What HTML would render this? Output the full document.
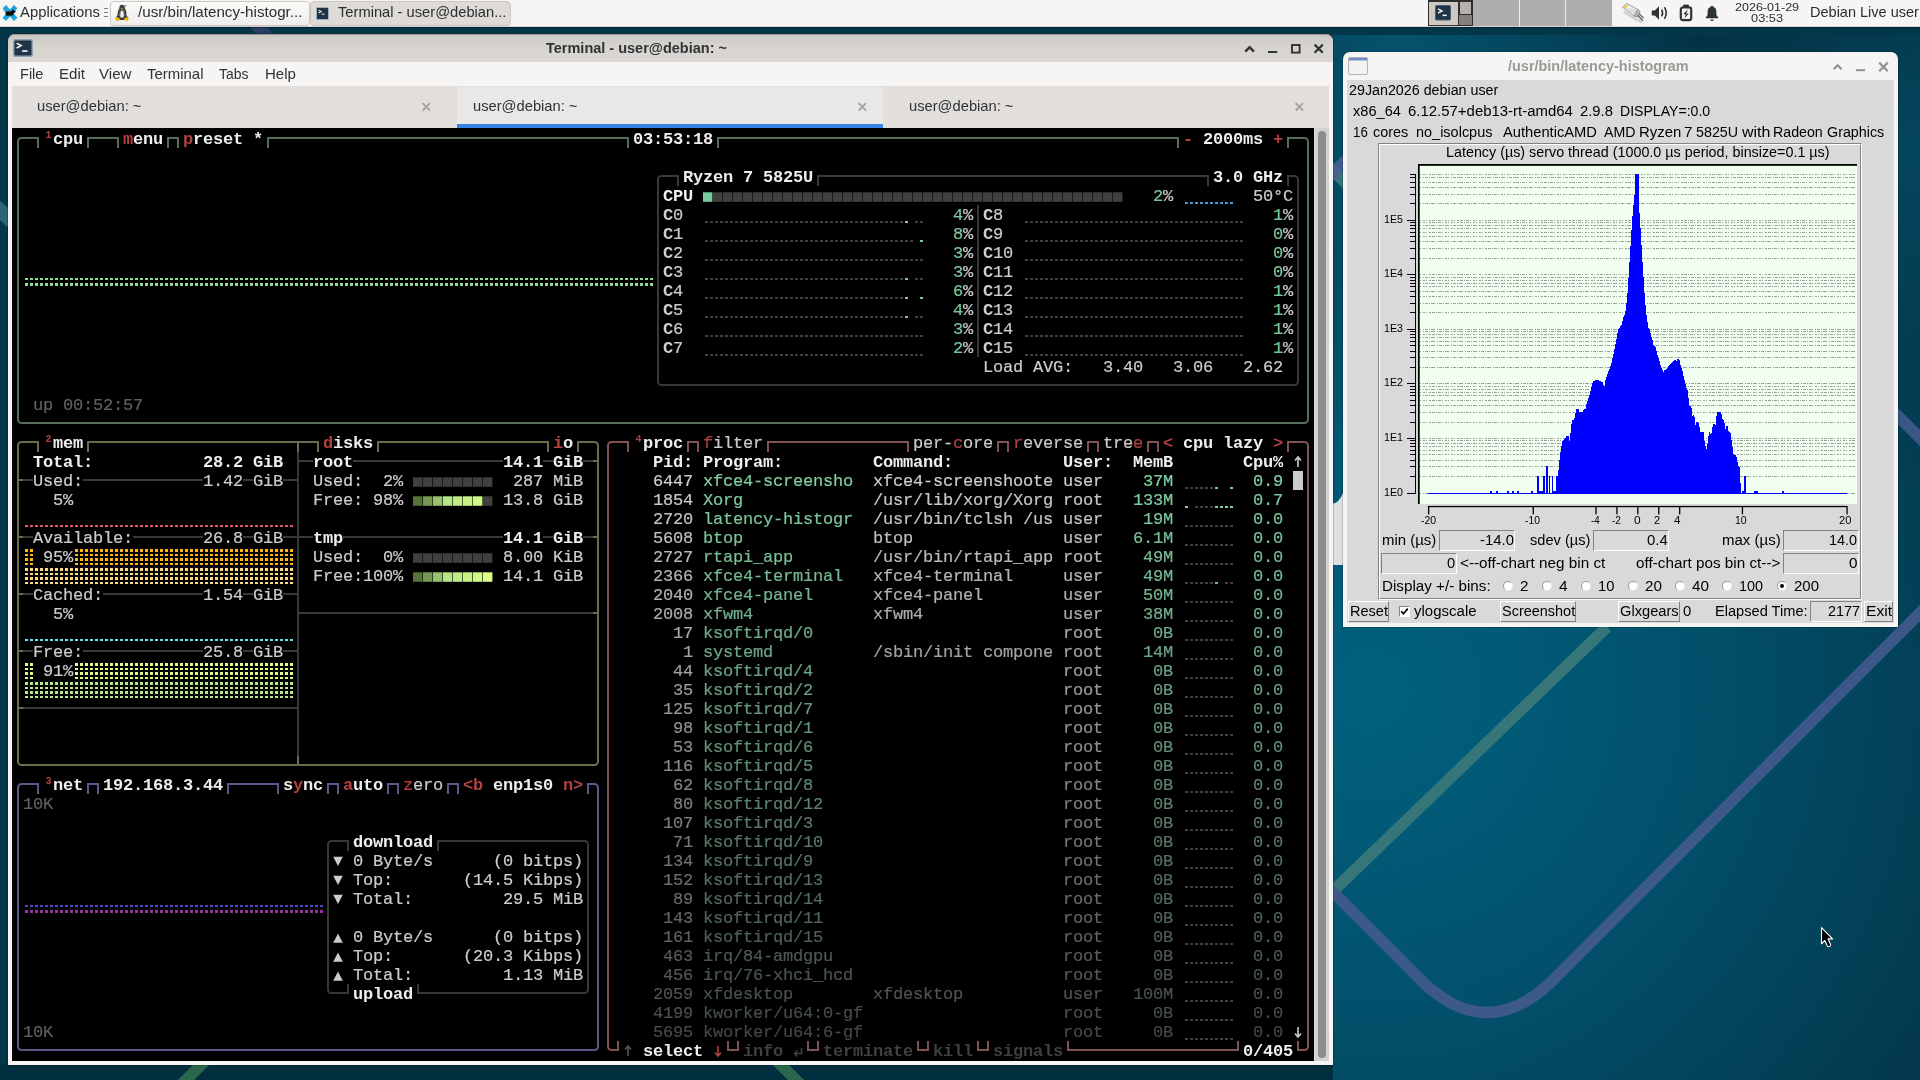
<!DOCTYPE html>
<html><head><meta charset="utf-8"><title>desktop</title>
<style>
html,body{margin:0;padding:0}
body{width:1920px;height:1080px;overflow:hidden;position:relative;background:#04384c;font-family:"Liberation Sans", sans-serif}
.abs{position:absolute}
.u{position:absolute;white-space:pre;font-family:"Liberation Sans", sans-serif;line-height:20px;transform-origin:0 50%}
#term{position:absolute;left:12px;top:128px;width:1302px;height:933px;background:#000;overflow:hidden}
#tin{position:absolute;left:1px;top:1px;width:1300px;height:931px;will-change:transform}
.tg{position:absolute;left:0;top:0}
.t,.s{position:absolute;white-space:pre;font-family:"Liberation Mono",monospace;font-size:17px;line-height:19px;letter-spacing:-0.2017px;height:19px;margin-top:0.6px}
.t{-webkit-text-stroke:0.2px}.b{font-weight:bold;-webkit-text-stroke:0}
.s{font-size:10px;line-height:10px;color:#b04040;font-weight:bold;letter-spacing:0;margin-top:1.7px;padding-left:2.4px}
</style></head>
<body>
<svg class="abs" style="left:0;top:0" width="1920" height="1080" viewBox="0 0 1920 1080">
<defs>
<radialGradient id="bgg" cx="1370" cy="690" r="760" gradientUnits="userSpaceOnUse">
<stop offset="0" stop-color="#00617f"/><stop offset="0.4" stop-color="#02526d"/><stop offset="0.75" stop-color="#033f55"/><stop offset="1" stop-color="#032f41"/>
</radialGradient>
<radialGradient id="bg2" cx="1400" cy="40" r="300" gradientUnits="userSpaceOnUse">
<stop offset="0" stop-color="#055470" stop-opacity="0.9"/><stop offset="1" stop-color="#055470" stop-opacity="0"/>
</radialGradient>
<radialGradient id="bg3" cx="1930" cy="150" r="260" gradientUnits="userSpaceOnUse">
<stop offset="0" stop-color="#05506a" stop-opacity="0.7"/><stop offset="1" stop-color="#05506a" stop-opacity="0"/>
</radialGradient>
</defs>
<rect width="1920" height="1080" fill="#04364a"/>
<rect x="1333" y="27" width="587" height="1053" fill="url(#bgg)"/>
<rect x="1333" y="27" width="587" height="400" fill="url(#bg2)"/>
<rect x="1333" y="27" width="587" height="500" fill="url(#bg3)"/>
<rect x="0" y="1065" width="1333" height="15" fill="#022f3f"/>
<rect x="0" y="27" width="1920" height="8" fill="#04364a"/>
<!-- diagonal wallpaper strokes -->
<g fill="none" stroke-width="11.5" stroke-linecap="butt">
<path d="M1330 894L1607 627" stroke="#3f7b7a" stroke-opacity="0.85"/>
<path d="M1326 885L1426 985Q1487 1040 1548 985L1930 603" stroke="#3f5a8c" stroke-opacity="0.95"/>
<path d="M1890 408L1930 448" stroke="#3f5a8c" stroke-opacity="0.9"/>
<path d="M176 1090L221 1045" stroke="#2f6e4e" stroke-opacity="0.9"/>
<path d="M761 1045L806 1090" stroke="#2f6e4e" stroke-opacity="0.9"/>
<path d="M-4 206L12 222" stroke="#3a7183" stroke-opacity="0.8" stroke-width="14"/>
<path d="M255 24L277 46" stroke="#2d3f66" stroke-opacity="0.9" stroke-width="12"/>
</g>
<!-- light wallpaper patch left of histogram window -->
<path d="M1333 503.5Q1339 503 1343 493V565H1333Z" fill="#dddfe2"/>
<path d="M1320 157.5L1360 197.5" stroke="#3f7b7a" stroke-opacity="0.9" stroke-width="11.5" fill="none"/>
<path d="M1320 186L1360 146" stroke="#4a5f96" stroke-opacity="0.85" stroke-width="11.5" fill="none"/>
</svg>

<div class="abs" style="left:0;top:0;width:1920px;height:26px;background:#f6f5f4;border-bottom:1px solid #d6d1cc;box-shadow:0 1px 0 rgba(0,10,20,0.4)"></div>
<!-- app menu icon -->
<svg class="abs" style="left:1px;top:4px" width="18" height="18" viewBox="0 0 18 18">
<path d="M3.3 2.7L14.7 15.3M14.7 2.7L3.3 15.3" stroke="#1ea5dc" stroke-width="4.8" fill="none"/>
<path d="M4.6 8.2Q5 7.2 6.4 7.4L10.2 7.2L11.4 5.8Q12.6 5.2 13.2 6.4L14.6 7.2Q15 8.2 13.8 8.6L12.6 9.4Q12.8 11 11.6 11.6L6 11.8Q4.2 11.4 4.6 8.2Z" fill="#0d0d0d"/>
<path d="M4.8 8L2.4 6.6" stroke="#555" stroke-width="0.6"/>
</svg>
<!-- handle -->
<div class="abs" style="left:104px;top:8px;width:4px;height:1px;background:#7c8082;box-shadow:0 4px 0 #7c8082,0 8px 0 #7c8082"></div>
<!-- task buttons -->
<div class="abs" style="left:110px;top:1px;width:198px;height:23px;border:1px solid #cdc7c2;border-radius:4px;background:linear-gradient(#fbfbfa,#eeedeb)"></div>
<div class="abs" style="left:310px;top:1px;width:199px;height:23px;border:1px solid #cdc7c2;border-radius:4px;background:#dedad6"></div>
<!-- wish icon -->
<svg class="abs" style="left:114px;top:4px" width="16" height="18" viewBox="0 0 16 18">
<path d="M7.8 0.8Q10.6 0.6 10.8 4Q13 7 12.6 11.5L14.5 14Q14 16.5 11 16H5Q1.5 16.8 1.6 14L3.4 11.5Q3.2 7 5.4 4Q5.2 1.2 7.8 0.8Z" fill="#3c3c3c"/>
<path d="M6.8 7Q8 6.2 9.2 7Q10.2 10 9.6 13.4H6.4Q5.8 10 6.8 7Z" fill="#ececec"/>
<path d="M5 5.5L6.5 7.5L5.2 12" stroke="#8a8a8a" stroke-width="0.8" fill="none"/>
<path d="M11 5.5L9.6 7.5L10.8 12" stroke="#8a8a8a" stroke-width="0.8" fill="none"/>
<path d="M1.8 13.4Q4.6 12.4 6.2 15.2Q4 17.6 1.6 16.4Z" fill="#f5b800"/><path d="M14.2 13.4Q11.4 12.4 9.8 15.2Q12 17.6 14.4 16.4Z" fill="#f5b800"/>
<path d="M6.6 4.4L9.4 4.4L8 6Z" fill="#f5b800"/>
<path d="M9.8 1.2L12.8 0.4L11.6 3.6Z" fill="#9a9a9a"/>
</svg>
<!-- terminal task icon -->
<svg class="abs" style="left:315.5px;top:6.5px" width="13" height="13" viewBox="0 0 13 13">
<rect x="0.5" y="0.5" width="12" height="12" rx="1" fill="#1e3346" stroke="#9fb0c0" stroke-width="1"/>
<path d="M2.6 3.2L5.2 4.6L2.6 6" fill="none" stroke="#e8e8e8" stroke-width="1.1"/><rect x="5.6" y="6.6" width="3" height="1.1" fill="#e8e8e8"/>
</svg>
<!-- workspace switcher -->
<div class="abs" style="left:1428px;top:0;width:184px;height:26px;background:#aeaeac"></div>
<div class="abs" style="left:1519px;top:0;width:1px;height:26px;background:#ecebea"></div>
<div class="abs" style="left:1565px;top:0;width:1px;height:26px;background:#ecebea"></div>
<div class="abs" style="left:1428px;top:0;width:45px;height:26px;background:#858079;box-sizing:border-box;border:1px solid #2e2e2e"></div>
<div class="abs" style="left:1428px;top:1px;width:31px;height:25px;background:#cdc8c2;box-sizing:border-box;border:1px solid #2e2e2e"></div>
<div class="abs" style="left:1459px;top:1px;width:13px;height:14px;background:#b7b1ab;box-sizing:border-box;border:1px solid #2e2e2e"></div>
<svg class="abs" style="left:1435px;top:5px" width="16" height="16" viewBox="0 0 16 16">
<rect x="0.5" y="0.5" width="15" height="14.5" rx="1" fill="#1e3346" stroke="#4a6076" stroke-width="1"/>
<path d="M3 3.8L7 6L3 8.2" fill="none" stroke="#f0f0f0" stroke-width="1.5"/><rect x="7.6" y="9.6" width="4.2" height="1.5" fill="#f0f0f0"/>
</svg>
<!-- tray: network -->
<svg class="abs" style="left:1621px;top:2px" width="24" height="22" viewBox="0 0 24 22">
<path d="M3 9.5L15 17.5L21 20" stroke="#bdbdbb" stroke-width="3" fill="none" stroke-opacity="0.6"/>
<path d="M1.6 5.2L5.8 1.6L16.6 7.4L13.4 14.2Z" fill="#ececea" stroke="#9c9c9a" stroke-width="1"/>
<path d="M1.6 5.2L13.4 14.2L16.6 7.4" fill="#d4d4d2" fill-opacity="0.6"/>
<path d="M2.4 5.2L5 3L6.8 4L4.4 6.6Z" fill="#f3c948"/>
<path d="M13.4 14.2L16.6 7.4L19.2 9.6L16.2 14.8Z" fill="#bcbcba" stroke="#858583" stroke-width="0.8"/>
<path d="M16.6 13.4L22 18.6M18 11.8L22.6 16" stroke="#6e6e6c" stroke-width="1.5" fill="none"/>
</svg>
<!-- volume -->
<svg class="abs" style="left:1651px;top:5px" width="18" height="16" viewBox="0 0 18 16">
<path d="M0.8 5.4H3.8L8 1.2V14.8L3.8 10.6H0.8Z" fill="#2e3436"/>
<path d="M10.6 4.6Q12.6 8 10.6 11.4" fill="none" stroke="#2e3436" stroke-width="1.6"/>
<path d="M13.4 2.2Q17 8 13.4 13.8" fill="none" stroke="#2e3436" stroke-width="1.6"/>
</svg>
<!-- battery -->
<svg class="abs" style="left:1679px;top:4px" width="14" height="18" viewBox="0 0 14 18">
<rect x="4.2" y="0.6" width="5.6" height="2.8" fill="#2e3436"/>
<rect x="1.8" y="3.4" width="10.4" height="12.8" rx="2.2" fill="none" stroke="#2e3436" stroke-width="2.2"/>
<path d="M8.8 5.4L4.2 10.2H6.8L5.2 14.4L9.8 9.4H7.2Z" fill="#2e3436"/>
</svg>
<!-- bell -->
<svg class="abs" style="left:1705px;top:5px" width="14" height="17" viewBox="0 0 14 17">
<path d="M7 0.8Q8 0.8 8.2 1.8Q11.4 2.8 11.4 7V10L13.2 12.4V13.2H0.8V12.4L2.6 10V7Q2.6 2.8 5.8 1.8Q6 0.8 7 0.8Z" fill="#2e3436"/>
<path d="M5.2 14.4H8.8Q8.4 16 7 16Q5.6 16 5.2 14.4Z" fill="#2e3436"/>
</svg>

<!-- terminal window frame -->
<div class="abs" style="left:8px;top:34px;width:1325px;height:1031px;background:#f6f5f4;border-radius:7px 7px 0 0;box-shadow:0 0 0 1px rgba(0,0,0,0.18)"></div>
<div class="abs" style="left:8px;top:34px;width:1325px;height:28px;border-radius:7px 7px 0 0;background:linear-gradient(#c6c2be,#cfcbc7 12%,#d6d2ce 40%,#dbd8d4);box-shadow:inset 0 1px 0 rgba(90,70,60,0.35)"></div>
<!-- window icon -->
<svg class="abs" style="left:13px;top:39px" width="20" height="18" viewBox="0 0 20 18">
<rect x="0.75" y="0.75" width="18.5" height="16.5" rx="1.5" fill="#1e3346" stroke="#93a1b0" stroke-width="1.5"/>
<path d="M3.6 4.2L8.2 6.6L3.6 9" fill="none" stroke="#f2f2f2" stroke-width="1.6"/><rect x="9.2" y="11.2" width="5.4" height="1.7" fill="#f2f2f2"/>
</svg>
<!-- window buttons -->
<svg class="abs" style="left:1240px;top:40px" width="90" height="18" viewBox="0 0 90 18" fill="none" stroke="#2e3436" stroke-width="2.1">
<path d="M5.3 11.6L9.6 7.2L13.9 11.6" stroke-width="2.5"/>
<path d="M28 12H37.2" stroke-width="2"/>
<rect x="52" y="5" width="7.6" height="7.6" stroke-width="1.9"/>
<path d="M74.6 4.6L82.8 12.8M82.8 4.6L74.6 12.8" stroke-width="2.2"/>
</svg>
<!-- tab bar -->
<div class="abs" style="left:12px;top:86px;width:1317px;height:42px;background:#e1dedb"></div>
<div class="abs" style="left:457px;top:87px;width:426px;height:41px;background:#e9e8e6"></div>
<div class="abs" style="left:457px;top:124px;width:426px;height:4px;background:#3584e4"></div>
<svg class="abs" style="left:421px;top:102px" width="890" height="10" viewBox="0 0 890 10" fill="none" stroke="#a5a3a0" stroke-width="1.9">
<path d="M1.6 1.2L9 8.6M9 1.2L1.6 8.6"/>
<path d="M437.6 1.2L445 8.6M445 1.2L437.6 8.6"/>
<path d="M874.6 1.2L882 8.6M882 1.2L874.6 8.6"/>
</svg>
<!-- scrollbar -->
<div class="abs" style="left:1314px;top:128px;width:15px;height:933px;background:#d2d2d2;box-sizing:border-box;border-left:1px solid #dedad7"></div>
<div class="abs" style="left:1318px;top:131px;width:8px;height:927px;background:#8b8d8e;border-radius:4px"></div>

<div id="term"><div id="tin">
<svg class="tg" width="1300" height="931" viewBox="0 0 1300 931" shape-rendering="crispEdges">
<path shape-rendering="geometricPrecision" d="M5 19L5 12.5A3.5 3.5 0 0 1 8.5 9L10 9" fill="none" stroke="#556d59" stroke-width="2"/><rect x="10" y="8" width="10" height="2" fill="#556d59"/><rect x="20" y="8" width="6" height="2" fill="#556d59"/><rect x="24" y="8" width="2" height="11" fill="#556d59"/><rect x="74" y="8" width="6" height="2" fill="#556d59"/><rect x="74" y="8" width="2" height="11" fill="#556d59"/><rect x="80" y="8" width="10" height="2" fill="#556d59"/><rect x="90" y="8" width="10" height="2" fill="#556d59"/><rect x="100" y="8" width="6" height="2" fill="#556d59"/><rect x="104" y="8" width="2" height="11" fill="#556d59"/><rect x="154" y="8" width="6" height="2" fill="#556d59"/><rect x="154" y="8" width="2" height="11" fill="#556d59"/><rect x="160" y="8" width="6" height="2" fill="#556d59"/><rect x="164" y="8" width="2" height="11" fill="#556d59"/><rect x="254" y="8" width="6" height="2" fill="#556d59"/><rect x="254" y="8" width="2" height="11" fill="#556d59"/><rect x="260" y="8" width="350" height="2" fill="#556d59"/><rect x="610" y="8" width="6" height="2" fill="#556d59"/><rect x="614" y="8" width="2" height="11" fill="#556d59"/><rect x="704" y="8" width="6" height="2" fill="#556d59"/><rect x="704" y="8" width="2" height="11" fill="#556d59"/><rect x="710" y="8" width="450" height="2" fill="#556d59"/><rect x="1160" y="8" width="6" height="2" fill="#556d59"/><rect x="1164" y="8" width="2" height="11" fill="#556d59"/><rect x="1274" y="8" width="6" height="2" fill="#556d59"/><rect x="1274" y="8" width="2" height="11" fill="#556d59"/><rect x="1280" y="8" width="10" height="2" fill="#556d59"/><path shape-rendering="geometricPrecision" d="M1295 19L1295 12.5A3.5 3.5 0 0 0 1291.5 9L1290 9" fill="none" stroke="#556d59" stroke-width="2"/><rect x="4" y="19" width="2" height="266" fill="#556d59"/><rect x="1294" y="19" width="2" height="266" fill="#556d59"/><path shape-rendering="geometricPrecision" d="M5 285L5 290.5A3.5 3.5 0 0 0 8.5 294L10 294" fill="none" stroke="#556d59" stroke-width="2"/><path shape-rendering="geometricPrecision" d="M1295 285L1295 290.5A3.5 3.5 0 0 1 1291.5 294L1290 294" fill="none" stroke="#556d59" stroke-width="2"/><rect x="10" y="293" width="1280" height="2" fill="#556d59"/><rect x="12" y="148.8" width="3" height="2.6" fill="#8fdc9a"/><rect x="17" y="148.8" width="3" height="2.6" fill="#8fdc9a"/><rect x="22" y="148.8" width="3" height="2.6" fill="#8fdc9a"/><rect x="27" y="148.8" width="3" height="2.6" fill="#8fdc9a"/><rect x="32" y="148.8" width="3" height="2.6" fill="#8fdc9a"/><rect x="37" y="148.8" width="3" height="2.6" fill="#8fdc9a"/><rect x="42" y="148.8" width="3" height="2.6" fill="#8fdc9a"/><rect x="47" y="148.8" width="3" height="2.6" fill="#8fdc9a"/><rect x="52" y="148.8" width="3" height="2.6" fill="#8fdc9a"/><rect x="57" y="148.8" width="3" height="2.6" fill="#8fdc9a"/><rect x="62" y="148.8" width="3" height="2.6" fill="#8fdc9a"/><rect x="67" y="148.8" width="3" height="2.6" fill="#8fdc9a"/><rect x="72" y="148.8" width="3" height="2.6" fill="#8fdc9a"/><rect x="77" y="148.8" width="3" height="2.6" fill="#8fdc9a"/><rect x="82" y="148.8" width="3" height="2.6" fill="#8fdc9a"/><rect x="87" y="148.8" width="3" height="2.6" fill="#8fdc9a"/><rect x="92" y="148.8" width="3" height="2.6" fill="#8fdc9a"/><rect x="97" y="148.8" width="3" height="2.6" fill="#8fdc9a"/><rect x="102" y="148.8" width="3" height="2.6" fill="#8fdc9a"/><rect x="107" y="148.8" width="3" height="2.6" fill="#8fdc9a"/><rect x="112" y="148.8" width="3" height="2.6" fill="#8fdc9a"/><rect x="117" y="148.8" width="3" height="2.6" fill="#8fdc9a"/><rect x="122" y="148.8" width="3" height="2.6" fill="#8fdc9a"/><rect x="127" y="148.8" width="3" height="2.6" fill="#8fdc9a"/><rect x="132" y="148.8" width="3" height="2.6" fill="#8fdc9a"/><rect x="137" y="148.8" width="3" height="2.6" fill="#8fdc9a"/><rect x="142" y="148.8" width="3" height="2.6" fill="#8fdc9a"/><rect x="147" y="148.8" width="3" height="2.6" fill="#8fdc9a"/><rect x="152" y="148.8" width="3" height="2.6" fill="#8fdc9a"/><rect x="157" y="148.8" width="3" height="2.6" fill="#8fdc9a"/><rect x="162" y="148.8" width="3" height="2.6" fill="#8fdc9a"/><rect x="167" y="148.8" width="3" height="2.6" fill="#8fdc9a"/><rect x="172" y="148.8" width="3" height="2.6" fill="#8fdc9a"/><rect x="177" y="148.8" width="3" height="2.6" fill="#8fdc9a"/><rect x="182" y="148.8" width="3" height="2.6" fill="#8fdc9a"/><rect x="187" y="148.8" width="3" height="2.6" fill="#8fdc9a"/><rect x="192" y="148.8" width="3" height="2.6" fill="#8fdc9a"/><rect x="197" y="148.8" width="3" height="2.6" fill="#8fdc9a"/><rect x="202" y="148.8" width="3" height="2.6" fill="#8fdc9a"/><rect x="207" y="148.8" width="3" height="2.6" fill="#8fdc9a"/><rect x="212" y="148.8" width="3" height="2.6" fill="#8fdc9a"/><rect x="217" y="148.8" width="3" height="2.6" fill="#8fdc9a"/><rect x="222" y="148.8" width="3" height="2.6" fill="#8fdc9a"/><rect x="227" y="148.8" width="3" height="2.6" fill="#8fdc9a"/><rect x="232" y="148.8" width="3" height="2.6" fill="#8fdc9a"/><rect x="237" y="148.8" width="3" height="2.6" fill="#8fdc9a"/><rect x="242" y="148.8" width="3" height="2.6" fill="#8fdc9a"/><rect x="247" y="148.8" width="3" height="2.6" fill="#8fdc9a"/><rect x="252" y="148.8" width="3" height="2.6" fill="#8fdc9a"/><rect x="257" y="148.8" width="3" height="2.6" fill="#8fdc9a"/><rect x="262" y="148.8" width="3" height="2.6" fill="#8fdc9a"/><rect x="267" y="148.8" width="3" height="2.6" fill="#8fdc9a"/><rect x="272" y="148.8" width="3" height="2.6" fill="#8fdc9a"/><rect x="277" y="148.8" width="3" height="2.6" fill="#8fdc9a"/><rect x="282" y="148.8" width="3" height="2.6" fill="#8fdc9a"/><rect x="287" y="148.8" width="3" height="2.6" fill="#8fdc9a"/><rect x="292" y="148.8" width="3" height="2.6" fill="#8fdc9a"/><rect x="297" y="148.8" width="3" height="2.6" fill="#8fdc9a"/><rect x="302" y="148.8" width="3" height="2.6" fill="#8fdc9a"/><rect x="307" y="148.8" width="3" height="2.6" fill="#8fdc9a"/><rect x="312" y="148.8" width="3" height="2.6" fill="#8fdc9a"/><rect x="317" y="148.8" width="3" height="2.6" fill="#8fdc9a"/><rect x="322" y="148.8" width="3" height="2.6" fill="#8fdc9a"/><rect x="327" y="148.8" width="3" height="2.6" fill="#8fdc9a"/><rect x="332" y="148.8" width="3" height="2.6" fill="#8fdc9a"/><rect x="337" y="148.8" width="3" height="2.6" fill="#8fdc9a"/><rect x="342" y="148.8" width="3" height="2.6" fill="#8fdc9a"/><rect x="347" y="148.8" width="3" height="2.6" fill="#8fdc9a"/><rect x="352" y="148.8" width="3" height="2.6" fill="#8fdc9a"/><rect x="357" y="148.8" width="3" height="2.6" fill="#8fdc9a"/><rect x="362" y="148.8" width="3" height="2.6" fill="#8fdc9a"/><rect x="367" y="148.8" width="3" height="2.6" fill="#8fdc9a"/><rect x="372" y="148.8" width="3" height="2.6" fill="#8fdc9a"/><rect x="377" y="148.8" width="3" height="2.6" fill="#8fdc9a"/><rect x="382" y="148.8" width="3" height="2.6" fill="#8fdc9a"/><rect x="387" y="148.8" width="3" height="2.6" fill="#8fdc9a"/><rect x="392" y="148.8" width="3" height="2.6" fill="#8fdc9a"/><rect x="397" y="148.8" width="3" height="2.6" fill="#8fdc9a"/><rect x="402" y="148.8" width="3" height="2.6" fill="#8fdc9a"/><rect x="407" y="148.8" width="3" height="2.6" fill="#8fdc9a"/><rect x="412" y="148.8" width="3" height="2.6" fill="#8fdc9a"/><rect x="417" y="148.8" width="3" height="2.6" fill="#8fdc9a"/><rect x="422" y="148.8" width="3" height="2.6" fill="#8fdc9a"/><rect x="427" y="148.8" width="3" height="2.6" fill="#8fdc9a"/><rect x="432" y="148.8" width="3" height="2.6" fill="#8fdc9a"/><rect x="437" y="148.8" width="3" height="2.6" fill="#8fdc9a"/><rect x="442" y="148.8" width="3" height="2.6" fill="#8fdc9a"/><rect x="447" y="148.8" width="3" height="2.6" fill="#8fdc9a"/><rect x="452" y="148.8" width="3" height="2.6" fill="#8fdc9a"/><rect x="457" y="148.8" width="3" height="2.6" fill="#8fdc9a"/><rect x="462" y="148.8" width="3" height="2.6" fill="#8fdc9a"/><rect x="467" y="148.8" width="3" height="2.6" fill="#8fdc9a"/><rect x="472" y="148.8" width="3" height="2.6" fill="#8fdc9a"/><rect x="477" y="148.8" width="3" height="2.6" fill="#8fdc9a"/><rect x="482" y="148.8" width="3" height="2.6" fill="#8fdc9a"/><rect x="487" y="148.8" width="3" height="2.6" fill="#8fdc9a"/><rect x="492" y="148.8" width="3" height="2.6" fill="#8fdc9a"/><rect x="497" y="148.8" width="3" height="2.6" fill="#8fdc9a"/><rect x="502" y="148.8" width="3" height="2.6" fill="#8fdc9a"/><rect x="507" y="148.8" width="3" height="2.6" fill="#8fdc9a"/><rect x="512" y="148.8" width="3" height="2.6" fill="#8fdc9a"/><rect x="517" y="148.8" width="3" height="2.6" fill="#8fdc9a"/><rect x="522" y="148.8" width="3" height="2.6" fill="#8fdc9a"/><rect x="527" y="148.8" width="3" height="2.6" fill="#8fdc9a"/><rect x="532" y="148.8" width="3" height="2.6" fill="#8fdc9a"/><rect x="537" y="148.8" width="3" height="2.6" fill="#8fdc9a"/><rect x="542" y="148.8" width="3" height="2.6" fill="#8fdc9a"/><rect x="547" y="148.8" width="3" height="2.6" fill="#8fdc9a"/><rect x="552" y="148.8" width="3" height="2.6" fill="#8fdc9a"/><rect x="557" y="148.8" width="3" height="2.6" fill="#8fdc9a"/><rect x="562" y="148.8" width="3" height="2.6" fill="#8fdc9a"/><rect x="567" y="148.8" width="3" height="2.6" fill="#8fdc9a"/><rect x="572" y="148.8" width="3" height="2.6" fill="#8fdc9a"/><rect x="577" y="148.8" width="3" height="2.6" fill="#8fdc9a"/><rect x="582" y="148.8" width="3" height="2.6" fill="#8fdc9a"/><rect x="587" y="148.8" width="3" height="2.6" fill="#8fdc9a"/><rect x="592" y="148.8" width="3" height="2.6" fill="#8fdc9a"/><rect x="597" y="148.8" width="3" height="2.6" fill="#8fdc9a"/><rect x="602" y="148.8" width="3" height="2.6" fill="#8fdc9a"/><rect x="607" y="148.8" width="3" height="2.6" fill="#8fdc9a"/><rect x="612" y="148.8" width="3" height="2.6" fill="#8fdc9a"/><rect x="617" y="148.8" width="3" height="2.6" fill="#8fdc9a"/><rect x="622" y="148.8" width="3" height="2.6" fill="#8fdc9a"/><rect x="627" y="148.8" width="3" height="2.6" fill="#8fdc9a"/><rect x="632" y="148.8" width="3" height="2.6" fill="#8fdc9a"/><rect x="637" y="148.8" width="3" height="2.6" fill="#8fdc9a"/><rect x="12" y="154.3" width="3" height="2.6" fill="#8fdc9a"/><rect x="17" y="154.3" width="3" height="2.6" fill="#8fdc9a"/><rect x="22" y="154.3" width="3" height="2.6" fill="#8fdc9a"/><rect x="27" y="154.3" width="3" height="2.6" fill="#8fdc9a"/><rect x="32" y="154.3" width="3" height="2.6" fill="#8fdc9a"/><rect x="37" y="154.3" width="3" height="2.6" fill="#8fdc9a"/><rect x="42" y="154.3" width="3" height="2.6" fill="#8fdc9a"/><rect x="47" y="154.3" width="3" height="2.6" fill="#8fdc9a"/><rect x="52" y="154.3" width="3" height="2.6" fill="#8fdc9a"/><rect x="57" y="154.3" width="3" height="2.6" fill="#8fdc9a"/><rect x="62" y="154.3" width="3" height="2.6" fill="#8fdc9a"/><rect x="67" y="154.3" width="3" height="2.6" fill="#8fdc9a"/><rect x="72" y="154.3" width="3" height="2.6" fill="#8fdc9a"/><rect x="77" y="154.3" width="3" height="2.6" fill="#8fdc9a"/><rect x="82" y="154.3" width="3" height="2.6" fill="#8fdc9a"/><rect x="87" y="154.3" width="3" height="2.6" fill="#8fdc9a"/><rect x="92" y="154.3" width="3" height="2.6" fill="#8fdc9a"/><rect x="97" y="154.3" width="3" height="2.6" fill="#8fdc9a"/><rect x="102" y="154.3" width="3" height="2.6" fill="#8fdc9a"/><rect x="107" y="154.3" width="3" height="2.6" fill="#8fdc9a"/><rect x="112" y="154.3" width="3" height="2.6" fill="#8fdc9a"/><rect x="117" y="154.3" width="3" height="2.6" fill="#8fdc9a"/><rect x="122" y="154.3" width="3" height="2.6" fill="#8fdc9a"/><rect x="127" y="154.3" width="3" height="2.6" fill="#8fdc9a"/><rect x="132" y="154.3" width="3" height="2.6" fill="#8fdc9a"/><rect x="137" y="154.3" width="3" height="2.6" fill="#8fdc9a"/><rect x="142" y="154.3" width="3" height="2.6" fill="#8fdc9a"/><rect x="147" y="154.3" width="3" height="2.6" fill="#8fdc9a"/><rect x="152" y="154.3" width="3" height="2.6" fill="#8fdc9a"/><rect x="157" y="154.3" width="3" height="2.6" fill="#8fdc9a"/><rect x="162" y="154.3" width="3" height="2.6" fill="#8fdc9a"/><rect x="167" y="154.3" width="3" height="2.6" fill="#8fdc9a"/><rect x="172" y="154.3" width="3" height="2.6" fill="#8fdc9a"/><rect x="177" y="154.3" width="3" height="2.6" fill="#8fdc9a"/><rect x="182" y="154.3" width="3" height="2.6" fill="#8fdc9a"/><rect x="187" y="154.3" width="3" height="2.6" fill="#8fdc9a"/><rect x="192" y="154.3" width="3" height="2.6" fill="#8fdc9a"/><rect x="197" y="154.3" width="3" height="2.6" fill="#8fdc9a"/><rect x="202" y="154.3" width="3" height="2.6" fill="#8fdc9a"/><rect x="207" y="154.3" width="3" height="2.6" fill="#8fdc9a"/><rect x="212" y="154.3" width="3" height="2.6" fill="#8fdc9a"/><rect x="217" y="154.3" width="3" height="2.6" fill="#8fdc9a"/><rect x="222" y="154.3" width="3" height="2.6" fill="#8fdc9a"/><rect x="227" y="154.3" width="3" height="2.6" fill="#8fdc9a"/><rect x="232" y="154.3" width="3" height="2.6" fill="#8fdc9a"/><rect x="237" y="154.3" width="3" height="2.6" fill="#8fdc9a"/><rect x="242" y="154.3" width="3" height="2.6" fill="#8fdc9a"/><rect x="247" y="154.3" width="3" height="2.6" fill="#8fdc9a"/><rect x="252" y="154.3" width="3" height="2.6" fill="#8fdc9a"/><rect x="257" y="154.3" width="3" height="2.6" fill="#8fdc9a"/><rect x="262" y="154.3" width="3" height="2.6" fill="#8fdc9a"/><rect x="267" y="154.3" width="3" height="2.6" fill="#8fdc9a"/><rect x="272" y="154.3" width="3" height="2.6" fill="#8fdc9a"/><rect x="277" y="154.3" width="3" height="2.6" fill="#8fdc9a"/><rect x="282" y="154.3" width="3" height="2.6" fill="#8fdc9a"/><rect x="287" y="154.3" width="3" height="2.6" fill="#8fdc9a"/><rect x="292" y="154.3" width="3" height="2.6" fill="#8fdc9a"/><rect x="297" y="154.3" width="3" height="2.6" fill="#8fdc9a"/><rect x="302" y="154.3" width="3" height="2.6" fill="#8fdc9a"/><rect x="307" y="154.3" width="3" height="2.6" fill="#8fdc9a"/><rect x="312" y="154.3" width="3" height="2.6" fill="#8fdc9a"/><rect x="317" y="154.3" width="3" height="2.6" fill="#8fdc9a"/><rect x="322" y="154.3" width="3" height="2.6" fill="#8fdc9a"/><rect x="327" y="154.3" width="3" height="2.6" fill="#8fdc9a"/><rect x="332" y="154.3" width="3" height="2.6" fill="#8fdc9a"/><rect x="337" y="154.3" width="3" height="2.6" fill="#8fdc9a"/><rect x="342" y="154.3" width="3" height="2.6" fill="#8fdc9a"/><rect x="347" y="154.3" width="3" height="2.6" fill="#8fdc9a"/><rect x="352" y="154.3" width="3" height="2.6" fill="#8fdc9a"/><rect x="357" y="154.3" width="3" height="2.6" fill="#8fdc9a"/><rect x="362" y="154.3" width="3" height="2.6" fill="#8fdc9a"/><rect x="367" y="154.3" width="3" height="2.6" fill="#8fdc9a"/><rect x="372" y="154.3" width="3" height="2.6" fill="#8fdc9a"/><rect x="377" y="154.3" width="3" height="2.6" fill="#8fdc9a"/><rect x="382" y="154.3" width="3" height="2.6" fill="#8fdc9a"/><rect x="387" y="154.3" width="3" height="2.6" fill="#8fdc9a"/><rect x="392" y="154.3" width="3" height="2.6" fill="#8fdc9a"/><rect x="397" y="154.3" width="3" height="2.6" fill="#8fdc9a"/><rect x="402" y="154.3" width="3" height="2.6" fill="#8fdc9a"/><rect x="407" y="154.3" width="3" height="2.6" fill="#8fdc9a"/><rect x="412" y="154.3" width="3" height="2.6" fill="#8fdc9a"/><rect x="417" y="154.3" width="3" height="2.6" fill="#8fdc9a"/><rect x="422" y="154.3" width="3" height="2.6" fill="#8fdc9a"/><rect x="427" y="154.3" width="3" height="2.6" fill="#8fdc9a"/><rect x="432" y="154.3" width="3" height="2.6" fill="#8fdc9a"/><rect x="437" y="154.3" width="3" height="2.6" fill="#8fdc9a"/><rect x="442" y="154.3" width="3" height="2.6" fill="#8fdc9a"/><rect x="447" y="154.3" width="3" height="2.6" fill="#8fdc9a"/><rect x="452" y="154.3" width="3" height="2.6" fill="#8fdc9a"/><rect x="457" y="154.3" width="3" height="2.6" fill="#8fdc9a"/><rect x="462" y="154.3" width="3" height="2.6" fill="#8fdc9a"/><rect x="467" y="154.3" width="3" height="2.6" fill="#8fdc9a"/><rect x="472" y="154.3" width="3" height="2.6" fill="#8fdc9a"/><rect x="477" y="154.3" width="3" height="2.6" fill="#8fdc9a"/><rect x="482" y="154.3" width="3" height="2.6" fill="#8fdc9a"/><rect x="487" y="154.3" width="3" height="2.6" fill="#8fdc9a"/><rect x="492" y="154.3" width="3" height="2.6" fill="#8fdc9a"/><rect x="497" y="154.3" width="3" height="2.6" fill="#8fdc9a"/><rect x="502" y="154.3" width="3" height="2.6" fill="#8fdc9a"/><rect x="507" y="154.3" width="3" height="2.6" fill="#8fdc9a"/><rect x="512" y="154.3" width="3" height="2.6" fill="#8fdc9a"/><rect x="517" y="154.3" width="3" height="2.6" fill="#8fdc9a"/><rect x="522" y="154.3" width="3" height="2.6" fill="#8fdc9a"/><rect x="527" y="154.3" width="3" height="2.6" fill="#8fdc9a"/><rect x="532" y="154.3" width="3" height="2.6" fill="#8fdc9a"/><rect x="537" y="154.3" width="3" height="2.6" fill="#8fdc9a"/><rect x="542" y="154.3" width="3" height="2.6" fill="#8fdc9a"/><rect x="547" y="154.3" width="3" height="2.6" fill="#8fdc9a"/><rect x="552" y="154.3" width="3" height="2.6" fill="#8fdc9a"/><rect x="557" y="154.3" width="3" height="2.6" fill="#8fdc9a"/><rect x="562" y="154.3" width="3" height="2.6" fill="#8fdc9a"/><rect x="567" y="154.3" width="3" height="2.6" fill="#8fdc9a"/><rect x="572" y="154.3" width="3" height="2.6" fill="#8fdc9a"/><rect x="577" y="154.3" width="3" height="2.6" fill="#8fdc9a"/><rect x="582" y="154.3" width="3" height="2.6" fill="#8fdc9a"/><rect x="587" y="154.3" width="3" height="2.6" fill="#8fdc9a"/><rect x="592" y="154.3" width="3" height="2.6" fill="#8fdc9a"/><rect x="597" y="154.3" width="3" height="2.6" fill="#8fdc9a"/><rect x="602" y="154.3" width="3" height="2.6" fill="#8fdc9a"/><rect x="607" y="154.3" width="3" height="2.6" fill="#8fdc9a"/><rect x="612" y="154.3" width="3" height="2.6" fill="#8fdc9a"/><rect x="617" y="154.3" width="3" height="2.6" fill="#8fdc9a"/><rect x="622" y="154.3" width="3" height="2.6" fill="#8fdc9a"/><rect x="627" y="154.3" width="3" height="2.6" fill="#8fdc9a"/><rect x="632" y="154.3" width="3" height="2.6" fill="#8fdc9a"/><rect x="637" y="154.3" width="3" height="2.6" fill="#8fdc9a"/><path shape-rendering="geometricPrecision" d="M645 57L645 50.5A3.5 3.5 0 0 1 648.5 47L650 47" fill="none" stroke="#383838" stroke-width="2"/><rect x="650" y="46" width="10" height="2" fill="#383838"/><rect x="660" y="46" width="6" height="2" fill="#383838"/><rect x="664" y="46" width="2" height="11" fill="#383838"/><rect x="804" y="46" width="6" height="2" fill="#383838"/><rect x="804" y="46" width="2" height="11" fill="#383838"/><rect x="810" y="46" width="380" height="2" fill="#383838"/><rect x="1190" y="46" width="6" height="2" fill="#383838"/><rect x="1194" y="46" width="2" height="11" fill="#383838"/><rect x="1274" y="46" width="6" height="2" fill="#383838"/><rect x="1274" y="46" width="2" height="11" fill="#383838"/><path shape-rendering="geometricPrecision" d="M1285 57L1285 50.5A3.5 3.5 0 0 0 1281.5 47L1280 47" fill="none" stroke="#383838" stroke-width="2"/><rect x="644" y="57" width="2" height="190" fill="#383838"/><rect x="1284" y="57" width="2" height="190" fill="#383838"/><path shape-rendering="geometricPrecision" d="M645 247L645 252.5A3.5 3.5 0 0 0 648.5 256L650 256" fill="none" stroke="#383838" stroke-width="2"/><path shape-rendering="geometricPrecision" d="M1285 247L1285 252.5A3.5 3.5 0 0 1 1281.5 256L1280 256" fill="none" stroke="#383838" stroke-width="2"/><rect x="650" y="255" width="630" height="2" fill="#383838"/><rect x="964" y="76" width="2" height="152" fill="#383838"/><rect shape-rendering="geometricPrecision" x="690" y="63.3" width="9.4" height="9.5" fill="#77ca9b"/><rect shape-rendering="geometricPrecision" x="700" y="63.3" width="9.4" height="9.5" fill="#404040"/><rect shape-rendering="geometricPrecision" x="710" y="63.3" width="9.4" height="9.5" fill="#404040"/><rect shape-rendering="geometricPrecision" x="720" y="63.3" width="9.4" height="9.5" fill="#404040"/><rect shape-rendering="geometricPrecision" x="730" y="63.3" width="9.4" height="9.5" fill="#404040"/><rect shape-rendering="geometricPrecision" x="740" y="63.3" width="9.4" height="9.5" fill="#404040"/><rect shape-rendering="geometricPrecision" x="750" y="63.3" width="9.4" height="9.5" fill="#404040"/><rect shape-rendering="geometricPrecision" x="760" y="63.3" width="9.4" height="9.5" fill="#404040"/><rect shape-rendering="geometricPrecision" x="770" y="63.3" width="9.4" height="9.5" fill="#404040"/><rect shape-rendering="geometricPrecision" x="780" y="63.3" width="9.4" height="9.5" fill="#404040"/><rect shape-rendering="geometricPrecision" x="790" y="63.3" width="9.4" height="9.5" fill="#404040"/><rect shape-rendering="geometricPrecision" x="800" y="63.3" width="9.4" height="9.5" fill="#404040"/><rect shape-rendering="geometricPrecision" x="810" y="63.3" width="9.4" height="9.5" fill="#404040"/><rect shape-rendering="geometricPrecision" x="820" y="63.3" width="9.4" height="9.5" fill="#404040"/><rect shape-rendering="geometricPrecision" x="830" y="63.3" width="9.4" height="9.5" fill="#404040"/><rect shape-rendering="geometricPrecision" x="840" y="63.3" width="9.4" height="9.5" fill="#404040"/><rect shape-rendering="geometricPrecision" x="850" y="63.3" width="9.4" height="9.5" fill="#404040"/><rect shape-rendering="geometricPrecision" x="860" y="63.3" width="9.4" height="9.5" fill="#404040"/><rect shape-rendering="geometricPrecision" x="870" y="63.3" width="9.4" height="9.5" fill="#404040"/><rect shape-rendering="geometricPrecision" x="880" y="63.3" width="9.4" height="9.5" fill="#404040"/><rect shape-rendering="geometricPrecision" x="890" y="63.3" width="9.4" height="9.5" fill="#404040"/><rect shape-rendering="geometricPrecision" x="900" y="63.3" width="9.4" height="9.5" fill="#404040"/><rect shape-rendering="geometricPrecision" x="910" y="63.3" width="9.4" height="9.5" fill="#404040"/><rect shape-rendering="geometricPrecision" x="920" y="63.3" width="9.4" height="9.5" fill="#404040"/><rect shape-rendering="geometricPrecision" x="930" y="63.3" width="9.4" height="9.5" fill="#404040"/><rect shape-rendering="geometricPrecision" x="940" y="63.3" width="9.4" height="9.5" fill="#404040"/><rect shape-rendering="geometricPrecision" x="950" y="63.3" width="9.4" height="9.5" fill="#404040"/><rect shape-rendering="geometricPrecision" x="960" y="63.3" width="9.4" height="9.5" fill="#404040"/><rect shape-rendering="geometricPrecision" x="970" y="63.3" width="9.4" height="9.5" fill="#404040"/><rect shape-rendering="geometricPrecision" x="980" y="63.3" width="9.4" height="9.5" fill="#404040"/><rect shape-rendering="geometricPrecision" x="990" y="63.3" width="9.4" height="9.5" fill="#404040"/><rect shape-rendering="geometricPrecision" x="1000" y="63.3" width="9.4" height="9.5" fill="#404040"/><rect shape-rendering="geometricPrecision" x="1010" y="63.3" width="9.4" height="9.5" fill="#404040"/><rect shape-rendering="geometricPrecision" x="1020" y="63.3" width="9.4" height="9.5" fill="#404040"/><rect shape-rendering="geometricPrecision" x="1030" y="63.3" width="9.4" height="9.5" fill="#404040"/><rect shape-rendering="geometricPrecision" x="1040" y="63.3" width="9.4" height="9.5" fill="#404040"/><rect shape-rendering="geometricPrecision" x="1050" y="63.3" width="9.4" height="9.5" fill="#404040"/><rect shape-rendering="geometricPrecision" x="1060" y="63.3" width="9.4" height="9.5" fill="#404040"/><rect shape-rendering="geometricPrecision" x="1070" y="63.3" width="9.4" height="9.5" fill="#404040"/><rect shape-rendering="geometricPrecision" x="1080" y="63.3" width="9.4" height="9.5" fill="#404040"/><rect shape-rendering="geometricPrecision" x="1090" y="63.3" width="9.4" height="9.5" fill="#404040"/><rect shape-rendering="geometricPrecision" x="1100" y="63.3" width="9.4" height="9.5" fill="#404040"/><rect x="1172" y="72.8" width="3" height="2.6" fill="#4897d4"/><rect x="1177" y="72.8" width="3" height="2.6" fill="#4897d4"/><rect x="1182" y="72.8" width="3" height="2.6" fill="#4897d4"/><rect x="1187" y="72.8" width="3" height="2.6" fill="#4897d4"/><rect x="1192" y="72.8" width="3" height="2.6" fill="#4897d4"/><rect x="1197" y="72.8" width="3" height="2.6" fill="#4897d4"/><rect x="1202" y="72.8" width="3" height="2.6" fill="#4897d4"/><rect x="1207" y="72.8" width="3" height="2.6" fill="#4897d4"/><rect x="1212" y="72.8" width="3" height="2.6" fill="#4897d4"/><rect x="1217" y="72.8" width="3" height="2.6" fill="#4897d4"/><rect x="692" y="91.8" width="3" height="2.6" fill="#404040"/><rect x="697" y="91.8" width="3" height="2.6" fill="#404040"/><rect x="702" y="91.8" width="3" height="2.6" fill="#404040"/><rect x="707" y="91.8" width="3" height="2.6" fill="#404040"/><rect x="712" y="91.8" width="3" height="2.6" fill="#404040"/><rect x="717" y="91.8" width="3" height="2.6" fill="#404040"/><rect x="722" y="91.8" width="3" height="2.6" fill="#404040"/><rect x="727" y="91.8" width="3" height="2.6" fill="#404040"/><rect x="732" y="91.8" width="3" height="2.6" fill="#404040"/><rect x="737" y="91.8" width="3" height="2.6" fill="#404040"/><rect x="742" y="91.8" width="3" height="2.6" fill="#404040"/><rect x="747" y="91.8" width="3" height="2.6" fill="#404040"/><rect x="752" y="91.8" width="3" height="2.6" fill="#404040"/><rect x="757" y="91.8" width="3" height="2.6" fill="#404040"/><rect x="762" y="91.8" width="3" height="2.6" fill="#404040"/><rect x="767" y="91.8" width="3" height="2.6" fill="#404040"/><rect x="772" y="91.8" width="3" height="2.6" fill="#404040"/><rect x="777" y="91.8" width="3" height="2.6" fill="#404040"/><rect x="782" y="91.8" width="3" height="2.6" fill="#404040"/><rect x="787" y="91.8" width="3" height="2.6" fill="#404040"/><rect x="792" y="91.8" width="3" height="2.6" fill="#404040"/><rect x="797" y="91.8" width="3" height="2.6" fill="#404040"/><rect x="802" y="91.8" width="3" height="2.6" fill="#404040"/><rect x="807" y="91.8" width="3" height="2.6" fill="#404040"/><rect x="812" y="91.8" width="3" height="2.6" fill="#404040"/><rect x="817" y="91.8" width="3" height="2.6" fill="#404040"/><rect x="822" y="91.8" width="3" height="2.6" fill="#404040"/><rect x="827" y="91.8" width="3" height="2.6" fill="#404040"/><rect x="832" y="91.8" width="3" height="2.6" fill="#404040"/><rect x="837" y="91.8" width="3" height="2.6" fill="#404040"/><rect x="842" y="91.8" width="3" height="2.6" fill="#404040"/><rect x="847" y="91.8" width="3" height="2.6" fill="#404040"/><rect x="852" y="91.8" width="3" height="2.6" fill="#404040"/><rect x="857" y="91.8" width="3" height="2.6" fill="#404040"/><rect x="862" y="91.8" width="3" height="2.6" fill="#404040"/><rect x="867" y="91.8" width="3" height="2.6" fill="#404040"/><rect x="872" y="91.8" width="3" height="2.6" fill="#404040"/><rect x="877" y="91.8" width="3" height="2.6" fill="#404040"/><rect x="882" y="91.8" width="3" height="2.6" fill="#404040"/><rect x="887" y="91.8" width="3" height="2.6" fill="#404040"/><rect x="892" y="91.8" width="3" height="2.6" fill="#77ca9b"/><rect x="902" y="91.8" width="3" height="2.6" fill="#404040"/><rect x="907" y="91.8" width="3" height="2.6" fill="#404040"/><rect x="1012" y="91.8" width="3" height="2.6" fill="#404040"/><rect x="1017" y="91.8" width="3" height="2.6" fill="#404040"/><rect x="1022" y="91.8" width="3" height="2.6" fill="#404040"/><rect x="1027" y="91.8" width="3" height="2.6" fill="#404040"/><rect x="1032" y="91.8" width="3" height="2.6" fill="#404040"/><rect x="1037" y="91.8" width="3" height="2.6" fill="#404040"/><rect x="1042" y="91.8" width="3" height="2.6" fill="#404040"/><rect x="1047" y="91.8" width="3" height="2.6" fill="#404040"/><rect x="1052" y="91.8" width="3" height="2.6" fill="#404040"/><rect x="1057" y="91.8" width="3" height="2.6" fill="#404040"/><rect x="1062" y="91.8" width="3" height="2.6" fill="#404040"/><rect x="1067" y="91.8" width="3" height="2.6" fill="#404040"/><rect x="1072" y="91.8" width="3" height="2.6" fill="#404040"/><rect x="1077" y="91.8" width="3" height="2.6" fill="#404040"/><rect x="1082" y="91.8" width="3" height="2.6" fill="#404040"/><rect x="1087" y="91.8" width="3" height="2.6" fill="#404040"/><rect x="1092" y="91.8" width="3" height="2.6" fill="#404040"/><rect x="1097" y="91.8" width="3" height="2.6" fill="#404040"/><rect x="1102" y="91.8" width="3" height="2.6" fill="#404040"/><rect x="1107" y="91.8" width="3" height="2.6" fill="#404040"/><rect x="1112" y="91.8" width="3" height="2.6" fill="#404040"/><rect x="1117" y="91.8" width="3" height="2.6" fill="#404040"/><rect x="1122" y="91.8" width="3" height="2.6" fill="#404040"/><rect x="1127" y="91.8" width="3" height="2.6" fill="#404040"/><rect x="1132" y="91.8" width="3" height="2.6" fill="#404040"/><rect x="1137" y="91.8" width="3" height="2.6" fill="#404040"/><rect x="1142" y="91.8" width="3" height="2.6" fill="#404040"/><rect x="1147" y="91.8" width="3" height="2.6" fill="#404040"/><rect x="1152" y="91.8" width="3" height="2.6" fill="#404040"/><rect x="1157" y="91.8" width="3" height="2.6" fill="#404040"/><rect x="1162" y="91.8" width="3" height="2.6" fill="#404040"/><rect x="1167" y="91.8" width="3" height="2.6" fill="#404040"/><rect x="1172" y="91.8" width="3" height="2.6" fill="#404040"/><rect x="1177" y="91.8" width="3" height="2.6" fill="#404040"/><rect x="1182" y="91.8" width="3" height="2.6" fill="#404040"/><rect x="1187" y="91.8" width="3" height="2.6" fill="#404040"/><rect x="1192" y="91.8" width="3" height="2.6" fill="#404040"/><rect x="1197" y="91.8" width="3" height="2.6" fill="#404040"/><rect x="1202" y="91.8" width="3" height="2.6" fill="#404040"/><rect x="1207" y="91.8" width="3" height="2.6" fill="#404040"/><rect x="1212" y="91.8" width="3" height="2.6" fill="#404040"/><rect x="1217" y="91.8" width="3" height="2.6" fill="#404040"/><rect x="1222" y="91.8" width="3" height="2.6" fill="#404040"/><rect x="1227" y="91.8" width="3" height="2.6" fill="#404040"/><rect x="692" y="110.8" width="3" height="2.6" fill="#404040"/><rect x="697" y="110.8" width="3" height="2.6" fill="#404040"/><rect x="702" y="110.8" width="3" height="2.6" fill="#404040"/><rect x="707" y="110.8" width="3" height="2.6" fill="#404040"/><rect x="712" y="110.8" width="3" height="2.6" fill="#404040"/><rect x="717" y="110.8" width="3" height="2.6" fill="#404040"/><rect x="722" y="110.8" width="3" height="2.6" fill="#404040"/><rect x="727" y="110.8" width="3" height="2.6" fill="#404040"/><rect x="732" y="110.8" width="3" height="2.6" fill="#404040"/><rect x="737" y="110.8" width="3" height="2.6" fill="#404040"/><rect x="742" y="110.8" width="3" height="2.6" fill="#404040"/><rect x="747" y="110.8" width="3" height="2.6" fill="#404040"/><rect x="752" y="110.8" width="3" height="2.6" fill="#404040"/><rect x="757" y="110.8" width="3" height="2.6" fill="#404040"/><rect x="762" y="110.8" width="3" height="2.6" fill="#404040"/><rect x="767" y="110.8" width="3" height="2.6" fill="#404040"/><rect x="772" y="110.8" width="3" height="2.6" fill="#404040"/><rect x="777" y="110.8" width="3" height="2.6" fill="#404040"/><rect x="782" y="110.8" width="3" height="2.6" fill="#404040"/><rect x="787" y="110.8" width="3" height="2.6" fill="#404040"/><rect x="792" y="110.8" width="3" height="2.6" fill="#404040"/><rect x="797" y="110.8" width="3" height="2.6" fill="#404040"/><rect x="802" y="110.8" width="3" height="2.6" fill="#404040"/><rect x="807" y="110.8" width="3" height="2.6" fill="#404040"/><rect x="812" y="110.8" width="3" height="2.6" fill="#404040"/><rect x="817" y="110.8" width="3" height="2.6" fill="#404040"/><rect x="822" y="110.8" width="3" height="2.6" fill="#404040"/><rect x="827" y="110.8" width="3" height="2.6" fill="#404040"/><rect x="832" y="110.8" width="3" height="2.6" fill="#404040"/><rect x="837" y="110.8" width="3" height="2.6" fill="#404040"/><rect x="842" y="110.8" width="3" height="2.6" fill="#404040"/><rect x="847" y="110.8" width="3" height="2.6" fill="#404040"/><rect x="852" y="110.8" width="3" height="2.6" fill="#404040"/><rect x="857" y="110.8" width="3" height="2.6" fill="#404040"/><rect x="862" y="110.8" width="3" height="2.6" fill="#404040"/><rect x="867" y="110.8" width="3" height="2.6" fill="#404040"/><rect x="872" y="110.8" width="3" height="2.6" fill="#404040"/><rect x="877" y="110.8" width="3" height="2.6" fill="#404040"/><rect x="882" y="110.8" width="3" height="2.6" fill="#404040"/><rect x="887" y="110.8" width="3" height="2.6" fill="#404040"/><rect x="892" y="110.8" width="3" height="2.6" fill="#404040"/><rect x="897" y="110.8" width="3" height="2.6" fill="#404040"/><rect x="907" y="110.8" width="3" height="2.6" fill="#77ca9b"/><rect x="1012" y="110.8" width="3" height="2.6" fill="#404040"/><rect x="1017" y="110.8" width="3" height="2.6" fill="#404040"/><rect x="1022" y="110.8" width="3" height="2.6" fill="#404040"/><rect x="1027" y="110.8" width="3" height="2.6" fill="#404040"/><rect x="1032" y="110.8" width="3" height="2.6" fill="#404040"/><rect x="1037" y="110.8" width="3" height="2.6" fill="#404040"/><rect x="1042" y="110.8" width="3" height="2.6" fill="#404040"/><rect x="1047" y="110.8" width="3" height="2.6" fill="#404040"/><rect x="1052" y="110.8" width="3" height="2.6" fill="#404040"/><rect x="1057" y="110.8" width="3" height="2.6" fill="#404040"/><rect x="1062" y="110.8" width="3" height="2.6" fill="#404040"/><rect x="1067" y="110.8" width="3" height="2.6" fill="#404040"/><rect x="1072" y="110.8" width="3" height="2.6" fill="#404040"/><rect x="1077" y="110.8" width="3" height="2.6" fill="#404040"/><rect x="1082" y="110.8" width="3" height="2.6" fill="#404040"/><rect x="1087" y="110.8" width="3" height="2.6" fill="#404040"/><rect x="1092" y="110.8" width="3" height="2.6" fill="#404040"/><rect x="1097" y="110.8" width="3" height="2.6" fill="#404040"/><rect x="1102" y="110.8" width="3" height="2.6" fill="#404040"/><rect x="1107" y="110.8" width="3" height="2.6" fill="#404040"/><rect x="1112" y="110.8" width="3" height="2.6" fill="#404040"/><rect x="1117" y="110.8" width="3" height="2.6" fill="#404040"/><rect x="1122" y="110.8" width="3" height="2.6" fill="#404040"/><rect x="1127" y="110.8" width="3" height="2.6" fill="#404040"/><rect x="1132" y="110.8" width="3" height="2.6" fill="#404040"/><rect x="1137" y="110.8" width="3" height="2.6" fill="#404040"/><rect x="1142" y="110.8" width="3" height="2.6" fill="#404040"/><rect x="1147" y="110.8" width="3" height="2.6" fill="#404040"/><rect x="1152" y="110.8" width="3" height="2.6" fill="#404040"/><rect x="1157" y="110.8" width="3" height="2.6" fill="#404040"/><rect x="1162" y="110.8" width="3" height="2.6" fill="#404040"/><rect x="1167" y="110.8" width="3" height="2.6" fill="#404040"/><rect x="1172" y="110.8" width="3" height="2.6" fill="#404040"/><rect x="1177" y="110.8" width="3" height="2.6" fill="#404040"/><rect x="1182" y="110.8" width="3" height="2.6" fill="#404040"/><rect x="1187" y="110.8" width="3" height="2.6" fill="#404040"/><rect x="1192" y="110.8" width="3" height="2.6" fill="#404040"/><rect x="1197" y="110.8" width="3" height="2.6" fill="#404040"/><rect x="1202" y="110.8" width="3" height="2.6" fill="#404040"/><rect x="1207" y="110.8" width="3" height="2.6" fill="#404040"/><rect x="1212" y="110.8" width="3" height="2.6" fill="#404040"/><rect x="1217" y="110.8" width="3" height="2.6" fill="#404040"/><rect x="1222" y="110.8" width="3" height="2.6" fill="#404040"/><rect x="1227" y="110.8" width="3" height="2.6" fill="#404040"/><rect x="692" y="129.8" width="3" height="2.6" fill="#404040"/><rect x="697" y="129.8" width="3" height="2.6" fill="#404040"/><rect x="702" y="129.8" width="3" height="2.6" fill="#404040"/><rect x="707" y="129.8" width="3" height="2.6" fill="#404040"/><rect x="712" y="129.8" width="3" height="2.6" fill="#404040"/><rect x="717" y="129.8" width="3" height="2.6" fill="#404040"/><rect x="722" y="129.8" width="3" height="2.6" fill="#404040"/><rect x="727" y="129.8" width="3" height="2.6" fill="#404040"/><rect x="732" y="129.8" width="3" height="2.6" fill="#404040"/><rect x="737" y="129.8" width="3" height="2.6" fill="#404040"/><rect x="742" y="129.8" width="3" height="2.6" fill="#404040"/><rect x="747" y="129.8" width="3" height="2.6" fill="#404040"/><rect x="752" y="129.8" width="3" height="2.6" fill="#404040"/><rect x="757" y="129.8" width="3" height="2.6" fill="#404040"/><rect x="762" y="129.8" width="3" height="2.6" fill="#404040"/><rect x="767" y="129.8" width="3" height="2.6" fill="#404040"/><rect x="772" y="129.8" width="3" height="2.6" fill="#404040"/><rect x="777" y="129.8" width="3" height="2.6" fill="#404040"/><rect x="782" y="129.8" width="3" height="2.6" fill="#404040"/><rect x="787" y="129.8" width="3" height="2.6" fill="#404040"/><rect x="792" y="129.8" width="3" height="2.6" fill="#404040"/><rect x="797" y="129.8" width="3" height="2.6" fill="#404040"/><rect x="802" y="129.8" width="3" height="2.6" fill="#404040"/><rect x="807" y="129.8" width="3" height="2.6" fill="#404040"/><rect x="812" y="129.8" width="3" height="2.6" fill="#404040"/><rect x="817" y="129.8" width="3" height="2.6" fill="#404040"/><rect x="822" y="129.8" width="3" height="2.6" fill="#404040"/><rect x="827" y="129.8" width="3" height="2.6" fill="#404040"/><rect x="832" y="129.8" width="3" height="2.6" fill="#404040"/><rect x="837" y="129.8" width="3" height="2.6" fill="#404040"/><rect x="842" y="129.8" width="3" height="2.6" fill="#404040"/><rect x="847" y="129.8" width="3" height="2.6" fill="#404040"/><rect x="852" y="129.8" width="3" height="2.6" fill="#404040"/><rect x="857" y="129.8" width="3" height="2.6" fill="#404040"/><rect x="862" y="129.8" width="3" height="2.6" fill="#404040"/><rect x="867" y="129.8" width="3" height="2.6" fill="#404040"/><rect x="872" y="129.8" width="3" height="2.6" fill="#404040"/><rect x="877" y="129.8" width="3" height="2.6" fill="#404040"/><rect x="882" y="129.8" width="3" height="2.6" fill="#404040"/><rect x="887" y="129.8" width="3" height="2.6" fill="#404040"/><rect x="892" y="129.8" width="3" height="2.6" fill="#404040"/><rect x="897" y="129.8" width="3" height="2.6" fill="#404040"/><rect x="902" y="129.8" width="3" height="2.6" fill="#404040"/><rect x="907" y="129.8" width="3" height="2.6" fill="#404040"/><rect x="1012" y="129.8" width="3" height="2.6" fill="#404040"/><rect x="1017" y="129.8" width="3" height="2.6" fill="#404040"/><rect x="1022" y="129.8" width="3" height="2.6" fill="#404040"/><rect x="1027" y="129.8" width="3" height="2.6" fill="#404040"/><rect x="1032" y="129.8" width="3" height="2.6" fill="#404040"/><rect x="1037" y="129.8" width="3" height="2.6" fill="#404040"/><rect x="1042" y="129.8" width="3" height="2.6" fill="#404040"/><rect x="1047" y="129.8" width="3" height="2.6" fill="#404040"/><rect x="1052" y="129.8" width="3" height="2.6" fill="#404040"/><rect x="1057" y="129.8" width="3" height="2.6" fill="#404040"/><rect x="1062" y="129.8" width="3" height="2.6" fill="#404040"/><rect x="1067" y="129.8" width="3" height="2.6" fill="#404040"/><rect x="1072" y="129.8" width="3" height="2.6" fill="#404040"/><rect x="1077" y="129.8" width="3" height="2.6" fill="#404040"/><rect x="1082" y="129.8" width="3" height="2.6" fill="#404040"/><rect x="1087" y="129.8" width="3" height="2.6" fill="#404040"/><rect x="1092" y="129.8" width="3" height="2.6" fill="#404040"/><rect x="1097" y="129.8" width="3" height="2.6" fill="#404040"/><rect x="1102" y="129.8" width="3" height="2.6" fill="#404040"/><rect x="1107" y="129.8" width="3" height="2.6" fill="#404040"/><rect x="1112" y="129.8" width="3" height="2.6" fill="#404040"/><rect x="1117" y="129.8" width="3" height="2.6" fill="#404040"/><rect x="1122" y="129.8" width="3" height="2.6" fill="#404040"/><rect x="1127" y="129.8" width="3" height="2.6" fill="#404040"/><rect x="1132" y="129.8" width="3" height="2.6" fill="#404040"/><rect x="1137" y="129.8" width="3" height="2.6" fill="#404040"/><rect x="1142" y="129.8" width="3" height="2.6" fill="#404040"/><rect x="1147" y="129.8" width="3" height="2.6" fill="#404040"/><rect x="1152" y="129.8" width="3" height="2.6" fill="#404040"/><rect x="1157" y="129.8" width="3" height="2.6" fill="#404040"/><rect x="1162" y="129.8" width="3" height="2.6" fill="#404040"/><rect x="1167" y="129.8" width="3" height="2.6" fill="#404040"/><rect x="1172" y="129.8" width="3" height="2.6" fill="#404040"/><rect x="1177" y="129.8" width="3" height="2.6" fill="#404040"/><rect x="1182" y="129.8" width="3" height="2.6" fill="#404040"/><rect x="1187" y="129.8" width="3" height="2.6" fill="#404040"/><rect x="1192" y="129.8" width="3" height="2.6" fill="#404040"/><rect x="1197" y="129.8" width="3" height="2.6" fill="#404040"/><rect x="1202" y="129.8" width="3" height="2.6" fill="#404040"/><rect x="1207" y="129.8" width="3" height="2.6" fill="#404040"/><rect x="1212" y="129.8" width="3" height="2.6" fill="#404040"/><rect x="1217" y="129.8" width="3" height="2.6" fill="#404040"/><rect x="1222" y="129.8" width="3" height="2.6" fill="#404040"/><rect x="1227" y="129.8" width="3" height="2.6" fill="#404040"/><rect x="692" y="148.8" width="3" height="2.6" fill="#404040"/><rect x="697" y="148.8" width="3" height="2.6" fill="#404040"/><rect x="702" y="148.8" width="3" height="2.6" fill="#404040"/><rect x="707" y="148.8" width="3" height="2.6" fill="#404040"/><rect x="712" y="148.8" width="3" height="2.6" fill="#404040"/><rect x="717" y="148.8" width="3" height="2.6" fill="#404040"/><rect x="722" y="148.8" width="3" height="2.6" fill="#404040"/><rect x="727" y="148.8" width="3" height="2.6" fill="#404040"/><rect x="732" y="148.8" width="3" height="2.6" fill="#404040"/><rect x="737" y="148.8" width="3" height="2.6" fill="#404040"/><rect x="742" y="148.8" width="3" height="2.6" fill="#404040"/><rect x="747" y="148.8" width="3" height="2.6" fill="#404040"/><rect x="752" y="148.8" width="3" height="2.6" fill="#404040"/><rect x="757" y="148.8" width="3" height="2.6" fill="#404040"/><rect x="762" y="148.8" width="3" height="2.6" fill="#404040"/><rect x="767" y="148.8" width="3" height="2.6" fill="#404040"/><rect x="772" y="148.8" width="3" height="2.6" fill="#404040"/><rect x="777" y="148.8" width="3" height="2.6" fill="#404040"/><rect x="782" y="148.8" width="3" height="2.6" fill="#404040"/><rect x="787" y="148.8" width="3" height="2.6" fill="#404040"/><rect x="792" y="148.8" width="3" height="2.6" fill="#404040"/><rect x="797" y="148.8" width="3" height="2.6" fill="#404040"/><rect x="802" y="148.8" width="3" height="2.6" fill="#404040"/><rect x="807" y="148.8" width="3" height="2.6" fill="#404040"/><rect x="812" y="148.8" width="3" height="2.6" fill="#404040"/><rect x="817" y="148.8" width="3" height="2.6" fill="#404040"/><rect x="822" y="148.8" width="3" height="2.6" fill="#404040"/><rect x="827" y="148.8" width="3" height="2.6" fill="#404040"/><rect x="832" y="148.8" width="3" height="2.6" fill="#404040"/><rect x="837" y="148.8" width="3" height="2.6" fill="#404040"/><rect x="842" y="148.8" width="3" height="2.6" fill="#404040"/><rect x="847" y="148.8" width="3" height="2.6" fill="#404040"/><rect x="852" y="148.8" width="3" height="2.6" fill="#404040"/><rect x="857" y="148.8" width="3" height="2.6" fill="#404040"/><rect x="862" y="148.8" width="3" height="2.6" fill="#404040"/><rect x="867" y="148.8" width="3" height="2.6" fill="#404040"/><rect x="872" y="148.8" width="3" height="2.6" fill="#404040"/><rect x="877" y="148.8" width="3" height="2.6" fill="#404040"/><rect x="882" y="148.8" width="3" height="2.6" fill="#404040"/><rect x="887" y="148.8" width="3" height="2.6" fill="#404040"/><rect x="892" y="148.8" width="3" height="2.6" fill="#77ca9b"/><rect x="902" y="148.8" width="3" height="2.6" fill="#404040"/><rect x="907" y="148.8" width="3" height="2.6" fill="#404040"/><rect x="1012" y="148.8" width="3" height="2.6" fill="#404040"/><rect x="1017" y="148.8" width="3" height="2.6" fill="#404040"/><rect x="1022" y="148.8" width="3" height="2.6" fill="#404040"/><rect x="1027" y="148.8" width="3" height="2.6" fill="#404040"/><rect x="1032" y="148.8" width="3" height="2.6" fill="#404040"/><rect x="1037" y="148.8" width="3" height="2.6" fill="#404040"/><rect x="1042" y="148.8" width="3" height="2.6" fill="#404040"/><rect x="1047" y="148.8" width="3" height="2.6" fill="#404040"/><rect x="1052" y="148.8" width="3" height="2.6" fill="#404040"/><rect x="1057" y="148.8" width="3" height="2.6" fill="#404040"/><rect x="1062" y="148.8" width="3" height="2.6" fill="#404040"/><rect x="1067" y="148.8" width="3" height="2.6" fill="#404040"/><rect x="1072" y="148.8" width="3" height="2.6" fill="#404040"/><rect x="1077" y="148.8" width="3" height="2.6" fill="#404040"/><rect x="1082" y="148.8" width="3" height="2.6" fill="#404040"/><rect x="1087" y="148.8" width="3" height="2.6" fill="#404040"/><rect x="1092" y="148.8" width="3" height="2.6" fill="#404040"/><rect x="1097" y="148.8" width="3" height="2.6" fill="#404040"/><rect x="1102" y="148.8" width="3" height="2.6" fill="#404040"/><rect x="1107" y="148.8" width="3" height="2.6" fill="#404040"/><rect x="1112" y="148.8" width="3" height="2.6" fill="#404040"/><rect x="1117" y="148.8" width="3" height="2.6" fill="#404040"/><rect x="1122" y="148.8" width="3" height="2.6" fill="#404040"/><rect x="1127" y="148.8" width="3" height="2.6" fill="#404040"/><rect x="1132" y="148.8" width="3" height="2.6" fill="#404040"/><rect x="1137" y="148.8" width="3" height="2.6" fill="#404040"/><rect x="1142" y="148.8" width="3" height="2.6" fill="#404040"/><rect x="1147" y="148.8" width="3" height="2.6" fill="#404040"/><rect x="1152" y="148.8" width="3" height="2.6" fill="#404040"/><rect x="1157" y="148.8" width="3" height="2.6" fill="#404040"/><rect x="1162" y="148.8" width="3" height="2.6" fill="#404040"/><rect x="1167" y="148.8" width="3" height="2.6" fill="#404040"/><rect x="1172" y="148.8" width="3" height="2.6" fill="#404040"/><rect x="1177" y="148.8" width="3" height="2.6" fill="#404040"/><rect x="1182" y="148.8" width="3" height="2.6" fill="#404040"/><rect x="1187" y="148.8" width="3" height="2.6" fill="#404040"/><rect x="1192" y="148.8" width="3" height="2.6" fill="#404040"/><rect x="1197" y="148.8" width="3" height="2.6" fill="#404040"/><rect x="1202" y="148.8" width="3" height="2.6" fill="#404040"/><rect x="1207" y="148.8" width="3" height="2.6" fill="#404040"/><rect x="1212" y="148.8" width="3" height="2.6" fill="#404040"/><rect x="1217" y="148.8" width="3" height="2.6" fill="#404040"/><rect x="1222" y="148.8" width="3" height="2.6" fill="#404040"/><rect x="1227" y="148.8" width="3" height="2.6" fill="#404040"/><rect x="692" y="167.8" width="3" height="2.6" fill="#404040"/><rect x="697" y="167.8" width="3" height="2.6" fill="#404040"/><rect x="702" y="167.8" width="3" height="2.6" fill="#404040"/><rect x="707" y="167.8" width="3" height="2.6" fill="#404040"/><rect x="712" y="167.8" width="3" height="2.6" fill="#404040"/><rect x="717" y="167.8" width="3" height="2.6" fill="#404040"/><rect x="722" y="167.8" width="3" height="2.6" fill="#404040"/><rect x="727" y="167.8" width="3" height="2.6" fill="#404040"/><rect x="732" y="167.8" width="3" height="2.6" fill="#404040"/><rect x="737" y="167.8" width="3" height="2.6" fill="#404040"/><rect x="742" y="167.8" width="3" height="2.6" fill="#404040"/><rect x="747" y="167.8" width="3" height="2.6" fill="#404040"/><rect x="752" y="167.8" width="3" height="2.6" fill="#404040"/><rect x="757" y="167.8" width="3" height="2.6" fill="#404040"/><rect x="762" y="167.8" width="3" height="2.6" fill="#404040"/><rect x="767" y="167.8" width="3" height="2.6" fill="#404040"/><rect x="772" y="167.8" width="3" height="2.6" fill="#404040"/><rect x="777" y="167.8" width="3" height="2.6" fill="#404040"/><rect x="782" y="167.8" width="3" height="2.6" fill="#404040"/><rect x="787" y="167.8" width="3" height="2.6" fill="#404040"/><rect x="792" y="167.8" width="3" height="2.6" fill="#404040"/><rect x="797" y="167.8" width="3" height="2.6" fill="#404040"/><rect x="802" y="167.8" width="3" height="2.6" fill="#404040"/><rect x="807" y="167.8" width="3" height="2.6" fill="#404040"/><rect x="812" y="167.8" width="3" height="2.6" fill="#404040"/><rect x="817" y="167.8" width="3" height="2.6" fill="#404040"/><rect x="822" y="167.8" width="3" height="2.6" fill="#404040"/><rect x="827" y="167.8" width="3" height="2.6" fill="#404040"/><rect x="832" y="167.8" width="3" height="2.6" fill="#404040"/><rect x="837" y="167.8" width="3" height="2.6" fill="#404040"/><rect x="842" y="167.8" width="3" height="2.6" fill="#404040"/><rect x="847" y="167.8" width="3" height="2.6" fill="#404040"/><rect x="852" y="167.8" width="3" height="2.6" fill="#404040"/><rect x="857" y="167.8" width="3" height="2.6" fill="#404040"/><rect x="862" y="167.8" width="3" height="2.6" fill="#404040"/><rect x="867" y="167.8" width="3" height="2.6" fill="#404040"/><rect x="872" y="167.8" width="3" height="2.6" fill="#404040"/><rect x="877" y="167.8" width="3" height="2.6" fill="#404040"/><rect x="882" y="167.8" width="3" height="2.6" fill="#404040"/><rect x="887" y="167.8" width="3" height="2.6" fill="#404040"/><rect x="892" y="167.8" width="3" height="2.6" fill="#77ca9b"/><rect x="907" y="167.8" width="3" height="2.6" fill="#77ca9b"/><rect x="1012" y="167.8" width="3" height="2.6" fill="#404040"/><rect x="1017" y="167.8" width="3" height="2.6" fill="#404040"/><rect x="1022" y="167.8" width="3" height="2.6" fill="#404040"/><rect x="1027" y="167.8" width="3" height="2.6" fill="#404040"/><rect x="1032" y="167.8" width="3" height="2.6" fill="#404040"/><rect x="1037" y="167.8" width="3" height="2.6" fill="#404040"/><rect x="1042" y="167.8" width="3" height="2.6" fill="#404040"/><rect x="1047" y="167.8" width="3" height="2.6" fill="#404040"/><rect x="1052" y="167.8" width="3" height="2.6" fill="#404040"/><rect x="1057" y="167.8" width="3" height="2.6" fill="#404040"/><rect x="1062" y="167.8" width="3" height="2.6" fill="#404040"/><rect x="1067" y="167.8" width="3" height="2.6" fill="#404040"/><rect x="1072" y="167.8" width="3" height="2.6" fill="#404040"/><rect x="1077" y="167.8" width="3" height="2.6" fill="#404040"/><rect x="1082" y="167.8" width="3" height="2.6" fill="#404040"/><rect x="1087" y="167.8" width="3" height="2.6" fill="#404040"/><rect x="1092" y="167.8" width="3" height="2.6" fill="#404040"/><rect x="1097" y="167.8" width="3" height="2.6" fill="#404040"/><rect x="1102" y="167.8" width="3" height="2.6" fill="#404040"/><rect x="1107" y="167.8" width="3" height="2.6" fill="#404040"/><rect x="1112" y="167.8" width="3" height="2.6" fill="#404040"/><rect x="1117" y="167.8" width="3" height="2.6" fill="#404040"/><rect x="1122" y="167.8" width="3" height="2.6" fill="#404040"/><rect x="1127" y="167.8" width="3" height="2.6" fill="#404040"/><rect x="1132" y="167.8" width="3" height="2.6" fill="#404040"/><rect x="1137" y="167.8" width="3" height="2.6" fill="#404040"/><rect x="1142" y="167.8" width="3" height="2.6" fill="#404040"/><rect x="1147" y="167.8" width="3" height="2.6" fill="#404040"/><rect x="1152" y="167.8" width="3" height="2.6" fill="#404040"/><rect x="1157" y="167.8" width="3" height="2.6" fill="#404040"/><rect x="1162" y="167.8" width="3" height="2.6" fill="#404040"/><rect x="1167" y="167.8" width="3" height="2.6" fill="#404040"/><rect x="1172" y="167.8" width="3" height="2.6" fill="#404040"/><rect x="1177" y="167.8" width="3" height="2.6" fill="#404040"/><rect x="1182" y="167.8" width="3" height="2.6" fill="#404040"/><rect x="1187" y="167.8" width="3" height="2.6" fill="#404040"/><rect x="1192" y="167.8" width="3" height="2.6" fill="#404040"/><rect x="1197" y="167.8" width="3" height="2.6" fill="#404040"/><rect x="1202" y="167.8" width="3" height="2.6" fill="#404040"/><rect x="1207" y="167.8" width="3" height="2.6" fill="#404040"/><rect x="1212" y="167.8" width="3" height="2.6" fill="#404040"/><rect x="1217" y="167.8" width="3" height="2.6" fill="#404040"/><rect x="1222" y="167.8" width="3" height="2.6" fill="#404040"/><rect x="1227" y="167.8" width="3" height="2.6" fill="#404040"/><rect x="692" y="186.8" width="3" height="2.6" fill="#404040"/><rect x="697" y="186.8" width="3" height="2.6" fill="#404040"/><rect x="702" y="186.8" width="3" height="2.6" fill="#404040"/><rect x="707" y="186.8" width="3" height="2.6" fill="#404040"/><rect x="712" y="186.8" width="3" height="2.6" fill="#404040"/><rect x="717" y="186.8" width="3" height="2.6" fill="#404040"/><rect x="722" y="186.8" width="3" height="2.6" fill="#404040"/><rect x="727" y="186.8" width="3" height="2.6" fill="#404040"/><rect x="732" y="186.8" width="3" height="2.6" fill="#404040"/><rect x="737" y="186.8" width="3" height="2.6" fill="#404040"/><rect x="742" y="186.8" width="3" height="2.6" fill="#404040"/><rect x="747" y="186.8" width="3" height="2.6" fill="#404040"/><rect x="752" y="186.8" width="3" height="2.6" fill="#404040"/><rect x="757" y="186.8" width="3" height="2.6" fill="#404040"/><rect x="762" y="186.8" width="3" height="2.6" fill="#404040"/><rect x="767" y="186.8" width="3" height="2.6" fill="#404040"/><rect x="772" y="186.8" width="3" height="2.6" fill="#404040"/><rect x="777" y="186.8" width="3" height="2.6" fill="#404040"/><rect x="782" y="186.8" width="3" height="2.6" fill="#404040"/><rect x="787" y="186.8" width="3" height="2.6" fill="#404040"/><rect x="792" y="186.8" width="3" height="2.6" fill="#404040"/><rect x="797" y="186.8" width="3" height="2.6" fill="#404040"/><rect x="802" y="186.8" width="3" height="2.6" fill="#404040"/><rect x="807" y="186.8" width="3" height="2.6" fill="#404040"/><rect x="812" y="186.8" width="3" height="2.6" fill="#404040"/><rect x="817" y="186.8" width="3" height="2.6" fill="#404040"/><rect x="822" y="186.8" width="3" height="2.6" fill="#404040"/><rect x="827" y="186.8" width="3" height="2.6" fill="#404040"/><rect x="832" y="186.8" width="3" height="2.6" fill="#404040"/><rect x="837" y="186.8" width="3" height="2.6" fill="#404040"/><rect x="842" y="186.8" width="3" height="2.6" fill="#404040"/><rect x="847" y="186.8" width="3" height="2.6" fill="#404040"/><rect x="852" y="186.8" width="3" height="2.6" fill="#404040"/><rect x="857" y="186.8" width="3" height="2.6" fill="#404040"/><rect x="862" y="186.8" width="3" height="2.6" fill="#404040"/><rect x="867" y="186.8" width="3" height="2.6" fill="#404040"/><rect x="872" y="186.8" width="3" height="2.6" fill="#404040"/><rect x="877" y="186.8" width="3" height="2.6" fill="#404040"/><rect x="882" y="186.8" width="3" height="2.6" fill="#404040"/><rect x="887" y="186.8" width="3" height="2.6" fill="#404040"/><rect x="892" y="186.8" width="3" height="2.6" fill="#77ca9b"/><rect x="902" y="186.8" width="3" height="2.6" fill="#404040"/><rect x="907" y="186.8" width="3" height="2.6" fill="#404040"/><rect x="1012" y="186.8" width="3" height="2.6" fill="#404040"/><rect x="1017" y="186.8" width="3" height="2.6" fill="#404040"/><rect x="1022" y="186.8" width="3" height="2.6" fill="#404040"/><rect x="1027" y="186.8" width="3" height="2.6" fill="#404040"/><rect x="1032" y="186.8" width="3" height="2.6" fill="#404040"/><rect x="1037" y="186.8" width="3" height="2.6" fill="#404040"/><rect x="1042" y="186.8" width="3" height="2.6" fill="#404040"/><rect x="1047" y="186.8" width="3" height="2.6" fill="#404040"/><rect x="1052" y="186.8" width="3" height="2.6" fill="#404040"/><rect x="1057" y="186.8" width="3" height="2.6" fill="#404040"/><rect x="1062" y="186.8" width="3" height="2.6" fill="#404040"/><rect x="1067" y="186.8" width="3" height="2.6" fill="#404040"/><rect x="1072" y="186.8" width="3" height="2.6" fill="#404040"/><rect x="1077" y="186.8" width="3" height="2.6" fill="#404040"/><rect x="1082" y="186.8" width="3" height="2.6" fill="#404040"/><rect x="1087" y="186.8" width="3" height="2.6" fill="#404040"/><rect x="1092" y="186.8" width="3" height="2.6" fill="#404040"/><rect x="1097" y="186.8" width="3" height="2.6" fill="#404040"/><rect x="1102" y="186.8" width="3" height="2.6" fill="#404040"/><rect x="1107" y="186.8" width="3" height="2.6" fill="#404040"/><rect x="1112" y="186.8" width="3" height="2.6" fill="#404040"/><rect x="1117" y="186.8" width="3" height="2.6" fill="#404040"/><rect x="1122" y="186.8" width="3" height="2.6" fill="#404040"/><rect x="1127" y="186.8" width="3" height="2.6" fill="#404040"/><rect x="1132" y="186.8" width="3" height="2.6" fill="#404040"/><rect x="1137" y="186.8" width="3" height="2.6" fill="#404040"/><rect x="1142" y="186.8" width="3" height="2.6" fill="#404040"/><rect x="1147" y="186.8" width="3" height="2.6" fill="#404040"/><rect x="1152" y="186.8" width="3" height="2.6" fill="#404040"/><rect x="1157" y="186.8" width="3" height="2.6" fill="#404040"/><rect x="1162" y="186.8" width="3" height="2.6" fill="#404040"/><rect x="1167" y="186.8" width="3" height="2.6" fill="#404040"/><rect x="1172" y="186.8" width="3" height="2.6" fill="#404040"/><rect x="1177" y="186.8" width="3" height="2.6" fill="#404040"/><rect x="1182" y="186.8" width="3" height="2.6" fill="#404040"/><rect x="1187" y="186.8" width="3" height="2.6" fill="#404040"/><rect x="1192" y="186.8" width="3" height="2.6" fill="#404040"/><rect x="1197" y="186.8" width="3" height="2.6" fill="#404040"/><rect x="1202" y="186.8" width="3" height="2.6" fill="#404040"/><rect x="1207" y="186.8" width="3" height="2.6" fill="#404040"/><rect x="1212" y="186.8" width="3" height="2.6" fill="#404040"/><rect x="1217" y="186.8" width="3" height="2.6" fill="#404040"/><rect x="1222" y="186.8" width="3" height="2.6" fill="#404040"/><rect x="1227" y="186.8" width="3" height="2.6" fill="#404040"/><rect x="692" y="205.8" width="3" height="2.6" fill="#404040"/><rect x="697" y="205.8" width="3" height="2.6" fill="#404040"/><rect x="702" y="205.8" width="3" height="2.6" fill="#404040"/><rect x="707" y="205.8" width="3" height="2.6" fill="#404040"/><rect x="712" y="205.8" width="3" height="2.6" fill="#404040"/><rect x="717" y="205.8" width="3" height="2.6" fill="#404040"/><rect x="722" y="205.8" width="3" height="2.6" fill="#404040"/><rect x="727" y="205.8" width="3" height="2.6" fill="#404040"/><rect x="732" y="205.8" width="3" height="2.6" fill="#404040"/><rect x="737" y="205.8" width="3" height="2.6" fill="#404040"/><rect x="742" y="205.8" width="3" height="2.6" fill="#404040"/><rect x="747" y="205.8" width="3" height="2.6" fill="#404040"/><rect x="752" y="205.8" width="3" height="2.6" fill="#404040"/><rect x="757" y="205.8" width="3" height="2.6" fill="#404040"/><rect x="762" y="205.8" width="3" height="2.6" fill="#404040"/><rect x="767" y="205.8" width="3" height="2.6" fill="#404040"/><rect x="772" y="205.8" width="3" height="2.6" fill="#404040"/><rect x="777" y="205.8" width="3" height="2.6" fill="#404040"/><rect x="782" y="205.8" width="3" height="2.6" fill="#404040"/><rect x="787" y="205.8" width="3" height="2.6" fill="#404040"/><rect x="792" y="205.8" width="3" height="2.6" fill="#404040"/><rect x="797" y="205.8" width="3" height="2.6" fill="#404040"/><rect x="802" y="205.8" width="3" height="2.6" fill="#404040"/><rect x="807" y="205.8" width="3" height="2.6" fill="#404040"/><rect x="812" y="205.8" width="3" height="2.6" fill="#404040"/><rect x="817" y="205.8" width="3" height="2.6" fill="#404040"/><rect x="822" y="205.8" width="3" height="2.6" fill="#404040"/><rect x="827" y="205.8" width="3" height="2.6" fill="#404040"/><rect x="832" y="205.8" width="3" height="2.6" fill="#404040"/><rect x="837" y="205.8" width="3" height="2.6" fill="#404040"/><rect x="842" y="205.8" width="3" height="2.6" fill="#404040"/><rect x="847" y="205.8" width="3" height="2.6" fill="#404040"/><rect x="852" y="205.8" width="3" height="2.6" fill="#404040"/><rect x="857" y="205.8" width="3" height="2.6" fill="#404040"/><rect x="862" y="205.8" width="3" height="2.6" fill="#404040"/><rect x="867" y="205.8" width="3" height="2.6" fill="#404040"/><rect x="872" y="205.8" width="3" height="2.6" fill="#404040"/><rect x="877" y="205.8" width="3" height="2.6" fill="#404040"/><rect x="882" y="205.8" width="3" height="2.6" fill="#404040"/><rect x="887" y="205.8" width="3" height="2.6" fill="#404040"/><rect x="892" y="205.8" width="3" height="2.6" fill="#404040"/><rect x="897" y="205.8" width="3" height="2.6" fill="#404040"/><rect x="902" y="205.8" width="3" height="2.6" fill="#404040"/><rect x="907" y="205.8" width="3" height="2.6" fill="#404040"/><rect x="1012" y="205.8" width="3" height="2.6" fill="#404040"/><rect x="1017" y="205.8" width="3" height="2.6" fill="#404040"/><rect x="1022" y="205.8" width="3" height="2.6" fill="#404040"/><rect x="1027" y="205.8" width="3" height="2.6" fill="#404040"/><rect x="1032" y="205.8" width="3" height="2.6" fill="#404040"/><rect x="1037" y="205.8" width="3" height="2.6" fill="#404040"/><rect x="1042" y="205.8" width="3" height="2.6" fill="#404040"/><rect x="1047" y="205.8" width="3" height="2.6" fill="#404040"/><rect x="1052" y="205.8" width="3" height="2.6" fill="#404040"/><rect x="1057" y="205.8" width="3" height="2.6" fill="#404040"/><rect x="1062" y="205.8" width="3" height="2.6" fill="#404040"/><rect x="1067" y="205.8" width="3" height="2.6" fill="#404040"/><rect x="1072" y="205.8" width="3" height="2.6" fill="#404040"/><rect x="1077" y="205.8" width="3" height="2.6" fill="#404040"/><rect x="1082" y="205.8" width="3" height="2.6" fill="#404040"/><rect x="1087" y="205.8" width="3" height="2.6" fill="#404040"/><rect x="1092" y="205.8" width="3" height="2.6" fill="#404040"/><rect x="1097" y="205.8" width="3" height="2.6" fill="#404040"/><rect x="1102" y="205.8" width="3" height="2.6" fill="#404040"/><rect x="1107" y="205.8" width="3" height="2.6" fill="#404040"/><rect x="1112" y="205.8" width="3" height="2.6" fill="#404040"/><rect x="1117" y="205.8" width="3" height="2.6" fill="#404040"/><rect x="1122" y="205.8" width="3" height="2.6" fill="#404040"/><rect x="1127" y="205.8" width="3" height="2.6" fill="#404040"/><rect x="1132" y="205.8" width="3" height="2.6" fill="#404040"/><rect x="1137" y="205.8" width="3" height="2.6" fill="#404040"/><rect x="1142" y="205.8" width="3" height="2.6" fill="#404040"/><rect x="1147" y="205.8" width="3" height="2.6" fill="#404040"/><rect x="1152" y="205.8" width="3" height="2.6" fill="#404040"/><rect x="1157" y="205.8" width="3" height="2.6" fill="#404040"/><rect x="1162" y="205.8" width="3" height="2.6" fill="#404040"/><rect x="1167" y="205.8" width="3" height="2.6" fill="#404040"/><rect x="1172" y="205.8" width="3" height="2.6" fill="#404040"/><rect x="1177" y="205.8" width="3" height="2.6" fill="#404040"/><rect x="1182" y="205.8" width="3" height="2.6" fill="#404040"/><rect x="1187" y="205.8" width="3" height="2.6" fill="#404040"/><rect x="1192" y="205.8" width="3" height="2.6" fill="#404040"/><rect x="1197" y="205.8" width="3" height="2.6" fill="#404040"/><rect x="1202" y="205.8" width="3" height="2.6" fill="#404040"/><rect x="1207" y="205.8" width="3" height="2.6" fill="#404040"/><rect x="1212" y="205.8" width="3" height="2.6" fill="#404040"/><rect x="1217" y="205.8" width="3" height="2.6" fill="#404040"/><rect x="1222" y="205.8" width="3" height="2.6" fill="#404040"/><rect x="1227" y="205.8" width="3" height="2.6" fill="#404040"/><rect x="692" y="224.8" width="3" height="2.6" fill="#404040"/><rect x="697" y="224.8" width="3" height="2.6" fill="#404040"/><rect x="702" y="224.8" width="3" height="2.6" fill="#404040"/><rect x="707" y="224.8" width="3" height="2.6" fill="#404040"/><rect x="712" y="224.8" width="3" height="2.6" fill="#404040"/><rect x="717" y="224.8" width="3" height="2.6" fill="#404040"/><rect x="722" y="224.8" width="3" height="2.6" fill="#404040"/><rect x="727" y="224.8" width="3" height="2.6" fill="#404040"/><rect x="732" y="224.8" width="3" height="2.6" fill="#404040"/><rect x="737" y="224.8" width="3" height="2.6" fill="#404040"/><rect x="742" y="224.8" width="3" height="2.6" fill="#404040"/><rect x="747" y="224.8" width="3" height="2.6" fill="#404040"/><rect x="752" y="224.8" width="3" height="2.6" fill="#404040"/><rect x="757" y="224.8" width="3" height="2.6" fill="#404040"/><rect x="762" y="224.8" width="3" height="2.6" fill="#404040"/><rect x="767" y="224.8" width="3" height="2.6" fill="#404040"/><rect x="772" y="224.8" width="3" height="2.6" fill="#404040"/><rect x="777" y="224.8" width="3" height="2.6" fill="#404040"/><rect x="782" y="224.8" width="3" height="2.6" fill="#404040"/><rect x="787" y="224.8" width="3" height="2.6" fill="#404040"/><rect x="792" y="224.8" width="3" height="2.6" fill="#404040"/><rect x="797" y="224.8" width="3" height="2.6" fill="#404040"/><rect x="802" y="224.8" width="3" height="2.6" fill="#404040"/><rect x="807" y="224.8" width="3" height="2.6" fill="#404040"/><rect x="812" y="224.8" width="3" height="2.6" fill="#404040"/><rect x="817" y="224.8" width="3" height="2.6" fill="#404040"/><rect x="822" y="224.8" width="3" height="2.6" fill="#404040"/><rect x="827" y="224.8" width="3" height="2.6" fill="#404040"/><rect x="832" y="224.8" width="3" height="2.6" fill="#404040"/><rect x="837" y="224.8" width="3" height="2.6" fill="#404040"/><rect x="842" y="224.8" width="3" height="2.6" fill="#404040"/><rect x="847" y="224.8" width="3" height="2.6" fill="#404040"/><rect x="852" y="224.8" width="3" height="2.6" fill="#404040"/><rect x="857" y="224.8" width="3" height="2.6" fill="#404040"/><rect x="862" y="224.8" width="3" height="2.6" fill="#404040"/><rect x="867" y="224.8" width="3" height="2.6" fill="#404040"/><rect x="872" y="224.8" width="3" height="2.6" fill="#404040"/><rect x="877" y="224.8" width="3" height="2.6" fill="#404040"/><rect x="882" y="224.8" width="3" height="2.6" fill="#404040"/><rect x="887" y="224.8" width="3" height="2.6" fill="#404040"/><rect x="892" y="224.8" width="3" height="2.6" fill="#404040"/><rect x="897" y="224.8" width="3" height="2.6" fill="#404040"/><rect x="902" y="224.8" width="3" height="2.6" fill="#404040"/><rect x="907" y="224.8" width="3" height="2.6" fill="#404040"/><rect x="1012" y="224.8" width="3" height="2.6" fill="#404040"/><rect x="1017" y="224.8" width="3" height="2.6" fill="#404040"/><rect x="1022" y="224.8" width="3" height="2.6" fill="#404040"/><rect x="1027" y="224.8" width="3" height="2.6" fill="#404040"/><rect x="1032" y="224.8" width="3" height="2.6" fill="#404040"/><rect x="1037" y="224.8" width="3" height="2.6" fill="#404040"/><rect x="1042" y="224.8" width="3" height="2.6" fill="#404040"/><rect x="1047" y="224.8" width="3" height="2.6" fill="#404040"/><rect x="1052" y="224.8" width="3" height="2.6" fill="#404040"/><rect x="1057" y="224.8" width="3" height="2.6" fill="#404040"/><rect x="1062" y="224.8" width="3" height="2.6" fill="#404040"/><rect x="1067" y="224.8" width="3" height="2.6" fill="#404040"/><rect x="1072" y="224.8" width="3" height="2.6" fill="#404040"/><rect x="1077" y="224.8" width="3" height="2.6" fill="#404040"/><rect x="1082" y="224.8" width="3" height="2.6" fill="#404040"/><rect x="1087" y="224.8" width="3" height="2.6" fill="#404040"/><rect x="1092" y="224.8" width="3" height="2.6" fill="#404040"/><rect x="1097" y="224.8" width="3" height="2.6" fill="#404040"/><rect x="1102" y="224.8" width="3" height="2.6" fill="#404040"/><rect x="1107" y="224.8" width="3" height="2.6" fill="#404040"/><rect x="1112" y="224.8" width="3" height="2.6" fill="#404040"/><rect x="1117" y="224.8" width="3" height="2.6" fill="#404040"/><rect x="1122" y="224.8" width="3" height="2.6" fill="#404040"/><rect x="1127" y="224.8" width="3" height="2.6" fill="#404040"/><rect x="1132" y="224.8" width="3" height="2.6" fill="#404040"/><rect x="1137" y="224.8" width="3" height="2.6" fill="#404040"/><rect x="1142" y="224.8" width="3" height="2.6" fill="#404040"/><rect x="1147" y="224.8" width="3" height="2.6" fill="#404040"/><rect x="1152" y="224.8" width="3" height="2.6" fill="#404040"/><rect x="1157" y="224.8" width="3" height="2.6" fill="#404040"/><rect x="1162" y="224.8" width="3" height="2.6" fill="#404040"/><rect x="1167" y="224.8" width="3" height="2.6" fill="#404040"/><rect x="1172" y="224.8" width="3" height="2.6" fill="#404040"/><rect x="1177" y="224.8" width="3" height="2.6" fill="#404040"/><rect x="1182" y="224.8" width="3" height="2.6" fill="#404040"/><rect x="1187" y="224.8" width="3" height="2.6" fill="#404040"/><rect x="1192" y="224.8" width="3" height="2.6" fill="#404040"/><rect x="1197" y="224.8" width="3" height="2.6" fill="#404040"/><rect x="1202" y="224.8" width="3" height="2.6" fill="#404040"/><rect x="1207" y="224.8" width="3" height="2.6" fill="#404040"/><rect x="1212" y="224.8" width="3" height="2.6" fill="#404040"/><rect x="1217" y="224.8" width="3" height="2.6" fill="#404040"/><rect x="1222" y="224.8" width="3" height="2.6" fill="#404040"/><rect x="1227" y="224.8" width="3" height="2.6" fill="#404040"/><path shape-rendering="geometricPrecision" d="M5 323L5 316.5A3.5 3.5 0 0 1 8.5 313L10 313" fill="none" stroke="#6c6c4b" stroke-width="2"/><rect x="10" y="312" width="10" height="2" fill="#6c6c4b"/><rect x="20" y="312" width="6" height="2" fill="#6c6c4b"/><rect x="24" y="312" width="2" height="11" fill="#6c6c4b"/><rect x="74" y="312" width="6" height="2" fill="#6c6c4b"/><rect x="74" y="312" width="2" height="11" fill="#6c6c4b"/><rect x="80" y="312" width="200" height="2" fill="#6c6c4b"/><rect x="280" y="312" width="6" height="2" fill="#6c6c4b"/><rect x="284" y="312" width="6" height="2" fill="#6c6c4b"/><rect x="284" y="312" width="2" height="11" fill="#6c6c4b"/><rect x="290" y="312" width="10" height="2" fill="#6c6c4b"/><rect x="300" y="312" width="6" height="2" fill="#6c6c4b"/><rect x="304" y="312" width="2" height="11" fill="#6c6c4b"/><rect x="364" y="312" width="6" height="2" fill="#6c6c4b"/><rect x="364" y="312" width="2" height="11" fill="#6c6c4b"/><rect x="370" y="312" width="160" height="2" fill="#6c6c4b"/><rect x="530" y="312" width="6" height="2" fill="#6c6c4b"/><rect x="534" y="312" width="2" height="11" fill="#6c6c4b"/><rect x="564" y="312" width="6" height="2" fill="#6c6c4b"/><rect x="564" y="312" width="2" height="11" fill="#6c6c4b"/><rect x="570" y="312" width="10" height="2" fill="#6c6c4b"/><path shape-rendering="geometricPrecision" d="M585 323L585 316.5A3.5 3.5 0 0 0 581.5 313L580 313" fill="none" stroke="#6c6c4b" stroke-width="2"/><rect x="4" y="323" width="2" height="304" fill="#6c6c4b"/><rect x="584" y="323" width="2" height="304" fill="#6c6c4b"/><path shape-rendering="geometricPrecision" d="M5 627L5 632.5A3.5 3.5 0 0 0 8.5 636L10 636" fill="none" stroke="#6c6c4b" stroke-width="2"/><path shape-rendering="geometricPrecision" d="M585 627L585 632.5A3.5 3.5 0 0 1 581.5 636L580 636" fill="none" stroke="#6c6c4b" stroke-width="2"/><rect x="10" y="635" width="570" height="2" fill="#6c6c4b"/><rect x="280" y="635" width="6" height="2" fill="#6c6c4b"/><rect x="284" y="635" width="6" height="2" fill="#6c6c4b"/><rect x="284" y="627" width="2" height="10" fill="#6c6c4b"/><rect x="284" y="323" width="2" height="304" fill="#383838"/><rect x="5" y="350" width="5" height="2" fill="#6c6c4b"/><rect x="10" y="350" width="10" height="2" fill="#383838"/><rect x="70" y="350" width="120" height="2" fill="#383838"/><rect x="230" y="350" width="10" height="2" fill="#383838"/><rect x="270" y="350" width="10" height="2" fill="#383838"/><rect x="280" y="350" width="5" height="2" fill="#383838"/><rect x="5" y="407" width="5" height="2" fill="#6c6c4b"/><rect x="10" y="407" width="10" height="2" fill="#383838"/><rect x="120" y="407" width="70" height="2" fill="#383838"/><rect x="230" y="407" width="10" height="2" fill="#383838"/><rect x="270" y="407" width="10" height="2" fill="#383838"/><rect x="280" y="407" width="5" height="2" fill="#383838"/><rect x="5" y="464" width="5" height="2" fill="#6c6c4b"/><rect x="10" y="464" width="10" height="2" fill="#383838"/><rect x="90" y="464" width="100" height="2" fill="#383838"/><rect x="230" y="464" width="10" height="2" fill="#383838"/><rect x="270" y="464" width="10" height="2" fill="#383838"/><rect x="280" y="464" width="5" height="2" fill="#383838"/><rect x="5" y="521" width="5" height="2" fill="#6c6c4b"/><rect x="10" y="521" width="10" height="2" fill="#383838"/><rect x="70" y="521" width="120" height="2" fill="#383838"/><rect x="230" y="521" width="10" height="2" fill="#383838"/><rect x="270" y="521" width="10" height="2" fill="#383838"/><rect x="280" y="521" width="5" height="2" fill="#383838"/><rect x="12" y="395.8" width="3" height="2.6" fill="#e25561"/><rect x="17" y="395.8" width="3" height="2.6" fill="#e25561"/><rect x="22" y="395.8" width="3" height="2.6" fill="#e25561"/><rect x="27" y="395.8" width="3" height="2.6" fill="#e25561"/><rect x="32" y="395.8" width="3" height="2.6" fill="#e25561"/><rect x="37" y="395.8" width="3" height="2.6" fill="#e25561"/><rect x="42" y="395.8" width="3" height="2.6" fill="#e25561"/><rect x="47" y="395.8" width="3" height="2.6" fill="#e25561"/><rect x="52" y="395.8" width="3" height="2.6" fill="#e25561"/><rect x="57" y="395.8" width="3" height="2.6" fill="#e25561"/><rect x="62" y="395.8" width="3" height="2.6" fill="#e25561"/><rect x="67" y="395.8" width="3" height="2.6" fill="#e25561"/><rect x="72" y="395.8" width="3" height="2.6" fill="#e25561"/><rect x="77" y="395.8" width="3" height="2.6" fill="#e25561"/><rect x="82" y="395.8" width="3" height="2.6" fill="#e25561"/><rect x="87" y="395.8" width="3" height="2.6" fill="#e25561"/><rect x="92" y="395.8" width="3" height="2.6" fill="#e25561"/><rect x="97" y="395.8" width="3" height="2.6" fill="#e25561"/><rect x="102" y="395.8" width="3" height="2.6" fill="#e25561"/><rect x="107" y="395.8" width="3" height="2.6" fill="#e25561"/><rect x="112" y="395.8" width="3" height="2.6" fill="#e25561"/><rect x="117" y="395.8" width="3" height="2.6" fill="#e25561"/><rect x="122" y="395.8" width="3" height="2.6" fill="#e25561"/><rect x="127" y="395.8" width="3" height="2.6" fill="#e25561"/><rect x="132" y="395.8" width="3" height="2.6" fill="#e25561"/><rect x="137" y="395.8" width="3" height="2.6" fill="#e25561"/><rect x="142" y="395.8" width="3" height="2.6" fill="#e25561"/><rect x="147" y="395.8" width="3" height="2.6" fill="#e25561"/><rect x="152" y="395.8" width="3" height="2.6" fill="#e25561"/><rect x="157" y="395.8" width="3" height="2.6" fill="#e25561"/><rect x="162" y="395.8" width="3" height="2.6" fill="#e25561"/><rect x="167" y="395.8" width="3" height="2.6" fill="#e25561"/><rect x="172" y="395.8" width="3" height="2.6" fill="#e25561"/><rect x="177" y="395.8" width="3" height="2.6" fill="#e25561"/><rect x="182" y="395.8" width="3" height="2.6" fill="#e25561"/><rect x="187" y="395.8" width="3" height="2.6" fill="#e25561"/><rect x="192" y="395.8" width="3" height="2.6" fill="#e25561"/><rect x="197" y="395.8" width="3" height="2.6" fill="#e25561"/><rect x="202" y="395.8" width="3" height="2.6" fill="#e25561"/><rect x="207" y="395.8" width="3" height="2.6" fill="#e25561"/><rect x="212" y="395.8" width="3" height="2.6" fill="#e25561"/><rect x="217" y="395.8" width="3" height="2.6" fill="#e25561"/><rect x="222" y="395.8" width="3" height="2.6" fill="#e25561"/><rect x="227" y="395.8" width="3" height="2.6" fill="#e25561"/><rect x="232" y="395.8" width="3" height="2.6" fill="#e25561"/><rect x="237" y="395.8" width="3" height="2.6" fill="#e25561"/><rect x="242" y="395.8" width="3" height="2.6" fill="#e25561"/><rect x="247" y="395.8" width="3" height="2.6" fill="#e25561"/><rect x="252" y="395.8" width="3" height="2.6" fill="#e25561"/><rect x="257" y="395.8" width="3" height="2.6" fill="#e25561"/><rect x="262" y="395.8" width="3" height="2.6" fill="#e25561"/><rect x="267" y="395.8" width="3" height="2.6" fill="#e25561"/><rect x="272" y="395.8" width="3" height="2.6" fill="#e25561"/><rect x="277" y="395.8" width="3" height="2.6" fill="#e25561"/><rect x="12" y="509.8" width="3" height="2.6" fill="#62e0f6"/><rect x="17" y="509.8" width="3" height="2.6" fill="#62e0f6"/><rect x="22" y="509.8" width="3" height="2.6" fill="#62e0f6"/><rect x="27" y="509.8" width="3" height="2.6" fill="#62e0f6"/><rect x="32" y="509.8" width="3" height="2.6" fill="#62e0f6"/><rect x="37" y="509.8" width="3" height="2.6" fill="#62e0f6"/><rect x="42" y="509.8" width="3" height="2.6" fill="#62e0f6"/><rect x="47" y="509.8" width="3" height="2.6" fill="#62e0f6"/><rect x="52" y="509.8" width="3" height="2.6" fill="#62e0f6"/><rect x="57" y="509.8" width="3" height="2.6" fill="#62e0f6"/><rect x="62" y="509.8" width="3" height="2.6" fill="#62e0f6"/><rect x="67" y="509.8" width="3" height="2.6" fill="#62e0f6"/><rect x="72" y="509.8" width="3" height="2.6" fill="#62e0f6"/><rect x="77" y="509.8" width="3" height="2.6" fill="#62e0f6"/><rect x="82" y="509.8" width="3" height="2.6" fill="#62e0f6"/><rect x="87" y="509.8" width="3" height="2.6" fill="#62e0f6"/><rect x="92" y="509.8" width="3" height="2.6" fill="#62e0f6"/><rect x="97" y="509.8" width="3" height="2.6" fill="#62e0f6"/><rect x="102" y="509.8" width="3" height="2.6" fill="#62e0f6"/><rect x="107" y="509.8" width="3" height="2.6" fill="#62e0f6"/><rect x="112" y="509.8" width="3" height="2.6" fill="#62e0f6"/><rect x="117" y="509.8" width="3" height="2.6" fill="#62e0f6"/><rect x="122" y="509.8" width="3" height="2.6" fill="#62e0f6"/><rect x="127" y="509.8" width="3" height="2.6" fill="#62e0f6"/><rect x="132" y="509.8" width="3" height="2.6" fill="#62e0f6"/><rect x="137" y="509.8" width="3" height="2.6" fill="#62e0f6"/><rect x="142" y="509.8" width="3" height="2.6" fill="#62e0f6"/><rect x="147" y="509.8" width="3" height="2.6" fill="#62e0f6"/><rect x="152" y="509.8" width="3" height="2.6" fill="#62e0f6"/><rect x="157" y="509.8" width="3" height="2.6" fill="#62e0f6"/><rect x="162" y="509.8" width="3" height="2.6" fill="#62e0f6"/><rect x="167" y="509.8" width="3" height="2.6" fill="#62e0f6"/><rect x="172" y="509.8" width="3" height="2.6" fill="#62e0f6"/><rect x="177" y="509.8" width="3" height="2.6" fill="#62e0f6"/><rect x="182" y="509.8" width="3" height="2.6" fill="#62e0f6"/><rect x="187" y="509.8" width="3" height="2.6" fill="#62e0f6"/><rect x="192" y="509.8" width="3" height="2.6" fill="#62e0f6"/><rect x="197" y="509.8" width="3" height="2.6" fill="#62e0f6"/><rect x="202" y="509.8" width="3" height="2.6" fill="#62e0f6"/><rect x="207" y="509.8" width="3" height="2.6" fill="#62e0f6"/><rect x="212" y="509.8" width="3" height="2.6" fill="#62e0f6"/><rect x="217" y="509.8" width="3" height="2.6" fill="#62e0f6"/><rect x="222" y="509.8" width="3" height="2.6" fill="#62e0f6"/><rect x="227" y="509.8" width="3" height="2.6" fill="#62e0f6"/><rect x="232" y="509.8" width="3" height="2.6" fill="#62e0f6"/><rect x="237" y="509.8" width="3" height="2.6" fill="#62e0f6"/><rect x="242" y="509.8" width="3" height="2.6" fill="#62e0f6"/><rect x="247" y="509.8" width="3" height="2.6" fill="#62e0f6"/><rect x="252" y="509.8" width="3" height="2.6" fill="#62e0f6"/><rect x="257" y="509.8" width="3" height="2.6" fill="#62e0f6"/><rect x="262" y="509.8" width="3" height="2.6" fill="#62e0f6"/><rect x="267" y="509.8" width="3" height="2.6" fill="#62e0f6"/><rect x="272" y="509.8" width="3" height="2.6" fill="#62e0f6"/><rect x="277" y="509.8" width="3" height="2.6" fill="#62e0f6"/><rect x="12" y="420.3" width="3" height="2.6" fill="#ffb814"/><rect x="17" y="420.3" width="3" height="2.6" fill="#ffb814"/><rect x="62" y="420.3" width="3" height="2.6" fill="#ffb814"/><rect x="67" y="420.3" width="3" height="2.6" fill="#ffb814"/><rect x="72" y="420.3" width="3" height="2.6" fill="#ffb814"/><rect x="77" y="420.3" width="3" height="2.6" fill="#ffb814"/><rect x="82" y="420.3" width="3" height="2.6" fill="#ffb814"/><rect x="87" y="420.3" width="3" height="2.6" fill="#ffb814"/><rect x="92" y="420.3" width="3" height="2.6" fill="#ffb814"/><rect x="97" y="420.3" width="3" height="2.6" fill="#ffb814"/><rect x="102" y="420.3" width="3" height="2.6" fill="#ffb814"/><rect x="107" y="420.3" width="3" height="2.6" fill="#ffb814"/><rect x="112" y="420.3" width="3" height="2.6" fill="#ffb814"/><rect x="117" y="420.3" width="3" height="2.6" fill="#ffb814"/><rect x="122" y="420.3" width="3" height="2.6" fill="#ffb814"/><rect x="127" y="420.3" width="3" height="2.6" fill="#ffb814"/><rect x="132" y="420.3" width="3" height="2.6" fill="#ffb814"/><rect x="137" y="420.3" width="3" height="2.6" fill="#ffb814"/><rect x="142" y="420.3" width="3" height="2.6" fill="#ffb814"/><rect x="147" y="420.3" width="3" height="2.6" fill="#ffb814"/><rect x="152" y="420.3" width="3" height="2.6" fill="#ffb814"/><rect x="157" y="420.3" width="3" height="2.6" fill="#ffb814"/><rect x="162" y="420.3" width="3" height="2.6" fill="#ffb814"/><rect x="167" y="420.3" width="3" height="2.6" fill="#ffb814"/><rect x="172" y="420.3" width="3" height="2.6" fill="#ffb814"/><rect x="177" y="420.3" width="3" height="2.6" fill="#ffb814"/><rect x="182" y="420.3" width="3" height="2.6" fill="#ffb814"/><rect x="187" y="420.3" width="3" height="2.6" fill="#ffb814"/><rect x="192" y="420.3" width="3" height="2.6" fill="#ffb814"/><rect x="197" y="420.3" width="3" height="2.6" fill="#ffb814"/><rect x="202" y="420.3" width="3" height="2.6" fill="#ffb814"/><rect x="207" y="420.3" width="3" height="2.6" fill="#ffb814"/><rect x="212" y="420.3" width="3" height="2.6" fill="#ffb814"/><rect x="217" y="420.3" width="3" height="2.6" fill="#ffb814"/><rect x="222" y="420.3" width="3" height="2.6" fill="#ffb814"/><rect x="227" y="420.3" width="3" height="2.6" fill="#ffb814"/><rect x="232" y="420.3" width="3" height="2.6" fill="#ffb814"/><rect x="237" y="420.3" width="3" height="2.6" fill="#ffb814"/><rect x="242" y="420.3" width="3" height="2.6" fill="#ffb814"/><rect x="247" y="420.3" width="3" height="2.6" fill="#ffb814"/><rect x="252" y="420.3" width="3" height="2.6" fill="#ffb814"/><rect x="257" y="420.3" width="3" height="2.6" fill="#ffb814"/><rect x="262" y="420.3" width="3" height="2.6" fill="#ffb814"/><rect x="267" y="420.3" width="3" height="2.6" fill="#ffb814"/><rect x="272" y="420.3" width="3" height="2.6" fill="#ffb814"/><rect x="277" y="420.3" width="3" height="2.6" fill="#ffb814"/><rect x="12" y="439.3" width="3" height="2.6" fill="#ffd97f"/><rect x="17" y="439.3" width="3" height="2.6" fill="#ffd97f"/><rect x="22" y="439.3" width="3" height="2.6" fill="#ffd97f"/><rect x="27" y="439.3" width="3" height="2.6" fill="#ffd97f"/><rect x="32" y="439.3" width="3" height="2.6" fill="#ffd97f"/><rect x="37" y="439.3" width="3" height="2.6" fill="#ffd97f"/><rect x="42" y="439.3" width="3" height="2.6" fill="#ffd97f"/><rect x="47" y="439.3" width="3" height="2.6" fill="#ffd97f"/><rect x="52" y="439.3" width="3" height="2.6" fill="#ffd97f"/><rect x="57" y="439.3" width="3" height="2.6" fill="#ffd97f"/><rect x="62" y="439.3" width="3" height="2.6" fill="#ffd97f"/><rect x="67" y="439.3" width="3" height="2.6" fill="#ffd97f"/><rect x="72" y="439.3" width="3" height="2.6" fill="#ffd97f"/><rect x="77" y="439.3" width="3" height="2.6" fill="#ffd97f"/><rect x="82" y="439.3" width="3" height="2.6" fill="#ffd97f"/><rect x="87" y="439.3" width="3" height="2.6" fill="#ffd97f"/><rect x="92" y="439.3" width="3" height="2.6" fill="#ffd97f"/><rect x="97" y="439.3" width="3" height="2.6" fill="#ffd97f"/><rect x="102" y="439.3" width="3" height="2.6" fill="#ffd97f"/><rect x="107" y="439.3" width="3" height="2.6" fill="#ffd97f"/><rect x="112" y="439.3" width="3" height="2.6" fill="#ffd97f"/><rect x="117" y="439.3" width="3" height="2.6" fill="#ffd97f"/><rect x="122" y="439.3" width="3" height="2.6" fill="#ffd97f"/><rect x="127" y="439.3" width="3" height="2.6" fill="#ffd97f"/><rect x="132" y="439.3" width="3" height="2.6" fill="#ffd97f"/><rect x="137" y="439.3" width="3" height="2.6" fill="#ffd97f"/><rect x="142" y="439.3" width="3" height="2.6" fill="#ffd97f"/><rect x="147" y="439.3" width="3" height="2.6" fill="#ffd97f"/><rect x="152" y="439.3" width="3" height="2.6" fill="#ffd97f"/><rect x="157" y="439.3" width="3" height="2.6" fill="#ffd97f"/><rect x="162" y="439.3" width="3" height="2.6" fill="#ffd97f"/><rect x="167" y="439.3" width="3" height="2.6" fill="#ffd97f"/><rect x="172" y="439.3" width="3" height="2.6" fill="#ffd97f"/><rect x="177" y="439.3" width="3" height="2.6" fill="#ffd97f"/><rect x="182" y="439.3" width="3" height="2.6" fill="#ffd97f"/><rect x="187" y="439.3" width="3" height="2.6" fill="#ffd97f"/><rect x="192" y="439.3" width="3" height="2.6" fill="#ffd97f"/><rect x="197" y="439.3" width="3" height="2.6" fill="#ffd97f"/><rect x="202" y="439.3" width="3" height="2.6" fill="#ffd97f"/><rect x="207" y="439.3" width="3" height="2.6" fill="#ffd97f"/><rect x="212" y="439.3" width="3" height="2.6" fill="#ffd97f"/><rect x="217" y="439.3" width="3" height="2.6" fill="#ffd97f"/><rect x="222" y="439.3" width="3" height="2.6" fill="#ffd97f"/><rect x="227" y="439.3" width="3" height="2.6" fill="#ffd97f"/><rect x="232" y="439.3" width="3" height="2.6" fill="#ffd97f"/><rect x="237" y="439.3" width="3" height="2.6" fill="#ffd97f"/><rect x="242" y="439.3" width="3" height="2.6" fill="#ffd97f"/><rect x="247" y="439.3" width="3" height="2.6" fill="#ffd97f"/><rect x="252" y="439.3" width="3" height="2.6" fill="#ffd97f"/><rect x="257" y="439.3" width="3" height="2.6" fill="#ffd97f"/><rect x="262" y="439.3" width="3" height="2.6" fill="#ffd97f"/><rect x="267" y="439.3" width="3" height="2.6" fill="#ffd97f"/><rect x="272" y="439.3" width="3" height="2.6" fill="#ffd97f"/><rect x="277" y="439.3" width="3" height="2.6" fill="#ffd97f"/><rect x="12" y="534.3" width="3" height="2.6" fill="#dcff85"/><rect x="17" y="534.3" width="3" height="2.6" fill="#dcff85"/><rect x="62" y="534.3" width="3" height="2.6" fill="#dcff85"/><rect x="67" y="534.3" width="3" height="2.6" fill="#dcff85"/><rect x="72" y="534.3" width="3" height="2.6" fill="#dcff85"/><rect x="77" y="534.3" width="3" height="2.6" fill="#dcff85"/><rect x="82" y="534.3" width="3" height="2.6" fill="#dcff85"/><rect x="87" y="534.3" width="3" height="2.6" fill="#dcff85"/><rect x="92" y="534.3" width="3" height="2.6" fill="#dcff85"/><rect x="97" y="534.3" width="3" height="2.6" fill="#dcff85"/><rect x="102" y="534.3" width="3" height="2.6" fill="#dcff85"/><rect x="107" y="534.3" width="3" height="2.6" fill="#dcff85"/><rect x="112" y="534.3" width="3" height="2.6" fill="#dcff85"/><rect x="117" y="534.3" width="3" height="2.6" fill="#dcff85"/><rect x="122" y="534.3" width="3" height="2.6" fill="#dcff85"/><rect x="127" y="534.3" width="3" height="2.6" fill="#dcff85"/><rect x="132" y="534.3" width="3" height="2.6" fill="#dcff85"/><rect x="137" y="534.3" width="3" height="2.6" fill="#dcff85"/><rect x="142" y="534.3" width="3" height="2.6" fill="#dcff85"/><rect x="147" y="534.3" width="3" height="2.6" fill="#dcff85"/><rect x="152" y="534.3" width="3" height="2.6" fill="#dcff85"/><rect x="157" y="534.3" width="3" height="2.6" fill="#dcff85"/><rect x="162" y="534.3" width="3" height="2.6" fill="#dcff85"/><rect x="167" y="534.3" width="3" height="2.6" fill="#dcff85"/><rect x="172" y="534.3" width="3" height="2.6" fill="#dcff85"/><rect x="177" y="534.3" width="3" height="2.6" fill="#dcff85"/><rect x="182" y="534.3" width="3" height="2.6" fill="#dcff85"/><rect x="187" y="534.3" width="3" height="2.6" fill="#dcff85"/><rect x="192" y="534.3" width="3" height="2.6" fill="#dcff85"/><rect x="197" y="534.3" width="3" height="2.6" fill="#dcff85"/><rect x="202" y="534.3" width="3" height="2.6" fill="#dcff85"/><rect x="207" y="534.3" width="3" height="2.6" fill="#dcff85"/><rect x="212" y="534.3" width="3" height="2.6" fill="#dcff85"/><rect x="217" y="534.3" width="3" height="2.6" fill="#dcff85"/><rect x="222" y="534.3" width="3" height="2.6" fill="#dcff85"/><rect x="227" y="534.3" width="3" height="2.6" fill="#dcff85"/><rect x="232" y="534.3" width="3" height="2.6" fill="#dcff85"/><rect x="237" y="534.3" width="3" height="2.6" fill="#dcff85"/><rect x="242" y="534.3" width="3" height="2.6" fill="#dcff85"/><rect x="247" y="534.3" width="3" height="2.6" fill="#dcff85"/><rect x="252" y="534.3" width="3" height="2.6" fill="#dcff85"/><rect x="257" y="534.3" width="3" height="2.6" fill="#dcff85"/><rect x="262" y="534.3" width="3" height="2.6" fill="#dcff85"/><rect x="267" y="534.3" width="3" height="2.6" fill="#dcff85"/><rect x="272" y="534.3" width="3" height="2.6" fill="#dcff85"/><rect x="277" y="534.3" width="3" height="2.6" fill="#dcff85"/><rect x="12" y="553.3" width="3" height="2.6" fill="#b9e986"/><rect x="17" y="553.3" width="3" height="2.6" fill="#b9e986"/><rect x="22" y="553.3" width="3" height="2.6" fill="#b9e986"/><rect x="27" y="553.3" width="3" height="2.6" fill="#b9e986"/><rect x="32" y="553.3" width="3" height="2.6" fill="#b9e986"/><rect x="37" y="553.3" width="3" height="2.6" fill="#b9e986"/><rect x="42" y="553.3" width="3" height="2.6" fill="#b9e986"/><rect x="47" y="553.3" width="3" height="2.6" fill="#b9e986"/><rect x="52" y="553.3" width="3" height="2.6" fill="#b9e986"/><rect x="57" y="553.3" width="3" height="2.6" fill="#b9e986"/><rect x="62" y="553.3" width="3" height="2.6" fill="#b9e986"/><rect x="67" y="553.3" width="3" height="2.6" fill="#b9e986"/><rect x="72" y="553.3" width="3" height="2.6" fill="#b9e986"/><rect x="77" y="553.3" width="3" height="2.6" fill="#b9e986"/><rect x="82" y="553.3" width="3" height="2.6" fill="#b9e986"/><rect x="87" y="553.3" width="3" height="2.6" fill="#b9e986"/><rect x="92" y="553.3" width="3" height="2.6" fill="#b9e986"/><rect x="97" y="553.3" width="3" height="2.6" fill="#b9e986"/><rect x="102" y="553.3" width="3" height="2.6" fill="#b9e986"/><rect x="107" y="553.3" width="3" height="2.6" fill="#b9e986"/><rect x="112" y="553.3" width="3" height="2.6" fill="#b9e986"/><rect x="117" y="553.3" width="3" height="2.6" fill="#b9e986"/><rect x="122" y="553.3" width="3" height="2.6" fill="#b9e986"/><rect x="127" y="553.3" width="3" height="2.6" fill="#b9e986"/><rect x="132" y="553.3" width="3" height="2.6" fill="#b9e986"/><rect x="137" y="553.3" width="3" height="2.6" fill="#b9e986"/><rect x="142" y="553.3" width="3" height="2.6" fill="#b9e986"/><rect x="147" y="553.3" width="3" height="2.6" fill="#b9e986"/><rect x="152" y="553.3" width="3" height="2.6" fill="#b9e986"/><rect x="157" y="553.3" width="3" height="2.6" fill="#b9e986"/><rect x="162" y="553.3" width="3" height="2.6" fill="#b9e986"/><rect x="167" y="553.3" width="3" height="2.6" fill="#b9e986"/><rect x="172" y="553.3" width="3" height="2.6" fill="#b9e986"/><rect x="177" y="553.3" width="3" height="2.6" fill="#b9e986"/><rect x="182" y="553.3" width="3" height="2.6" fill="#b9e986"/><rect x="187" y="553.3" width="3" height="2.6" fill="#b9e986"/><rect x="192" y="553.3" width="3" height="2.6" fill="#b9e986"/><rect x="197" y="553.3" width="3" height="2.6" fill="#b9e986"/><rect x="202" y="553.3" width="3" height="2.6" fill="#b9e986"/><rect x="207" y="553.3" width="3" height="2.6" fill="#b9e986"/><rect x="212" y="553.3" width="3" height="2.6" fill="#b9e986"/><rect x="217" y="553.3" width="3" height="2.6" fill="#b9e986"/><rect x="222" y="553.3" width="3" height="2.6" fill="#b9e986"/><rect x="227" y="553.3" width="3" height="2.6" fill="#b9e986"/><rect x="232" y="553.3" width="3" height="2.6" fill="#b9e986"/><rect x="237" y="553.3" width="3" height="2.6" fill="#b9e986"/><rect x="242" y="553.3" width="3" height="2.6" fill="#b9e986"/><rect x="247" y="553.3" width="3" height="2.6" fill="#b9e986"/><rect x="252" y="553.3" width="3" height="2.6" fill="#b9e986"/><rect x="257" y="553.3" width="3" height="2.6" fill="#b9e986"/><rect x="262" y="553.3" width="3" height="2.6" fill="#b9e986"/><rect x="267" y="553.3" width="3" height="2.6" fill="#b9e986"/><rect x="272" y="553.3" width="3" height="2.6" fill="#b9e986"/><rect x="277" y="553.3" width="3" height="2.6" fill="#b9e986"/><rect x="12" y="424.8" width="3" height="2.6" fill="#ffb814"/><rect x="17" y="424.8" width="3" height="2.6" fill="#ffb814"/><rect x="62" y="424.8" width="3" height="2.6" fill="#ffb814"/><rect x="67" y="424.8" width="3" height="2.6" fill="#ffb814"/><rect x="72" y="424.8" width="3" height="2.6" fill="#ffb814"/><rect x="77" y="424.8" width="3" height="2.6" fill="#ffb814"/><rect x="82" y="424.8" width="3" height="2.6" fill="#ffb814"/><rect x="87" y="424.8" width="3" height="2.6" fill="#ffb814"/><rect x="92" y="424.8" width="3" height="2.6" fill="#ffb814"/><rect x="97" y="424.8" width="3" height="2.6" fill="#ffb814"/><rect x="102" y="424.8" width="3" height="2.6" fill="#ffb814"/><rect x="107" y="424.8" width="3" height="2.6" fill="#ffb814"/><rect x="112" y="424.8" width="3" height="2.6" fill="#ffb814"/><rect x="117" y="424.8" width="3" height="2.6" fill="#ffb814"/><rect x="122" y="424.8" width="3" height="2.6" fill="#ffb814"/><rect x="127" y="424.8" width="3" height="2.6" fill="#ffb814"/><rect x="132" y="424.8" width="3" height="2.6" fill="#ffb814"/><rect x="137" y="424.8" width="3" height="2.6" fill="#ffb814"/><rect x="142" y="424.8" width="3" height="2.6" fill="#ffb814"/><rect x="147" y="424.8" width="3" height="2.6" fill="#ffb814"/><rect x="152" y="424.8" width="3" height="2.6" fill="#ffb814"/><rect x="157" y="424.8" width="3" height="2.6" fill="#ffb814"/><rect x="162" y="424.8" width="3" height="2.6" fill="#ffb814"/><rect x="167" y="424.8" width="3" height="2.6" fill="#ffb814"/><rect x="172" y="424.8" width="3" height="2.6" fill="#ffb814"/><rect x="177" y="424.8" width="3" height="2.6" fill="#ffb814"/><rect x="182" y="424.8" width="3" height="2.6" fill="#ffb814"/><rect x="187" y="424.8" width="3" height="2.6" fill="#ffb814"/><rect x="192" y="424.8" width="3" height="2.6" fill="#ffb814"/><rect x="197" y="424.8" width="3" height="2.6" fill="#ffb814"/><rect x="202" y="424.8" width="3" height="2.6" fill="#ffb814"/><rect x="207" y="424.8" width="3" height="2.6" fill="#ffb814"/><rect x="212" y="424.8" width="3" height="2.6" fill="#ffb814"/><rect x="217" y="424.8" width="3" height="2.6" fill="#ffb814"/><rect x="222" y="424.8" width="3" height="2.6" fill="#ffb814"/><rect x="227" y="424.8" width="3" height="2.6" fill="#ffb814"/><rect x="232" y="424.8" width="3" height="2.6" fill="#ffb814"/><rect x="237" y="424.8" width="3" height="2.6" fill="#ffb814"/><rect x="242" y="424.8" width="3" height="2.6" fill="#ffb814"/><rect x="247" y="424.8" width="3" height="2.6" fill="#ffb814"/><rect x="252" y="424.8" width="3" height="2.6" fill="#ffb814"/><rect x="257" y="424.8" width="3" height="2.6" fill="#ffb814"/><rect x="262" y="424.8" width="3" height="2.6" fill="#ffb814"/><rect x="267" y="424.8" width="3" height="2.6" fill="#ffb814"/><rect x="272" y="424.8" width="3" height="2.6" fill="#ffb814"/><rect x="277" y="424.8" width="3" height="2.6" fill="#ffb814"/><rect x="12" y="443.8" width="3" height="2.6" fill="#ffd97f"/><rect x="17" y="443.8" width="3" height="2.6" fill="#ffd97f"/><rect x="22" y="443.8" width="3" height="2.6" fill="#ffd97f"/><rect x="27" y="443.8" width="3" height="2.6" fill="#ffd97f"/><rect x="32" y="443.8" width="3" height="2.6" fill="#ffd97f"/><rect x="37" y="443.8" width="3" height="2.6" fill="#ffd97f"/><rect x="42" y="443.8" width="3" height="2.6" fill="#ffd97f"/><rect x="47" y="443.8" width="3" height="2.6" fill="#ffd97f"/><rect x="52" y="443.8" width="3" height="2.6" fill="#ffd97f"/><rect x="57" y="443.8" width="3" height="2.6" fill="#ffd97f"/><rect x="62" y="443.8" width="3" height="2.6" fill="#ffd97f"/><rect x="67" y="443.8" width="3" height="2.6" fill="#ffd97f"/><rect x="72" y="443.8" width="3" height="2.6" fill="#ffd97f"/><rect x="77" y="443.8" width="3" height="2.6" fill="#ffd97f"/><rect x="82" y="443.8" width="3" height="2.6" fill="#ffd97f"/><rect x="87" y="443.8" width="3" height="2.6" fill="#ffd97f"/><rect x="92" y="443.8" width="3" height="2.6" fill="#ffd97f"/><rect x="97" y="443.8" width="3" height="2.6" fill="#ffd97f"/><rect x="102" y="443.8" width="3" height="2.6" fill="#ffd97f"/><rect x="107" y="443.8" width="3" height="2.6" fill="#ffd97f"/><rect x="112" y="443.8" width="3" height="2.6" fill="#ffd97f"/><rect x="117" y="443.8" width="3" height="2.6" fill="#ffd97f"/><rect x="122" y="443.8" width="3" height="2.6" fill="#ffd97f"/><rect x="127" y="443.8" width="3" height="2.6" fill="#ffd97f"/><rect x="132" y="443.8" width="3" height="2.6" fill="#ffd97f"/><rect x="137" y="443.8" width="3" height="2.6" fill="#ffd97f"/><rect x="142" y="443.8" width="3" height="2.6" fill="#ffd97f"/><rect x="147" y="443.8" width="3" height="2.6" fill="#ffd97f"/><rect x="152" y="443.8" width="3" height="2.6" fill="#ffd97f"/><rect x="157" y="443.8" width="3" height="2.6" fill="#ffd97f"/><rect x="162" y="443.8" width="3" height="2.6" fill="#ffd97f"/><rect x="167" y="443.8" width="3" height="2.6" fill="#ffd97f"/><rect x="172" y="443.8" width="3" height="2.6" fill="#ffd97f"/><rect x="177" y="443.8" width="3" height="2.6" fill="#ffd97f"/><rect x="182" y="443.8" width="3" height="2.6" fill="#ffd97f"/><rect x="187" y="443.8" width="3" height="2.6" fill="#ffd97f"/><rect x="192" y="443.8" width="3" height="2.6" fill="#ffd97f"/><rect x="197" y="443.8" width="3" height="2.6" fill="#ffd97f"/><rect x="202" y="443.8" width="3" height="2.6" fill="#ffd97f"/><rect x="207" y="443.8" width="3" height="2.6" fill="#ffd97f"/><rect x="212" y="443.8" width="3" height="2.6" fill="#ffd97f"/><rect x="217" y="443.8" width="3" height="2.6" fill="#ffd97f"/><rect x="222" y="443.8" width="3" height="2.6" fill="#ffd97f"/><rect x="227" y="443.8" width="3" height="2.6" fill="#ffd97f"/><rect x="232" y="443.8" width="3" height="2.6" fill="#ffd97f"/><rect x="237" y="443.8" width="3" height="2.6" fill="#ffd97f"/><rect x="242" y="443.8" width="3" height="2.6" fill="#ffd97f"/><rect x="247" y="443.8" width="3" height="2.6" fill="#ffd97f"/><rect x="252" y="443.8" width="3" height="2.6" fill="#ffd97f"/><rect x="257" y="443.8" width="3" height="2.6" fill="#ffd97f"/><rect x="262" y="443.8" width="3" height="2.6" fill="#ffd97f"/><rect x="267" y="443.8" width="3" height="2.6" fill="#ffd97f"/><rect x="272" y="443.8" width="3" height="2.6" fill="#ffd97f"/><rect x="277" y="443.8" width="3" height="2.6" fill="#ffd97f"/><rect x="12" y="538.8" width="3" height="2.6" fill="#dcff85"/><rect x="17" y="538.8" width="3" height="2.6" fill="#dcff85"/><rect x="62" y="538.8" width="3" height="2.6" fill="#dcff85"/><rect x="67" y="538.8" width="3" height="2.6" fill="#dcff85"/><rect x="72" y="538.8" width="3" height="2.6" fill="#dcff85"/><rect x="77" y="538.8" width="3" height="2.6" fill="#dcff85"/><rect x="82" y="538.8" width="3" height="2.6" fill="#dcff85"/><rect x="87" y="538.8" width="3" height="2.6" fill="#dcff85"/><rect x="92" y="538.8" width="3" height="2.6" fill="#dcff85"/><rect x="97" y="538.8" width="3" height="2.6" fill="#dcff85"/><rect x="102" y="538.8" width="3" height="2.6" fill="#dcff85"/><rect x="107" y="538.8" width="3" height="2.6" fill="#dcff85"/><rect x="112" y="538.8" width="3" height="2.6" fill="#dcff85"/><rect x="117" y="538.8" width="3" height="2.6" fill="#dcff85"/><rect x="122" y="538.8" width="3" height="2.6" fill="#dcff85"/><rect x="127" y="538.8" width="3" height="2.6" fill="#dcff85"/><rect x="132" y="538.8" width="3" height="2.6" fill="#dcff85"/><rect x="137" y="538.8" width="3" height="2.6" fill="#dcff85"/><rect x="142" y="538.8" width="3" height="2.6" fill="#dcff85"/><rect x="147" y="538.8" width="3" height="2.6" fill="#dcff85"/><rect x="152" y="538.8" width="3" height="2.6" fill="#dcff85"/><rect x="157" y="538.8" width="3" height="2.6" fill="#dcff85"/><rect x="162" y="538.8" width="3" height="2.6" fill="#dcff85"/><rect x="167" y="538.8" width="3" height="2.6" fill="#dcff85"/><rect x="172" y="538.8" width="3" height="2.6" fill="#dcff85"/><rect x="177" y="538.8" width="3" height="2.6" fill="#dcff85"/><rect x="182" y="538.8" width="3" height="2.6" fill="#dcff85"/><rect x="187" y="538.8" width="3" height="2.6" fill="#dcff85"/><rect x="192" y="538.8" width="3" height="2.6" fill="#dcff85"/><rect x="197" y="538.8" width="3" height="2.6" fill="#dcff85"/><rect x="202" y="538.8" width="3" height="2.6" fill="#dcff85"/><rect x="207" y="538.8" width="3" height="2.6" fill="#dcff85"/><rect x="212" y="538.8" width="3" height="2.6" fill="#dcff85"/><rect x="217" y="538.8" width="3" height="2.6" fill="#dcff85"/><rect x="222" y="538.8" width="3" height="2.6" fill="#dcff85"/><rect x="227" y="538.8" width="3" height="2.6" fill="#dcff85"/><rect x="232" y="538.8" width="3" height="2.6" fill="#dcff85"/><rect x="237" y="538.8" width="3" height="2.6" fill="#dcff85"/><rect x="242" y="538.8" width="3" height="2.6" fill="#dcff85"/><rect x="247" y="538.8" width="3" height="2.6" fill="#dcff85"/><rect x="252" y="538.8" width="3" height="2.6" fill="#dcff85"/><rect x="257" y="538.8" width="3" height="2.6" fill="#dcff85"/><rect x="262" y="538.8" width="3" height="2.6" fill="#dcff85"/><rect x="267" y="538.8" width="3" height="2.6" fill="#dcff85"/><rect x="272" y="538.8" width="3" height="2.6" fill="#dcff85"/><rect x="277" y="538.8" width="3" height="2.6" fill="#dcff85"/><rect x="12" y="557.8" width="3" height="2.6" fill="#b9e986"/><rect x="17" y="557.8" width="3" height="2.6" fill="#b9e986"/><rect x="22" y="557.8" width="3" height="2.6" fill="#b9e986"/><rect x="27" y="557.8" width="3" height="2.6" fill="#b9e986"/><rect x="32" y="557.8" width="3" height="2.6" fill="#b9e986"/><rect x="37" y="557.8" width="3" height="2.6" fill="#b9e986"/><rect x="42" y="557.8" width="3" height="2.6" fill="#b9e986"/><rect x="47" y="557.8" width="3" height="2.6" fill="#b9e986"/><rect x="52" y="557.8" width="3" height="2.6" fill="#b9e986"/><rect x="57" y="557.8" width="3" height="2.6" fill="#b9e986"/><rect x="62" y="557.8" width="3" height="2.6" fill="#b9e986"/><rect x="67" y="557.8" width="3" height="2.6" fill="#b9e986"/><rect x="72" y="557.8" width="3" height="2.6" fill="#b9e986"/><rect x="77" y="557.8" width="3" height="2.6" fill="#b9e986"/><rect x="82" y="557.8" width="3" height="2.6" fill="#b9e986"/><rect x="87" y="557.8" width="3" height="2.6" fill="#b9e986"/><rect x="92" y="557.8" width="3" height="2.6" fill="#b9e986"/><rect x="97" y="557.8" width="3" height="2.6" fill="#b9e986"/><rect x="102" y="557.8" width="3" height="2.6" fill="#b9e986"/><rect x="107" y="557.8" width="3" height="2.6" fill="#b9e986"/><rect x="112" y="557.8" width="3" height="2.6" fill="#b9e986"/><rect x="117" y="557.8" width="3" height="2.6" fill="#b9e986"/><rect x="122" y="557.8" width="3" height="2.6" fill="#b9e986"/><rect x="127" y="557.8" width="3" height="2.6" fill="#b9e986"/><rect x="132" y="557.8" width="3" height="2.6" fill="#b9e986"/><rect x="137" y="557.8" width="3" height="2.6" fill="#b9e986"/><rect x="142" y="557.8" width="3" height="2.6" fill="#b9e986"/><rect x="147" y="557.8" width="3" height="2.6" fill="#b9e986"/><rect x="152" y="557.8" width="3" height="2.6" fill="#b9e986"/><rect x="157" y="557.8" width="3" height="2.6" fill="#b9e986"/><rect x="162" y="557.8" width="3" height="2.6" fill="#b9e986"/><rect x="167" y="557.8" width="3" height="2.6" fill="#b9e986"/><rect x="172" y="557.8" width="3" height="2.6" fill="#b9e986"/><rect x="177" y="557.8" width="3" height="2.6" fill="#b9e986"/><rect x="182" y="557.8" width="3" height="2.6" fill="#b9e986"/><rect x="187" y="557.8" width="3" height="2.6" fill="#b9e986"/><rect x="192" y="557.8" width="3" height="2.6" fill="#b9e986"/><rect x="197" y="557.8" width="3" height="2.6" fill="#b9e986"/><rect x="202" y="557.8" width="3" height="2.6" fill="#b9e986"/><rect x="207" y="557.8" width="3" height="2.6" fill="#b9e986"/><rect x="212" y="557.8" width="3" height="2.6" fill="#b9e986"/><rect x="217" y="557.8" width="3" height="2.6" fill="#b9e986"/><rect x="222" y="557.8" width="3" height="2.6" fill="#b9e986"/><rect x="227" y="557.8" width="3" height="2.6" fill="#b9e986"/><rect x="232" y="557.8" width="3" height="2.6" fill="#b9e986"/><rect x="237" y="557.8" width="3" height="2.6" fill="#b9e986"/><rect x="242" y="557.8" width="3" height="2.6" fill="#b9e986"/><rect x="247" y="557.8" width="3" height="2.6" fill="#b9e986"/><rect x="252" y="557.8" width="3" height="2.6" fill="#b9e986"/><rect x="257" y="557.8" width="3" height="2.6" fill="#b9e986"/><rect x="262" y="557.8" width="3" height="2.6" fill="#b9e986"/><rect x="267" y="557.8" width="3" height="2.6" fill="#b9e986"/><rect x="272" y="557.8" width="3" height="2.6" fill="#b9e986"/><rect x="277" y="557.8" width="3" height="2.6" fill="#b9e986"/><rect x="12" y="429.3" width="3" height="2.6" fill="#ffb814"/><rect x="17" y="429.3" width="3" height="2.6" fill="#ffb814"/><rect x="62" y="429.3" width="3" height="2.6" fill="#ffb814"/><rect x="67" y="429.3" width="3" height="2.6" fill="#ffb814"/><rect x="72" y="429.3" width="3" height="2.6" fill="#ffb814"/><rect x="77" y="429.3" width="3" height="2.6" fill="#ffb814"/><rect x="82" y="429.3" width="3" height="2.6" fill="#ffb814"/><rect x="87" y="429.3" width="3" height="2.6" fill="#ffb814"/><rect x="92" y="429.3" width="3" height="2.6" fill="#ffb814"/><rect x="97" y="429.3" width="3" height="2.6" fill="#ffb814"/><rect x="102" y="429.3" width="3" height="2.6" fill="#ffb814"/><rect x="107" y="429.3" width="3" height="2.6" fill="#ffb814"/><rect x="112" y="429.3" width="3" height="2.6" fill="#ffb814"/><rect x="117" y="429.3" width="3" height="2.6" fill="#ffb814"/><rect x="122" y="429.3" width="3" height="2.6" fill="#ffb814"/><rect x="127" y="429.3" width="3" height="2.6" fill="#ffb814"/><rect x="132" y="429.3" width="3" height="2.6" fill="#ffb814"/><rect x="137" y="429.3" width="3" height="2.6" fill="#ffb814"/><rect x="142" y="429.3" width="3" height="2.6" fill="#ffb814"/><rect x="147" y="429.3" width="3" height="2.6" fill="#ffb814"/><rect x="152" y="429.3" width="3" height="2.6" fill="#ffb814"/><rect x="157" y="429.3" width="3" height="2.6" fill="#ffb814"/><rect x="162" y="429.3" width="3" height="2.6" fill="#ffb814"/><rect x="167" y="429.3" width="3" height="2.6" fill="#ffb814"/><rect x="172" y="429.3" width="3" height="2.6" fill="#ffb814"/><rect x="177" y="429.3" width="3" height="2.6" fill="#ffb814"/><rect x="182" y="429.3" width="3" height="2.6" fill="#ffb814"/><rect x="187" y="429.3" width="3" height="2.6" fill="#ffb814"/><rect x="192" y="429.3" width="3" height="2.6" fill="#ffb814"/><rect x="197" y="429.3" width="3" height="2.6" fill="#ffb814"/><rect x="202" y="429.3" width="3" height="2.6" fill="#ffb814"/><rect x="207" y="429.3" width="3" height="2.6" fill="#ffb814"/><rect x="212" y="429.3" width="3" height="2.6" fill="#ffb814"/><rect x="217" y="429.3" width="3" height="2.6" fill="#ffb814"/><rect x="222" y="429.3" width="3" height="2.6" fill="#ffb814"/><rect x="227" y="429.3" width="3" height="2.6" fill="#ffb814"/><rect x="232" y="429.3" width="3" height="2.6" fill="#ffb814"/><rect x="237" y="429.3" width="3" height="2.6" fill="#ffb814"/><rect x="242" y="429.3" width="3" height="2.6" fill="#ffb814"/><rect x="247" y="429.3" width="3" height="2.6" fill="#ffb814"/><rect x="252" y="429.3" width="3" height="2.6" fill="#ffb814"/><rect x="257" y="429.3" width="3" height="2.6" fill="#ffb814"/><rect x="262" y="429.3" width="3" height="2.6" fill="#ffb814"/><rect x="267" y="429.3" width="3" height="2.6" fill="#ffb814"/><rect x="272" y="429.3" width="3" height="2.6" fill="#ffb814"/><rect x="277" y="429.3" width="3" height="2.6" fill="#ffb814"/><rect x="12" y="448.3" width="3" height="2.6" fill="#ffd97f"/><rect x="17" y="448.3" width="3" height="2.6" fill="#ffd97f"/><rect x="22" y="448.3" width="3" height="2.6" fill="#ffd97f"/><rect x="27" y="448.3" width="3" height="2.6" fill="#ffd97f"/><rect x="32" y="448.3" width="3" height="2.6" fill="#ffd97f"/><rect x="37" y="448.3" width="3" height="2.6" fill="#ffd97f"/><rect x="42" y="448.3" width="3" height="2.6" fill="#ffd97f"/><rect x="47" y="448.3" width="3" height="2.6" fill="#ffd97f"/><rect x="52" y="448.3" width="3" height="2.6" fill="#ffd97f"/><rect x="57" y="448.3" width="3" height="2.6" fill="#ffd97f"/><rect x="62" y="448.3" width="3" height="2.6" fill="#ffd97f"/><rect x="67" y="448.3" width="3" height="2.6" fill="#ffd97f"/><rect x="72" y="448.3" width="3" height="2.6" fill="#ffd97f"/><rect x="77" y="448.3" width="3" height="2.6" fill="#ffd97f"/><rect x="82" y="448.3" width="3" height="2.6" fill="#ffd97f"/><rect x="87" y="448.3" width="3" height="2.6" fill="#ffd97f"/><rect x="92" y="448.3" width="3" height="2.6" fill="#ffd97f"/><rect x="97" y="448.3" width="3" height="2.6" fill="#ffd97f"/><rect x="102" y="448.3" width="3" height="2.6" fill="#ffd97f"/><rect x="107" y="448.3" width="3" height="2.6" fill="#ffd97f"/><rect x="112" y="448.3" width="3" height="2.6" fill="#ffd97f"/><rect x="117" y="448.3" width="3" height="2.6" fill="#ffd97f"/><rect x="122" y="448.3" width="3" height="2.6" fill="#ffd97f"/><rect x="127" y="448.3" width="3" height="2.6" fill="#ffd97f"/><rect x="132" y="448.3" width="3" height="2.6" fill="#ffd97f"/><rect x="137" y="448.3" width="3" height="2.6" fill="#ffd97f"/><rect x="142" y="448.3" width="3" height="2.6" fill="#ffd97f"/><rect x="147" y="448.3" width="3" height="2.6" fill="#ffd97f"/><rect x="152" y="448.3" width="3" height="2.6" fill="#ffd97f"/><rect x="157" y="448.3" width="3" height="2.6" fill="#ffd97f"/><rect x="162" y="448.3" width="3" height="2.6" fill="#ffd97f"/><rect x="167" y="448.3" width="3" height="2.6" fill="#ffd97f"/><rect x="172" y="448.3" width="3" height="2.6" fill="#ffd97f"/><rect x="177" y="448.3" width="3" height="2.6" fill="#ffd97f"/><rect x="182" y="448.3" width="3" height="2.6" fill="#ffd97f"/><rect x="187" y="448.3" width="3" height="2.6" fill="#ffd97f"/><rect x="192" y="448.3" width="3" height="2.6" fill="#ffd97f"/><rect x="197" y="448.3" width="3" height="2.6" fill="#ffd97f"/><rect x="202" y="448.3" width="3" height="2.6" fill="#ffd97f"/><rect x="207" y="448.3" width="3" height="2.6" fill="#ffd97f"/><rect x="212" y="448.3" width="3" height="2.6" fill="#ffd97f"/><rect x="217" y="448.3" width="3" height="2.6" fill="#ffd97f"/><rect x="222" y="448.3" width="3" height="2.6" fill="#ffd97f"/><rect x="227" y="448.3" width="3" height="2.6" fill="#ffd97f"/><rect x="232" y="448.3" width="3" height="2.6" fill="#ffd97f"/><rect x="237" y="448.3" width="3" height="2.6" fill="#ffd97f"/><rect x="242" y="448.3" width="3" height="2.6" fill="#ffd97f"/><rect x="247" y="448.3" width="3" height="2.6" fill="#ffd97f"/><rect x="252" y="448.3" width="3" height="2.6" fill="#ffd97f"/><rect x="257" y="448.3" width="3" height="2.6" fill="#ffd97f"/><rect x="262" y="448.3" width="3" height="2.6" fill="#ffd97f"/><rect x="267" y="448.3" width="3" height="2.6" fill="#ffd97f"/><rect x="272" y="448.3" width="3" height="2.6" fill="#ffd97f"/><rect x="277" y="448.3" width="3" height="2.6" fill="#ffd97f"/><rect x="12" y="543.3" width="3" height="2.6" fill="#dcff85"/><rect x="17" y="543.3" width="3" height="2.6" fill="#dcff85"/><rect x="62" y="543.3" width="3" height="2.6" fill="#dcff85"/><rect x="67" y="543.3" width="3" height="2.6" fill="#dcff85"/><rect x="72" y="543.3" width="3" height="2.6" fill="#dcff85"/><rect x="77" y="543.3" width="3" height="2.6" fill="#dcff85"/><rect x="82" y="543.3" width="3" height="2.6" fill="#dcff85"/><rect x="87" y="543.3" width="3" height="2.6" fill="#dcff85"/><rect x="92" y="543.3" width="3" height="2.6" fill="#dcff85"/><rect x="97" y="543.3" width="3" height="2.6" fill="#dcff85"/><rect x="102" y="543.3" width="3" height="2.6" fill="#dcff85"/><rect x="107" y="543.3" width="3" height="2.6" fill="#dcff85"/><rect x="112" y="543.3" width="3" height="2.6" fill="#dcff85"/><rect x="117" y="543.3" width="3" height="2.6" fill="#dcff85"/><rect x="122" y="543.3" width="3" height="2.6" fill="#dcff85"/><rect x="127" y="543.3" width="3" height="2.6" fill="#dcff85"/><rect x="132" y="543.3" width="3" height="2.6" fill="#dcff85"/><rect x="137" y="543.3" width="3" height="2.6" fill="#dcff85"/><rect x="142" y="543.3" width="3" height="2.6" fill="#dcff85"/><rect x="147" y="543.3" width="3" height="2.6" fill="#dcff85"/><rect x="152" y="543.3" width="3" height="2.6" fill="#dcff85"/><rect x="157" y="543.3" width="3" height="2.6" fill="#dcff85"/><rect x="162" y="543.3" width="3" height="2.6" fill="#dcff85"/><rect x="167" y="543.3" width="3" height="2.6" fill="#dcff85"/><rect x="172" y="543.3" width="3" height="2.6" fill="#dcff85"/><rect x="177" y="543.3" width="3" height="2.6" fill="#dcff85"/><rect x="182" y="543.3" width="3" height="2.6" fill="#dcff85"/><rect x="187" y="543.3" width="3" height="2.6" fill="#dcff85"/><rect x="192" y="543.3" width="3" height="2.6" fill="#dcff85"/><rect x="197" y="543.3" width="3" height="2.6" fill="#dcff85"/><rect x="202" y="543.3" width="3" height="2.6" fill="#dcff85"/><rect x="207" y="543.3" width="3" height="2.6" fill="#dcff85"/><rect x="212" y="543.3" width="3" height="2.6" fill="#dcff85"/><rect x="217" y="543.3" width="3" height="2.6" fill="#dcff85"/><rect x="222" y="543.3" width="3" height="2.6" fill="#dcff85"/><rect x="227" y="543.3" width="3" height="2.6" fill="#dcff85"/><rect x="232" y="543.3" width="3" height="2.6" fill="#dcff85"/><rect x="237" y="543.3" width="3" height="2.6" fill="#dcff85"/><rect x="242" y="543.3" width="3" height="2.6" fill="#dcff85"/><rect x="247" y="543.3" width="3" height="2.6" fill="#dcff85"/><rect x="252" y="543.3" width="3" height="2.6" fill="#dcff85"/><rect x="257" y="543.3" width="3" height="2.6" fill="#dcff85"/><rect x="262" y="543.3" width="3" height="2.6" fill="#dcff85"/><rect x="267" y="543.3" width="3" height="2.6" fill="#dcff85"/><rect x="272" y="543.3" width="3" height="2.6" fill="#dcff85"/><rect x="277" y="543.3" width="3" height="2.6" fill="#dcff85"/><rect x="12" y="562.3" width="3" height="2.6" fill="#b9e986"/><rect x="17" y="562.3" width="3" height="2.6" fill="#b9e986"/><rect x="22" y="562.3" width="3" height="2.6" fill="#b9e986"/><rect x="27" y="562.3" width="3" height="2.6" fill="#b9e986"/><rect x="32" y="562.3" width="3" height="2.6" fill="#b9e986"/><rect x="37" y="562.3" width="3" height="2.6" fill="#b9e986"/><rect x="42" y="562.3" width="3" height="2.6" fill="#b9e986"/><rect x="47" y="562.3" width="3" height="2.6" fill="#b9e986"/><rect x="52" y="562.3" width="3" height="2.6" fill="#b9e986"/><rect x="57" y="562.3" width="3" height="2.6" fill="#b9e986"/><rect x="62" y="562.3" width="3" height="2.6" fill="#b9e986"/><rect x="67" y="562.3" width="3" height="2.6" fill="#b9e986"/><rect x="72" y="562.3" width="3" height="2.6" fill="#b9e986"/><rect x="77" y="562.3" width="3" height="2.6" fill="#b9e986"/><rect x="82" y="562.3" width="3" height="2.6" fill="#b9e986"/><rect x="87" y="562.3" width="3" height="2.6" fill="#b9e986"/><rect x="92" y="562.3" width="3" height="2.6" fill="#b9e986"/><rect x="97" y="562.3" width="3" height="2.6" fill="#b9e986"/><rect x="102" y="562.3" width="3" height="2.6" fill="#b9e986"/><rect x="107" y="562.3" width="3" height="2.6" fill="#b9e986"/><rect x="112" y="562.3" width="3" height="2.6" fill="#b9e986"/><rect x="117" y="562.3" width="3" height="2.6" fill="#b9e986"/><rect x="122" y="562.3" width="3" height="2.6" fill="#b9e986"/><rect x="127" y="562.3" width="3" height="2.6" fill="#b9e986"/><rect x="132" y="562.3" width="3" height="2.6" fill="#b9e986"/><rect x="137" y="562.3" width="3" height="2.6" fill="#b9e986"/><rect x="142" y="562.3" width="3" height="2.6" fill="#b9e986"/><rect x="147" y="562.3" width="3" height="2.6" fill="#b9e986"/><rect x="152" y="562.3" width="3" height="2.6" fill="#b9e986"/><rect x="157" y="562.3" width="3" height="2.6" fill="#b9e986"/><rect x="162" y="562.3" width="3" height="2.6" fill="#b9e986"/><rect x="167" y="562.3" width="3" height="2.6" fill="#b9e986"/><rect x="172" y="562.3" width="3" height="2.6" fill="#b9e986"/><rect x="177" y="562.3" width="3" height="2.6" fill="#b9e986"/><rect x="182" y="562.3" width="3" height="2.6" fill="#b9e986"/><rect x="187" y="562.3" width="3" height="2.6" fill="#b9e986"/><rect x="192" y="562.3" width="3" height="2.6" fill="#b9e986"/><rect x="197" y="562.3" width="3" height="2.6" fill="#b9e986"/><rect x="202" y="562.3" width="3" height="2.6" fill="#b9e986"/><rect x="207" y="562.3" width="3" height="2.6" fill="#b9e986"/><rect x="212" y="562.3" width="3" height="2.6" fill="#b9e986"/><rect x="217" y="562.3" width="3" height="2.6" fill="#b9e986"/><rect x="222" y="562.3" width="3" height="2.6" fill="#b9e986"/><rect x="227" y="562.3" width="3" height="2.6" fill="#b9e986"/><rect x="232" y="562.3" width="3" height="2.6" fill="#b9e986"/><rect x="237" y="562.3" width="3" height="2.6" fill="#b9e986"/><rect x="242" y="562.3" width="3" height="2.6" fill="#b9e986"/><rect x="247" y="562.3" width="3" height="2.6" fill="#b9e986"/><rect x="252" y="562.3" width="3" height="2.6" fill="#b9e986"/><rect x="257" y="562.3" width="3" height="2.6" fill="#b9e986"/><rect x="262" y="562.3" width="3" height="2.6" fill="#b9e986"/><rect x="267" y="562.3" width="3" height="2.6" fill="#b9e986"/><rect x="272" y="562.3" width="3" height="2.6" fill="#b9e986"/><rect x="277" y="562.3" width="3" height="2.6" fill="#b9e986"/><rect x="12" y="433.8" width="3" height="2.6" fill="#ffb814"/><rect x="17" y="433.8" width="3" height="2.6" fill="#ffb814"/><rect x="62" y="433.8" width="3" height="2.6" fill="#ffb814"/><rect x="67" y="433.8" width="3" height="2.6" fill="#ffb814"/><rect x="72" y="433.8" width="3" height="2.6" fill="#ffb814"/><rect x="77" y="433.8" width="3" height="2.6" fill="#ffb814"/><rect x="82" y="433.8" width="3" height="2.6" fill="#ffb814"/><rect x="87" y="433.8" width="3" height="2.6" fill="#ffb814"/><rect x="92" y="433.8" width="3" height="2.6" fill="#ffb814"/><rect x="97" y="433.8" width="3" height="2.6" fill="#ffb814"/><rect x="102" y="433.8" width="3" height="2.6" fill="#ffb814"/><rect x="107" y="433.8" width="3" height="2.6" fill="#ffb814"/><rect x="112" y="433.8" width="3" height="2.6" fill="#ffb814"/><rect x="117" y="433.8" width="3" height="2.6" fill="#ffb814"/><rect x="122" y="433.8" width="3" height="2.6" fill="#ffb814"/><rect x="127" y="433.8" width="3" height="2.6" fill="#ffb814"/><rect x="132" y="433.8" width="3" height="2.6" fill="#ffb814"/><rect x="137" y="433.8" width="3" height="2.6" fill="#ffb814"/><rect x="142" y="433.8" width="3" height="2.6" fill="#ffb814"/><rect x="147" y="433.8" width="3" height="2.6" fill="#ffb814"/><rect x="152" y="433.8" width="3" height="2.6" fill="#ffb814"/><rect x="157" y="433.8" width="3" height="2.6" fill="#ffb814"/><rect x="162" y="433.8" width="3" height="2.6" fill="#ffb814"/><rect x="167" y="433.8" width="3" height="2.6" fill="#ffb814"/><rect x="172" y="433.8" width="3" height="2.6" fill="#ffb814"/><rect x="177" y="433.8" width="3" height="2.6" fill="#ffb814"/><rect x="182" y="433.8" width="3" height="2.6" fill="#ffb814"/><rect x="187" y="433.8" width="3" height="2.6" fill="#ffb814"/><rect x="192" y="433.8" width="3" height="2.6" fill="#ffb814"/><rect x="197" y="433.8" width="3" height="2.6" fill="#ffb814"/><rect x="202" y="433.8" width="3" height="2.6" fill="#ffb814"/><rect x="207" y="433.8" width="3" height="2.6" fill="#ffb814"/><rect x="212" y="433.8" width="3" height="2.6" fill="#ffb814"/><rect x="217" y="433.8" width="3" height="2.6" fill="#ffb814"/><rect x="222" y="433.8" width="3" height="2.6" fill="#ffb814"/><rect x="227" y="433.8" width="3" height="2.6" fill="#ffb814"/><rect x="232" y="433.8" width="3" height="2.6" fill="#ffb814"/><rect x="237" y="433.8" width="3" height="2.6" fill="#ffb814"/><rect x="242" y="433.8" width="3" height="2.6" fill="#ffb814"/><rect x="247" y="433.8" width="3" height="2.6" fill="#ffb814"/><rect x="252" y="433.8" width="3" height="2.6" fill="#ffb814"/><rect x="257" y="433.8" width="3" height="2.6" fill="#ffb814"/><rect x="262" y="433.8" width="3" height="2.6" fill="#ffb814"/><rect x="267" y="433.8" width="3" height="2.6" fill="#ffb814"/><rect x="272" y="433.8" width="3" height="2.6" fill="#ffb814"/><rect x="277" y="433.8" width="3" height="2.6" fill="#ffb814"/><rect x="12" y="452.8" width="3" height="2.6" fill="#ffd97f"/><rect x="17" y="452.8" width="3" height="2.6" fill="#ffd97f"/><rect x="22" y="452.8" width="3" height="2.6" fill="#ffd97f"/><rect x="27" y="452.8" width="3" height="2.6" fill="#ffd97f"/><rect x="32" y="452.8" width="3" height="2.6" fill="#ffd97f"/><rect x="37" y="452.8" width="3" height="2.6" fill="#ffd97f"/><rect x="42" y="452.8" width="3" height="2.6" fill="#ffd97f"/><rect x="47" y="452.8" width="3" height="2.6" fill="#ffd97f"/><rect x="52" y="452.8" width="3" height="2.6" fill="#ffd97f"/><rect x="57" y="452.8" width="3" height="2.6" fill="#ffd97f"/><rect x="62" y="452.8" width="3" height="2.6" fill="#ffd97f"/><rect x="67" y="452.8" width="3" height="2.6" fill="#ffd97f"/><rect x="72" y="452.8" width="3" height="2.6" fill="#ffd97f"/><rect x="77" y="452.8" width="3" height="2.6" fill="#ffd97f"/><rect x="82" y="452.8" width="3" height="2.6" fill="#ffd97f"/><rect x="87" y="452.8" width="3" height="2.6" fill="#ffd97f"/><rect x="92" y="452.8" width="3" height="2.6" fill="#ffd97f"/><rect x="97" y="452.8" width="3" height="2.6" fill="#ffd97f"/><rect x="102" y="452.8" width="3" height="2.6" fill="#ffd97f"/><rect x="107" y="452.8" width="3" height="2.6" fill="#ffd97f"/><rect x="112" y="452.8" width="3" height="2.6" fill="#ffd97f"/><rect x="117" y="452.8" width="3" height="2.6" fill="#ffd97f"/><rect x="122" y="452.8" width="3" height="2.6" fill="#ffd97f"/><rect x="127" y="452.8" width="3" height="2.6" fill="#ffd97f"/><rect x="132" y="452.8" width="3" height="2.6" fill="#ffd97f"/><rect x="137" y="452.8" width="3" height="2.6" fill="#ffd97f"/><rect x="142" y="452.8" width="3" height="2.6" fill="#ffd97f"/><rect x="147" y="452.8" width="3" height="2.6" fill="#ffd97f"/><rect x="152" y="452.8" width="3" height="2.6" fill="#ffd97f"/><rect x="157" y="452.8" width="3" height="2.6" fill="#ffd97f"/><rect x="162" y="452.8" width="3" height="2.6" fill="#ffd97f"/><rect x="167" y="452.8" width="3" height="2.6" fill="#ffd97f"/><rect x="172" y="452.8" width="3" height="2.6" fill="#ffd97f"/><rect x="177" y="452.8" width="3" height="2.6" fill="#ffd97f"/><rect x="182" y="452.8" width="3" height="2.6" fill="#ffd97f"/><rect x="187" y="452.8" width="3" height="2.6" fill="#ffd97f"/><rect x="192" y="452.8" width="3" height="2.6" fill="#ffd97f"/><rect x="197" y="452.8" width="3" height="2.6" fill="#ffd97f"/><rect x="202" y="452.8" width="3" height="2.6" fill="#ffd97f"/><rect x="207" y="452.8" width="3" height="2.6" fill="#ffd97f"/><rect x="212" y="452.8" width="3" height="2.6" fill="#ffd97f"/><rect x="217" y="452.8" width="3" height="2.6" fill="#ffd97f"/><rect x="222" y="452.8" width="3" height="2.6" fill="#ffd97f"/><rect x="227" y="452.8" width="3" height="2.6" fill="#ffd97f"/><rect x="232" y="452.8" width="3" height="2.6" fill="#ffd97f"/><rect x="237" y="452.8" width="3" height="2.6" fill="#ffd97f"/><rect x="242" y="452.8" width="3" height="2.6" fill="#ffd97f"/><rect x="247" y="452.8" width="3" height="2.6" fill="#ffd97f"/><rect x="252" y="452.8" width="3" height="2.6" fill="#ffd97f"/><rect x="257" y="452.8" width="3" height="2.6" fill="#ffd97f"/><rect x="262" y="452.8" width="3" height="2.6" fill="#ffd97f"/><rect x="267" y="452.8" width="3" height="2.6" fill="#ffd97f"/><rect x="272" y="452.8" width="3" height="2.6" fill="#ffd97f"/><rect x="277" y="452.8" width="3" height="2.6" fill="#ffd97f"/><rect x="12" y="547.8" width="3" height="2.6" fill="#dcff85"/><rect x="17" y="547.8" width="3" height="2.6" fill="#dcff85"/><rect x="62" y="547.8" width="3" height="2.6" fill="#dcff85"/><rect x="67" y="547.8" width="3" height="2.6" fill="#dcff85"/><rect x="72" y="547.8" width="3" height="2.6" fill="#dcff85"/><rect x="77" y="547.8" width="3" height="2.6" fill="#dcff85"/><rect x="82" y="547.8" width="3" height="2.6" fill="#dcff85"/><rect x="87" y="547.8" width="3" height="2.6" fill="#dcff85"/><rect x="92" y="547.8" width="3" height="2.6" fill="#dcff85"/><rect x="97" y="547.8" width="3" height="2.6" fill="#dcff85"/><rect x="102" y="547.8" width="3" height="2.6" fill="#dcff85"/><rect x="107" y="547.8" width="3" height="2.6" fill="#dcff85"/><rect x="112" y="547.8" width="3" height="2.6" fill="#dcff85"/><rect x="117" y="547.8" width="3" height="2.6" fill="#dcff85"/><rect x="122" y="547.8" width="3" height="2.6" fill="#dcff85"/><rect x="127" y="547.8" width="3" height="2.6" fill="#dcff85"/><rect x="132" y="547.8" width="3" height="2.6" fill="#dcff85"/><rect x="137" y="547.8" width="3" height="2.6" fill="#dcff85"/><rect x="142" y="547.8" width="3" height="2.6" fill="#dcff85"/><rect x="147" y="547.8" width="3" height="2.6" fill="#dcff85"/><rect x="152" y="547.8" width="3" height="2.6" fill="#dcff85"/><rect x="157" y="547.8" width="3" height="2.6" fill="#dcff85"/><rect x="162" y="547.8" width="3" height="2.6" fill="#dcff85"/><rect x="167" y="547.8" width="3" height="2.6" fill="#dcff85"/><rect x="172" y="547.8" width="3" height="2.6" fill="#dcff85"/><rect x="177" y="547.8" width="3" height="2.6" fill="#dcff85"/><rect x="182" y="547.8" width="3" height="2.6" fill="#dcff85"/><rect x="187" y="547.8" width="3" height="2.6" fill="#dcff85"/><rect x="192" y="547.8" width="3" height="2.6" fill="#dcff85"/><rect x="197" y="547.8" width="3" height="2.6" fill="#dcff85"/><rect x="202" y="547.8" width="3" height="2.6" fill="#dcff85"/><rect x="207" y="547.8" width="3" height="2.6" fill="#dcff85"/><rect x="212" y="547.8" width="3" height="2.6" fill="#dcff85"/><rect x="217" y="547.8" width="3" height="2.6" fill="#dcff85"/><rect x="222" y="547.8" width="3" height="2.6" fill="#dcff85"/><rect x="227" y="547.8" width="3" height="2.6" fill="#dcff85"/><rect x="232" y="547.8" width="3" height="2.6" fill="#dcff85"/><rect x="237" y="547.8" width="3" height="2.6" fill="#dcff85"/><rect x="242" y="547.8" width="3" height="2.6" fill="#dcff85"/><rect x="247" y="547.8" width="3" height="2.6" fill="#dcff85"/><rect x="252" y="547.8" width="3" height="2.6" fill="#dcff85"/><rect x="257" y="547.8" width="3" height="2.6" fill="#dcff85"/><rect x="262" y="547.8" width="3" height="2.6" fill="#dcff85"/><rect x="267" y="547.8" width="3" height="2.6" fill="#dcff85"/><rect x="272" y="547.8" width="3" height="2.6" fill="#dcff85"/><rect x="277" y="547.8" width="3" height="2.6" fill="#dcff85"/><rect x="12" y="566.8" width="3" height="2.6" fill="#b9e986"/><rect x="17" y="566.8" width="3" height="2.6" fill="#b9e986"/><rect x="22" y="566.8" width="3" height="2.6" fill="#b9e986"/><rect x="27" y="566.8" width="3" height="2.6" fill="#b9e986"/><rect x="32" y="566.8" width="3" height="2.6" fill="#b9e986"/><rect x="37" y="566.8" width="3" height="2.6" fill="#b9e986"/><rect x="42" y="566.8" width="3" height="2.6" fill="#b9e986"/><rect x="47" y="566.8" width="3" height="2.6" fill="#b9e986"/><rect x="52" y="566.8" width="3" height="2.6" fill="#b9e986"/><rect x="57" y="566.8" width="3" height="2.6" fill="#b9e986"/><rect x="62" y="566.8" width="3" height="2.6" fill="#b9e986"/><rect x="67" y="566.8" width="3" height="2.6" fill="#b9e986"/><rect x="72" y="566.8" width="3" height="2.6" fill="#b9e986"/><rect x="77" y="566.8" width="3" height="2.6" fill="#b9e986"/><rect x="82" y="566.8" width="3" height="2.6" fill="#b9e986"/><rect x="87" y="566.8" width="3" height="2.6" fill="#b9e986"/><rect x="92" y="566.8" width="3" height="2.6" fill="#b9e986"/><rect x="97" y="566.8" width="3" height="2.6" fill="#b9e986"/><rect x="102" y="566.8" width="3" height="2.6" fill="#b9e986"/><rect x="107" y="566.8" width="3" height="2.6" fill="#b9e986"/><rect x="112" y="566.8" width="3" height="2.6" fill="#b9e986"/><rect x="117" y="566.8" width="3" height="2.6" fill="#b9e986"/><rect x="122" y="566.8" width="3" height="2.6" fill="#b9e986"/><rect x="127" y="566.8" width="3" height="2.6" fill="#b9e986"/><rect x="132" y="566.8" width="3" height="2.6" fill="#b9e986"/><rect x="137" y="566.8" width="3" height="2.6" fill="#b9e986"/><rect x="142" y="566.8" width="3" height="2.6" fill="#b9e986"/><rect x="147" y="566.8" width="3" height="2.6" fill="#b9e986"/><rect x="152" y="566.8" width="3" height="2.6" fill="#b9e986"/><rect x="157" y="566.8" width="3" height="2.6" fill="#b9e986"/><rect x="162" y="566.8" width="3" height="2.6" fill="#b9e986"/><rect x="167" y="566.8" width="3" height="2.6" fill="#b9e986"/><rect x="172" y="566.8" width="3" height="2.6" fill="#b9e986"/><rect x="177" y="566.8" width="3" height="2.6" fill="#b9e986"/><rect x="182" y="566.8" width="3" height="2.6" fill="#b9e986"/><rect x="187" y="566.8" width="3" height="2.6" fill="#b9e986"/><rect x="192" y="566.8" width="3" height="2.6" fill="#b9e986"/><rect x="197" y="566.8" width="3" height="2.6" fill="#b9e986"/><rect x="202" y="566.8" width="3" height="2.6" fill="#b9e986"/><rect x="207" y="566.8" width="3" height="2.6" fill="#b9e986"/><rect x="212" y="566.8" width="3" height="2.6" fill="#b9e986"/><rect x="217" y="566.8" width="3" height="2.6" fill="#b9e986"/><rect x="222" y="566.8" width="3" height="2.6" fill="#b9e986"/><rect x="227" y="566.8" width="3" height="2.6" fill="#b9e986"/><rect x="232" y="566.8" width="3" height="2.6" fill="#b9e986"/><rect x="237" y="566.8" width="3" height="2.6" fill="#b9e986"/><rect x="242" y="566.8" width="3" height="2.6" fill="#b9e986"/><rect x="247" y="566.8" width="3" height="2.6" fill="#b9e986"/><rect x="252" y="566.8" width="3" height="2.6" fill="#b9e986"/><rect x="257" y="566.8" width="3" height="2.6" fill="#b9e986"/><rect x="262" y="566.8" width="3" height="2.6" fill="#b9e986"/><rect x="267" y="566.8" width="3" height="2.6" fill="#b9e986"/><rect x="272" y="566.8" width="3" height="2.6" fill="#b9e986"/><rect x="277" y="566.8" width="3" height="2.6" fill="#b9e986"/><rect x="5" y="578" width="5" height="2" fill="#6c6c4b"/><rect x="10" y="578" width="270" height="2" fill="#383838"/><rect x="280" y="578" width="5" height="2" fill="#383838"/><rect x="285" y="331" width="5" height="2" fill="#383838"/><rect x="290" y="331" width="10" height="2" fill="#383838"/><rect x="340" y="331" width="150" height="2" fill="#383838"/><rect x="530" y="331" width="10" height="2" fill="#383838"/><rect x="570" y="331" width="10" height="2" fill="#383838"/><rect x="580" y="331" width="5" height="2" fill="#6c6c4b"/><rect shape-rendering="geometricPrecision" x="400" y="348.3" width="9.4" height="9.5" fill="#404040"/><rect shape-rendering="geometricPrecision" x="410" y="348.3" width="9.4" height="9.5" fill="#404040"/><rect shape-rendering="geometricPrecision" x="420" y="348.3" width="9.4" height="9.5" fill="#404040"/><rect shape-rendering="geometricPrecision" x="430" y="348.3" width="9.4" height="9.5" fill="#404040"/><rect shape-rendering="geometricPrecision" x="440" y="348.3" width="9.4" height="9.5" fill="#404040"/><rect shape-rendering="geometricPrecision" x="450" y="348.3" width="9.4" height="9.5" fill="#404040"/><rect shape-rendering="geometricPrecision" x="460" y="348.3" width="9.4" height="9.5" fill="#404040"/><rect shape-rendering="geometricPrecision" x="470" y="348.3" width="9.4" height="9.5" fill="#404040"/><rect shape-rendering="geometricPrecision" x="400" y="367.3" width="9.4" height="9.5" fill="#567339"/><rect shape-rendering="geometricPrecision" x="410" y="367.3" width="9.4" height="9.5" fill="#769a53"/><rect shape-rendering="geometricPrecision" x="420" y="367.3" width="9.4" height="9.5" fill="#97c26d"/><rect shape-rendering="geometricPrecision" x="430" y="367.3" width="9.4" height="9.5" fill="#b5e685"/><rect shape-rendering="geometricPrecision" x="440" y="367.3" width="9.4" height="9.5" fill="#beec85"/><rect shape-rendering="geometricPrecision" x="450" y="367.3" width="9.4" height="9.5" fill="#c8f285"/><rect shape-rendering="geometricPrecision" x="460" y="367.3" width="9.4" height="9.5" fill="#d3f985"/><rect shape-rendering="geometricPrecision" x="470" y="367.3" width="9.4" height="9.5" fill="#404040"/><rect x="285" y="407" width="5" height="2" fill="#383838"/><rect x="290" y="407" width="10" height="2" fill="#383838"/><rect x="330" y="407" width="160" height="2" fill="#383838"/><rect x="530" y="407" width="10" height="2" fill="#383838"/><rect x="570" y="407" width="10" height="2" fill="#383838"/><rect x="580" y="407" width="5" height="2" fill="#6c6c4b"/><rect shape-rendering="geometricPrecision" x="400" y="424.3" width="9.4" height="9.5" fill="#404040"/><rect shape-rendering="geometricPrecision" x="410" y="424.3" width="9.4" height="9.5" fill="#404040"/><rect shape-rendering="geometricPrecision" x="420" y="424.3" width="9.4" height="9.5" fill="#404040"/><rect shape-rendering="geometricPrecision" x="430" y="424.3" width="9.4" height="9.5" fill="#404040"/><rect shape-rendering="geometricPrecision" x="440" y="424.3" width="9.4" height="9.5" fill="#404040"/><rect shape-rendering="geometricPrecision" x="450" y="424.3" width="9.4" height="9.5" fill="#404040"/><rect shape-rendering="geometricPrecision" x="460" y="424.3" width="9.4" height="9.5" fill="#404040"/><rect shape-rendering="geometricPrecision" x="470" y="424.3" width="9.4" height="9.5" fill="#404040"/><rect shape-rendering="geometricPrecision" x="400" y="443.3" width="9.4" height="9.5" fill="#567339"/><rect shape-rendering="geometricPrecision" x="410" y="443.3" width="9.4" height="9.5" fill="#769a53"/><rect shape-rendering="geometricPrecision" x="420" y="443.3" width="9.4" height="9.5" fill="#97c26d"/><rect shape-rendering="geometricPrecision" x="430" y="443.3" width="9.4" height="9.5" fill="#b5e685"/><rect shape-rendering="geometricPrecision" x="440" y="443.3" width="9.4" height="9.5" fill="#beec85"/><rect shape-rendering="geometricPrecision" x="450" y="443.3" width="9.4" height="9.5" fill="#c8f285"/><rect shape-rendering="geometricPrecision" x="460" y="443.3" width="9.4" height="9.5" fill="#d3f985"/><rect shape-rendering="geometricPrecision" x="470" y="443.3" width="9.4" height="9.5" fill="#dcff85"/><rect x="285" y="483" width="5" height="2" fill="#383838"/><rect x="290" y="483" width="290" height="2" fill="#383838"/><rect x="580" y="483" width="5" height="2" fill="#6c6c4b"/><path shape-rendering="geometricPrecision" d="M5 665L5 658.5A3.5 3.5 0 0 1 8.5 655L10 655" fill="none" stroke="#5c588d" stroke-width="2"/><rect x="10" y="654" width="10" height="2" fill="#5c588d"/><rect x="20" y="654" width="6" height="2" fill="#5c588d"/><rect x="24" y="654" width="2" height="11" fill="#5c588d"/><rect x="74" y="654" width="6" height="2" fill="#5c588d"/><rect x="74" y="654" width="2" height="11" fill="#5c588d"/><rect x="80" y="654" width="6" height="2" fill="#5c588d"/><rect x="84" y="654" width="2" height="11" fill="#5c588d"/><rect x="214" y="654" width="6" height="2" fill="#5c588d"/><rect x="214" y="654" width="2" height="11" fill="#5c588d"/><rect x="220" y="654" width="10" height="2" fill="#5c588d"/><rect x="230" y="654" width="10" height="2" fill="#5c588d"/><rect x="240" y="654" width="10" height="2" fill="#5c588d"/><rect x="250" y="654" width="10" height="2" fill="#5c588d"/><rect x="260" y="654" width="6" height="2" fill="#5c588d"/><rect x="264" y="654" width="2" height="11" fill="#5c588d"/><rect x="314" y="654" width="6" height="2" fill="#5c588d"/><rect x="314" y="654" width="2" height="11" fill="#5c588d"/><rect x="320" y="654" width="6" height="2" fill="#5c588d"/><rect x="324" y="654" width="2" height="11" fill="#5c588d"/><rect x="374" y="654" width="6" height="2" fill="#5c588d"/><rect x="374" y="654" width="2" height="11" fill="#5c588d"/><rect x="380" y="654" width="6" height="2" fill="#5c588d"/><rect x="384" y="654" width="2" height="11" fill="#5c588d"/><rect x="434" y="654" width="6" height="2" fill="#5c588d"/><rect x="434" y="654" width="2" height="11" fill="#5c588d"/><rect x="440" y="654" width="6" height="2" fill="#5c588d"/><rect x="444" y="654" width="2" height="11" fill="#5c588d"/><rect x="574" y="654" width="6" height="2" fill="#5c588d"/><rect x="574" y="654" width="2" height="11" fill="#5c588d"/><path shape-rendering="geometricPrecision" d="M585 665L585 658.5A3.5 3.5 0 0 0 581.5 655L580 655" fill="none" stroke="#5c588d" stroke-width="2"/><rect x="4" y="665" width="2" height="247" fill="#5c588d"/><rect x="584" y="665" width="2" height="247" fill="#5c588d"/><path shape-rendering="geometricPrecision" d="M5 912L5 917.5A3.5 3.5 0 0 0 8.5 921L10 921" fill="none" stroke="#5c588d" stroke-width="2"/><path shape-rendering="geometricPrecision" d="M585 912L585 917.5A3.5 3.5 0 0 1 581.5 921L580 921" fill="none" stroke="#5c588d" stroke-width="2"/><rect x="10" y="920" width="570" height="2" fill="#5c588d"/><rect x="12" y="775.8" width="3" height="2.6" fill="#5145c8"/><rect x="17" y="775.8" width="3" height="2.6" fill="#5145c8"/><rect x="22" y="775.8" width="3" height="2.6" fill="#5145c8"/><rect x="27" y="775.8" width="3" height="2.6" fill="#5145c8"/><rect x="32" y="775.8" width="3" height="2.6" fill="#5145c8"/><rect x="37" y="775.8" width="3" height="2.6" fill="#5145c8"/><rect x="42" y="775.8" width="3" height="2.6" fill="#5145c8"/><rect x="47" y="775.8" width="3" height="2.6" fill="#5145c8"/><rect x="52" y="775.8" width="3" height="2.6" fill="#5145c8"/><rect x="57" y="775.8" width="3" height="2.6" fill="#5145c8"/><rect x="62" y="775.8" width="3" height="2.6" fill="#5145c8"/><rect x="67" y="775.8" width="3" height="2.6" fill="#5145c8"/><rect x="72" y="775.8" width="3" height="2.6" fill="#5145c8"/><rect x="77" y="775.8" width="3" height="2.6" fill="#5145c8"/><rect x="82" y="775.8" width="3" height="2.6" fill="#5145c8"/><rect x="87" y="775.8" width="3" height="2.6" fill="#5145c8"/><rect x="92" y="775.8" width="3" height="2.6" fill="#5145c8"/><rect x="97" y="775.8" width="3" height="2.6" fill="#5145c8"/><rect x="102" y="775.8" width="3" height="2.6" fill="#5145c8"/><rect x="107" y="775.8" width="3" height="2.6" fill="#5145c8"/><rect x="112" y="775.8" width="3" height="2.6" fill="#5145c8"/><rect x="117" y="775.8" width="3" height="2.6" fill="#5145c8"/><rect x="122" y="775.8" width="3" height="2.6" fill="#5145c8"/><rect x="127" y="775.8" width="3" height="2.6" fill="#5145c8"/><rect x="132" y="775.8" width="3" height="2.6" fill="#5145c8"/><rect x="137" y="775.8" width="3" height="2.6" fill="#5145c8"/><rect x="142" y="775.8" width="3" height="2.6" fill="#5145c8"/><rect x="147" y="775.8" width="3" height="2.6" fill="#5145c8"/><rect x="152" y="775.8" width="3" height="2.6" fill="#5145c8"/><rect x="157" y="775.8" width="3" height="2.6" fill="#5145c8"/><rect x="162" y="775.8" width="3" height="2.6" fill="#5145c8"/><rect x="167" y="775.8" width="3" height="2.6" fill="#5145c8"/><rect x="172" y="775.8" width="3" height="2.6" fill="#5145c8"/><rect x="177" y="775.8" width="3" height="2.6" fill="#5145c8"/><rect x="182" y="775.8" width="3" height="2.6" fill="#5145c8"/><rect x="187" y="775.8" width="3" height="2.6" fill="#5145c8"/><rect x="192" y="775.8" width="3" height="2.6" fill="#5145c8"/><rect x="197" y="775.8" width="3" height="2.6" fill="#5145c8"/><rect x="202" y="775.8" width="3" height="2.6" fill="#5145c8"/><rect x="207" y="775.8" width="3" height="2.6" fill="#5145c8"/><rect x="212" y="775.8" width="3" height="2.6" fill="#5145c8"/><rect x="217" y="775.8" width="3" height="2.6" fill="#5145c8"/><rect x="222" y="775.8" width="3" height="2.6" fill="#5145c8"/><rect x="227" y="775.8" width="3" height="2.6" fill="#5145c8"/><rect x="232" y="775.8" width="3" height="2.6" fill="#5145c8"/><rect x="237" y="775.8" width="3" height="2.6" fill="#5145c8"/><rect x="242" y="775.8" width="3" height="2.6" fill="#5145c8"/><rect x="247" y="775.8" width="3" height="2.6" fill="#5145c8"/><rect x="252" y="775.8" width="3" height="2.6" fill="#5145c8"/><rect x="257" y="775.8" width="3" height="2.6" fill="#5145c8"/><rect x="262" y="775.8" width="3" height="2.6" fill="#5145c8"/><rect x="267" y="775.8" width="3" height="2.6" fill="#5145c8"/><rect x="272" y="775.8" width="3" height="2.6" fill="#5145c8"/><rect x="277" y="775.8" width="3" height="2.6" fill="#5145c8"/><rect x="282" y="775.8" width="3" height="2.6" fill="#5145c8"/><rect x="287" y="775.8" width="3" height="2.6" fill="#5145c8"/><rect x="292" y="775.8" width="3" height="2.6" fill="#5145c8"/><rect x="297" y="775.8" width="3" height="2.6" fill="#5145c8"/><rect x="302" y="775.8" width="3" height="2.6" fill="#5145c8"/><rect x="307" y="775.8" width="3" height="2.6" fill="#5145c8"/><rect x="12" y="781.3" width="3" height="2.6" fill="#97359b"/><rect x="17" y="781.3" width="3" height="2.6" fill="#97359b"/><rect x="22" y="781.3" width="3" height="2.6" fill="#97359b"/><rect x="27" y="781.3" width="3" height="2.6" fill="#97359b"/><rect x="32" y="781.3" width="3" height="2.6" fill="#97359b"/><rect x="37" y="781.3" width="3" height="2.6" fill="#97359b"/><rect x="42" y="781.3" width="3" height="2.6" fill="#97359b"/><rect x="47" y="781.3" width="3" height="2.6" fill="#97359b"/><rect x="52" y="781.3" width="3" height="2.6" fill="#97359b"/><rect x="57" y="781.3" width="3" height="2.6" fill="#97359b"/><rect x="62" y="781.3" width="3" height="2.6" fill="#97359b"/><rect x="67" y="781.3" width="3" height="2.6" fill="#97359b"/><rect x="72" y="781.3" width="3" height="2.6" fill="#97359b"/><rect x="77" y="781.3" width="3" height="2.6" fill="#97359b"/><rect x="82" y="781.3" width="3" height="2.6" fill="#97359b"/><rect x="87" y="781.3" width="3" height="2.6" fill="#97359b"/><rect x="92" y="781.3" width="3" height="2.6" fill="#97359b"/><rect x="97" y="781.3" width="3" height="2.6" fill="#97359b"/><rect x="102" y="781.3" width="3" height="2.6" fill="#97359b"/><rect x="107" y="781.3" width="3" height="2.6" fill="#97359b"/><rect x="112" y="781.3" width="3" height="2.6" fill="#97359b"/><rect x="117" y="781.3" width="3" height="2.6" fill="#97359b"/><rect x="122" y="781.3" width="3" height="2.6" fill="#97359b"/><rect x="127" y="781.3" width="3" height="2.6" fill="#97359b"/><rect x="132" y="781.3" width="3" height="2.6" fill="#97359b"/><rect x="137" y="781.3" width="3" height="2.6" fill="#97359b"/><rect x="142" y="781.3" width="3" height="2.6" fill="#97359b"/><rect x="147" y="781.3" width="3" height="2.6" fill="#97359b"/><rect x="152" y="781.3" width="3" height="2.6" fill="#97359b"/><rect x="157" y="781.3" width="3" height="2.6" fill="#97359b"/><rect x="162" y="781.3" width="3" height="2.6" fill="#97359b"/><rect x="167" y="781.3" width="3" height="2.6" fill="#97359b"/><rect x="172" y="781.3" width="3" height="2.6" fill="#97359b"/><rect x="177" y="781.3" width="3" height="2.6" fill="#97359b"/><rect x="182" y="781.3" width="3" height="2.6" fill="#97359b"/><rect x="187" y="781.3" width="3" height="2.6" fill="#97359b"/><rect x="192" y="781.3" width="3" height="2.6" fill="#97359b"/><rect x="197" y="781.3" width="3" height="2.6" fill="#97359b"/><rect x="202" y="781.3" width="3" height="2.6" fill="#97359b"/><rect x="207" y="781.3" width="3" height="2.6" fill="#97359b"/><rect x="212" y="781.3" width="3" height="2.6" fill="#97359b"/><rect x="217" y="781.3" width="3" height="2.6" fill="#97359b"/><rect x="222" y="781.3" width="3" height="2.6" fill="#97359b"/><rect x="227" y="781.3" width="3" height="2.6" fill="#97359b"/><rect x="232" y="781.3" width="3" height="2.6" fill="#97359b"/><rect x="237" y="781.3" width="3" height="2.6" fill="#97359b"/><rect x="242" y="781.3" width="3" height="2.6" fill="#97359b"/><rect x="247" y="781.3" width="3" height="2.6" fill="#97359b"/><rect x="252" y="781.3" width="3" height="2.6" fill="#97359b"/><rect x="257" y="781.3" width="3" height="2.6" fill="#97359b"/><rect x="262" y="781.3" width="3" height="2.6" fill="#97359b"/><rect x="267" y="781.3" width="3" height="2.6" fill="#97359b"/><rect x="272" y="781.3" width="3" height="2.6" fill="#97359b"/><rect x="277" y="781.3" width="3" height="2.6" fill="#97359b"/><rect x="282" y="781.3" width="3" height="2.6" fill="#97359b"/><rect x="287" y="781.3" width="3" height="2.6" fill="#97359b"/><rect x="292" y="781.3" width="3" height="2.6" fill="#97359b"/><rect x="297" y="781.3" width="3" height="2.6" fill="#97359b"/><rect x="302" y="781.3" width="3" height="2.6" fill="#97359b"/><rect x="307" y="781.3" width="3" height="2.6" fill="#97359b"/><path shape-rendering="geometricPrecision" d="M315 722L315 715.5A3.5 3.5 0 0 1 318.5 712L320 712" fill="none" stroke="#383838" stroke-width="2"/><rect x="320" y="711" width="10" height="2" fill="#383838"/><rect x="330" y="711" width="6" height="2" fill="#383838"/><rect x="334" y="711" width="2" height="11" fill="#383838"/><rect x="424" y="711" width="6" height="2" fill="#383838"/><rect x="424" y="711" width="2" height="11" fill="#383838"/><rect x="430" y="711" width="140" height="2" fill="#383838"/><path shape-rendering="geometricPrecision" d="M575 722L575 715.5A3.5 3.5 0 0 0 571.5 712L570 712" fill="none" stroke="#383838" stroke-width="2"/><path shape-rendering="geometricPrecision" d="M315 855L315 860.5A3.5 3.5 0 0 0 318.5 864L320 864" fill="none" stroke="#383838" stroke-width="2"/><rect x="320" y="863" width="10" height="2" fill="#383838"/><rect x="330" y="863" width="6" height="2" fill="#383838"/><rect x="334" y="855" width="2" height="10" fill="#383838"/><rect x="404" y="863" width="6" height="2" fill="#383838"/><rect x="404" y="855" width="2" height="10" fill="#383838"/><rect x="410" y="863" width="160" height="2" fill="#383838"/><path shape-rendering="geometricPrecision" d="M575 855L575 860.5A3.5 3.5 0 0 1 571.5 864L570 864" fill="none" stroke="#383838" stroke-width="2"/><rect x="314" y="722" width="2" height="133" fill="#383838"/><rect x="574" y="722" width="2" height="133" fill="#383838"/><path shape-rendering="geometricPrecision" d="M320.2 727.8H329.8L325 737Z" fill="#cccccc"/><path shape-rendering="geometricPrecision" d="M320.2 746.8H329.8L325 756Z" fill="#cccccc"/><path shape-rendering="geometricPrecision" d="M320.2 765.8H329.8L325 775Z" fill="#cccccc"/><path shape-rendering="geometricPrecision" d="M320.2 813.8H329.8L325 804.6Z" fill="#cccccc"/><path shape-rendering="geometricPrecision" d="M320.2 832.8H329.8L325 823.6Z" fill="#cccccc"/><path shape-rendering="geometricPrecision" d="M320.2 851.8H329.8L325 842.6Z" fill="#cccccc"/><path shape-rendering="geometricPrecision" d="M595 323L595 316.5A3.5 3.5 0 0 1 598.5 313L600 313" fill="none" stroke="#805252" stroke-width="2"/><rect x="600" y="312" width="10" height="2" fill="#805252"/><rect x="610" y="312" width="6" height="2" fill="#805252"/><rect x="614" y="312" width="2" height="11" fill="#805252"/><rect x="674" y="312" width="6" height="2" fill="#805252"/><rect x="674" y="312" width="2" height="11" fill="#805252"/><rect x="680" y="312" width="6" height="2" fill="#805252"/><rect x="684" y="312" width="2" height="11" fill="#805252"/><rect x="754" y="312" width="6" height="2" fill="#805252"/><rect x="754" y="312" width="2" height="11" fill="#805252"/><rect x="760" y="312" width="130" height="2" fill="#805252"/><rect x="890" y="312" width="6" height="2" fill="#805252"/><rect x="894" y="312" width="2" height="11" fill="#805252"/><rect x="984" y="312" width="6" height="2" fill="#805252"/><rect x="984" y="312" width="2" height="11" fill="#805252"/><rect x="990" y="312" width="6" height="2" fill="#805252"/><rect x="994" y="312" width="2" height="11" fill="#805252"/><rect x="1074" y="312" width="6" height="2" fill="#805252"/><rect x="1074" y="312" width="2" height="11" fill="#805252"/><rect x="1080" y="312" width="6" height="2" fill="#805252"/><rect x="1084" y="312" width="2" height="11" fill="#805252"/><rect x="1134" y="312" width="6" height="2" fill="#805252"/><rect x="1134" y="312" width="2" height="11" fill="#805252"/><rect x="1140" y="312" width="6" height="2" fill="#805252"/><rect x="1144" y="312" width="2" height="11" fill="#805252"/><rect x="1274" y="312" width="6" height="2" fill="#805252"/><rect x="1274" y="312" width="2" height="11" fill="#805252"/><rect x="1280" y="312" width="10" height="2" fill="#805252"/><path shape-rendering="geometricPrecision" d="M1295 323L1295 316.5A3.5 3.5 0 0 0 1291.5 313L1290 313" fill="none" stroke="#805252" stroke-width="2"/><rect x="594" y="323" width="2" height="589" fill="#805252"/><rect x="1294" y="323" width="2" height="589" fill="#805252"/><path shape-rendering="geometricPrecision" d="M595 912L595 917.5A3.5 3.5 0 0 0 598.5 921L600 921" fill="none" stroke="#805252" stroke-width="2"/><rect x="600" y="920" width="6" height="2" fill="#805252"/><rect x="604" y="912" width="2" height="10" fill="#805252"/><path d="M615 927V917M612 920.5L615 917L618 920.5" fill="none" stroke="#555555" stroke-width="1.6" shape-rendering="geometricPrecision"/><path d="M705 917V927M702 923.5L705 927L708 923.5" fill="none" stroke="#b54040" stroke-width="1.6" shape-rendering="geometricPrecision"/><rect x="714" y="920" width="6" height="2" fill="#805252"/><rect x="714" y="912" width="2" height="10" fill="#805252"/><rect x="720" y="920" width="6" height="2" fill="#805252"/><rect x="724" y="912" width="2" height="10" fill="#805252"/><path d="M788.5 919V924.5H781.5M784.5 921.5L781.5 924.5L784.5 927.5" fill="none" stroke="#404040" stroke-width="1.6" shape-rendering="geometricPrecision"/><rect x="794" y="920" width="6" height="2" fill="#805252"/><rect x="794" y="912" width="2" height="10" fill="#805252"/><rect x="800" y="920" width="6" height="2" fill="#805252"/><rect x="804" y="912" width="2" height="10" fill="#805252"/><rect x="904" y="920" width="6" height="2" fill="#805252"/><rect x="904" y="912" width="2" height="10" fill="#805252"/><rect x="910" y="920" width="6" height="2" fill="#805252"/><rect x="914" y="912" width="2" height="10" fill="#805252"/><rect x="964" y="920" width="6" height="2" fill="#805252"/><rect x="964" y="912" width="2" height="10" fill="#805252"/><rect x="970" y="920" width="6" height="2" fill="#805252"/><rect x="974" y="912" width="2" height="10" fill="#805252"/><rect x="1054" y="920" width="6" height="2" fill="#805252"/><rect x="1054" y="912" width="2" height="10" fill="#805252"/><rect x="1060" y="920" width="160" height="2" fill="#805252"/><rect x="1220" y="920" width="6" height="2" fill="#805252"/><rect x="1224" y="912" width="2" height="10" fill="#805252"/><rect x="1284" y="920" width="6" height="2" fill="#805252"/><rect x="1284" y="912" width="2" height="10" fill="#805252"/><path shape-rendering="geometricPrecision" d="M1295 912L1295 917.5A3.5 3.5 0 0 1 1291.5 921L1290 921" fill="none" stroke="#805252" stroke-width="2"/><path d="M1285 338V328M1282 331.5L1285 328L1288 331.5" fill="none" stroke="#cccccc" stroke-width="1.6" shape-rendering="geometricPrecision"/><rect x="1280" y="342" width="10" height="19" fill="#cccccc"/><path d="M1285 898V908M1282 904.5L1285 908L1288 904.5" fill="none" stroke="#cccccc" stroke-width="1.6" shape-rendering="geometricPrecision"/><rect x="1172" y="357.8" width="3" height="2.6" fill="#404040"/><rect x="1177" y="357.8" width="3" height="2.6" fill="#404040"/><rect x="1182" y="357.8" width="3" height="2.6" fill="#404040"/><rect x="1187" y="357.8" width="3" height="2.6" fill="#404040"/><rect x="1192" y="357.8" width="3" height="2.6" fill="#404040"/><rect x="1197" y="357.8" width="3" height="2.6" fill="#404040"/><rect x="1202" y="357.8" width="3" height="2.6" fill="#80d0a3"/><rect x="1217" y="357.8" width="3" height="2.6" fill="#80d0a3"/><rect x="1172" y="376.8" width="3" height="2.6" fill="#7ecba0"/><rect x="1182" y="376.8" width="3" height="2.6" fill="#404040"/><rect x="1187" y="376.8" width="3" height="2.6" fill="#404040"/><rect x="1192" y="376.8" width="3" height="2.6" fill="#404040"/><rect x="1197" y="376.8" width="3" height="2.6" fill="#404040"/><rect x="1202" y="376.8" width="3" height="2.6" fill="#7ecba0"/><rect x="1207" y="376.8" width="3" height="2.6" fill="#7ecba0"/><rect x="1212" y="376.8" width="3" height="2.6" fill="#7ecba0"/><rect x="1217" y="376.8" width="3" height="2.6" fill="#7ecba0"/><rect x="1172" y="395.8" width="3" height="2.6" fill="#404040"/><rect x="1177" y="395.8" width="3" height="2.6" fill="#404040"/><rect x="1182" y="395.8" width="3" height="2.6" fill="#404040"/><rect x="1187" y="395.8" width="3" height="2.6" fill="#404040"/><rect x="1192" y="395.8" width="3" height="2.6" fill="#404040"/><rect x="1197" y="395.8" width="3" height="2.6" fill="#404040"/><rect x="1202" y="395.8" width="3" height="2.6" fill="#404040"/><rect x="1207" y="395.8" width="3" height="2.6" fill="#404040"/><rect x="1212" y="395.8" width="3" height="2.6" fill="#404040"/><rect x="1217" y="395.8" width="3" height="2.6" fill="#404040"/><rect x="1172" y="414.8" width="3" height="2.6" fill="#404040"/><rect x="1177" y="414.8" width="3" height="2.6" fill="#404040"/><rect x="1182" y="414.8" width="3" height="2.6" fill="#404040"/><rect x="1187" y="414.8" width="3" height="2.6" fill="#404040"/><rect x="1192" y="414.8" width="3" height="2.6" fill="#404040"/><rect x="1197" y="414.8" width="3" height="2.6" fill="#404040"/><rect x="1202" y="414.8" width="3" height="2.6" fill="#404040"/><rect x="1207" y="414.8" width="3" height="2.6" fill="#404040"/><rect x="1212" y="414.8" width="3" height="2.6" fill="#404040"/><rect x="1217" y="414.8" width="3" height="2.6" fill="#404040"/><rect x="1172" y="433.8" width="3" height="2.6" fill="#404040"/><rect x="1177" y="433.8" width="3" height="2.6" fill="#404040"/><rect x="1182" y="433.8" width="3" height="2.6" fill="#404040"/><rect x="1187" y="433.8" width="3" height="2.6" fill="#404040"/><rect x="1192" y="433.8" width="3" height="2.6" fill="#404040"/><rect x="1197" y="433.8" width="3" height="2.6" fill="#404040"/><rect x="1202" y="433.8" width="3" height="2.6" fill="#404040"/><rect x="1207" y="433.8" width="3" height="2.6" fill="#404040"/><rect x="1212" y="433.8" width="3" height="2.6" fill="#404040"/><rect x="1217" y="433.8" width="3" height="2.6" fill="#404040"/><rect x="1172" y="452.8" width="3" height="2.6" fill="#404040"/><rect x="1177" y="452.8" width="3" height="2.6" fill="#404040"/><rect x="1182" y="452.8" width="3" height="2.6" fill="#404040"/><rect x="1187" y="452.8" width="3" height="2.6" fill="#404040"/><rect x="1192" y="452.8" width="3" height="2.6" fill="#404040"/><rect x="1197" y="452.8" width="3" height="2.6" fill="#404040"/><rect x="1202" y="452.8" width="3" height="2.6" fill="#76b993"/><rect x="1212" y="452.8" width="3" height="2.6" fill="#404040"/><rect x="1217" y="452.8" width="3" height="2.6" fill="#404040"/><rect x="1172" y="471.8" width="3" height="2.6" fill="#404040"/><rect x="1177" y="471.8" width="3" height="2.6" fill="#404040"/><rect x="1182" y="471.8" width="3" height="2.6" fill="#404040"/><rect x="1187" y="471.8" width="3" height="2.6" fill="#404040"/><rect x="1192" y="471.8" width="3" height="2.6" fill="#404040"/><rect x="1197" y="471.8" width="3" height="2.6" fill="#404040"/><rect x="1202" y="471.8" width="3" height="2.6" fill="#404040"/><rect x="1207" y="471.8" width="3" height="2.6" fill="#404040"/><rect x="1212" y="471.8" width="3" height="2.6" fill="#404040"/><rect x="1217" y="471.8" width="3" height="2.6" fill="#404040"/><rect x="1172" y="490.8" width="3" height="2.6" fill="#404040"/><rect x="1177" y="490.8" width="3" height="2.6" fill="#404040"/><rect x="1182" y="490.8" width="3" height="2.6" fill="#404040"/><rect x="1187" y="490.8" width="3" height="2.6" fill="#404040"/><rect x="1192" y="490.8" width="3" height="2.6" fill="#404040"/><rect x="1197" y="490.8" width="3" height="2.6" fill="#404040"/><rect x="1202" y="490.8" width="3" height="2.6" fill="#404040"/><rect x="1207" y="490.8" width="3" height="2.6" fill="#404040"/><rect x="1212" y="490.8" width="3" height="2.6" fill="#404040"/><rect x="1217" y="490.8" width="3" height="2.6" fill="#404040"/><rect x="1172" y="509.8" width="3" height="2.6" fill="#404040"/><rect x="1177" y="509.8" width="3" height="2.6" fill="#404040"/><rect x="1182" y="509.8" width="3" height="2.6" fill="#404040"/><rect x="1187" y="509.8" width="3" height="2.6" fill="#404040"/><rect x="1192" y="509.8" width="3" height="2.6" fill="#404040"/><rect x="1197" y="509.8" width="3" height="2.6" fill="#404040"/><rect x="1202" y="509.8" width="3" height="2.6" fill="#404040"/><rect x="1207" y="509.8" width="3" height="2.6" fill="#404040"/><rect x="1212" y="509.8" width="3" height="2.6" fill="#404040"/><rect x="1217" y="509.8" width="3" height="2.6" fill="#404040"/><rect x="1172" y="528.8" width="3" height="2.6" fill="#404040"/><rect x="1177" y="528.8" width="3" height="2.6" fill="#404040"/><rect x="1182" y="528.8" width="3" height="2.6" fill="#404040"/><rect x="1187" y="528.8" width="3" height="2.6" fill="#404040"/><rect x="1192" y="528.8" width="3" height="2.6" fill="#404040"/><rect x="1197" y="528.8" width="3" height="2.6" fill="#404040"/><rect x="1202" y="528.8" width="3" height="2.6" fill="#404040"/><rect x="1207" y="528.8" width="3" height="2.6" fill="#404040"/><rect x="1212" y="528.8" width="3" height="2.6" fill="#404040"/><rect x="1217" y="528.8" width="3" height="2.6" fill="#404040"/><rect x="1172" y="547.8" width="3" height="2.6" fill="#404040"/><rect x="1177" y="547.8" width="3" height="2.6" fill="#404040"/><rect x="1182" y="547.8" width="3" height="2.6" fill="#404040"/><rect x="1187" y="547.8" width="3" height="2.6" fill="#404040"/><rect x="1192" y="547.8" width="3" height="2.6" fill="#404040"/><rect x="1197" y="547.8" width="3" height="2.6" fill="#404040"/><rect x="1202" y="547.8" width="3" height="2.6" fill="#404040"/><rect x="1207" y="547.8" width="3" height="2.6" fill="#404040"/><rect x="1212" y="547.8" width="3" height="2.6" fill="#404040"/><rect x="1217" y="547.8" width="3" height="2.6" fill="#404040"/><rect x="1172" y="566.8" width="3" height="2.6" fill="#404040"/><rect x="1177" y="566.8" width="3" height="2.6" fill="#404040"/><rect x="1182" y="566.8" width="3" height="2.6" fill="#404040"/><rect x="1187" y="566.8" width="3" height="2.6" fill="#404040"/><rect x="1192" y="566.8" width="3" height="2.6" fill="#404040"/><rect x="1197" y="566.8" width="3" height="2.6" fill="#404040"/><rect x="1202" y="566.8" width="3" height="2.6" fill="#404040"/><rect x="1207" y="566.8" width="3" height="2.6" fill="#404040"/><rect x="1212" y="566.8" width="3" height="2.6" fill="#404040"/><rect x="1217" y="566.8" width="3" height="2.6" fill="#404040"/><rect x="1172" y="585.8" width="3" height="2.6" fill="#404040"/><rect x="1177" y="585.8" width="3" height="2.6" fill="#404040"/><rect x="1182" y="585.8" width="3" height="2.6" fill="#404040"/><rect x="1187" y="585.8" width="3" height="2.6" fill="#404040"/><rect x="1192" y="585.8" width="3" height="2.6" fill="#404040"/><rect x="1197" y="585.8" width="3" height="2.6" fill="#404040"/><rect x="1202" y="585.8" width="3" height="2.6" fill="#404040"/><rect x="1207" y="585.8" width="3" height="2.6" fill="#404040"/><rect x="1212" y="585.8" width="3" height="2.6" fill="#404040"/><rect x="1217" y="585.8" width="3" height="2.6" fill="#404040"/><rect x="1172" y="604.8" width="3" height="2.6" fill="#404040"/><rect x="1177" y="604.8" width="3" height="2.6" fill="#404040"/><rect x="1182" y="604.8" width="3" height="2.6" fill="#404040"/><rect x="1187" y="604.8" width="3" height="2.6" fill="#404040"/><rect x="1192" y="604.8" width="3" height="2.6" fill="#404040"/><rect x="1197" y="604.8" width="3" height="2.6" fill="#404040"/><rect x="1202" y="604.8" width="3" height="2.6" fill="#404040"/><rect x="1207" y="604.8" width="3" height="2.6" fill="#404040"/><rect x="1212" y="604.8" width="3" height="2.6" fill="#404040"/><rect x="1217" y="604.8" width="3" height="2.6" fill="#404040"/><rect x="1172" y="623.8" width="3" height="2.6" fill="#404040"/><rect x="1177" y="623.8" width="3" height="2.6" fill="#404040"/><rect x="1182" y="623.8" width="3" height="2.6" fill="#404040"/><rect x="1187" y="623.8" width="3" height="2.6" fill="#404040"/><rect x="1192" y="623.8" width="3" height="2.6" fill="#404040"/><rect x="1197" y="623.8" width="3" height="2.6" fill="#404040"/><rect x="1202" y="623.8" width="3" height="2.6" fill="#404040"/><rect x="1207" y="623.8" width="3" height="2.6" fill="#404040"/><rect x="1212" y="623.8" width="3" height="2.6" fill="#404040"/><rect x="1217" y="623.8" width="3" height="2.6" fill="#404040"/><rect x="1172" y="642.8" width="3" height="2.6" fill="#404040"/><rect x="1177" y="642.8" width="3" height="2.6" fill="#404040"/><rect x="1182" y="642.8" width="3" height="2.6" fill="#404040"/><rect x="1187" y="642.8" width="3" height="2.6" fill="#404040"/><rect x="1192" y="642.8" width="3" height="2.6" fill="#404040"/><rect x="1197" y="642.8" width="3" height="2.6" fill="#404040"/><rect x="1202" y="642.8" width="3" height="2.6" fill="#404040"/><rect x="1207" y="642.8" width="3" height="2.6" fill="#404040"/><rect x="1212" y="642.8" width="3" height="2.6" fill="#404040"/><rect x="1217" y="642.8" width="3" height="2.6" fill="#404040"/><rect x="1172" y="661.8" width="3" height="2.6" fill="#404040"/><rect x="1177" y="661.8" width="3" height="2.6" fill="#404040"/><rect x="1182" y="661.8" width="3" height="2.6" fill="#404040"/><rect x="1187" y="661.8" width="3" height="2.6" fill="#404040"/><rect x="1192" y="661.8" width="3" height="2.6" fill="#404040"/><rect x="1197" y="661.8" width="3" height="2.6" fill="#404040"/><rect x="1202" y="661.8" width="3" height="2.6" fill="#404040"/><rect x="1207" y="661.8" width="3" height="2.6" fill="#404040"/><rect x="1212" y="661.8" width="3" height="2.6" fill="#404040"/><rect x="1217" y="661.8" width="3" height="2.6" fill="#404040"/><rect x="1172" y="680.8" width="3" height="2.6" fill="#404040"/><rect x="1177" y="680.8" width="3" height="2.6" fill="#404040"/><rect x="1182" y="680.8" width="3" height="2.6" fill="#404040"/><rect x="1187" y="680.8" width="3" height="2.6" fill="#404040"/><rect x="1192" y="680.8" width="3" height="2.6" fill="#404040"/><rect x="1197" y="680.8" width="3" height="2.6" fill="#404040"/><rect x="1202" y="680.8" width="3" height="2.6" fill="#404040"/><rect x="1207" y="680.8" width="3" height="2.6" fill="#404040"/><rect x="1212" y="680.8" width="3" height="2.6" fill="#404040"/><rect x="1217" y="680.8" width="3" height="2.6" fill="#404040"/><rect x="1172" y="699.8" width="3" height="2.6" fill="#404040"/><rect x="1177" y="699.8" width="3" height="2.6" fill="#404040"/><rect x="1182" y="699.8" width="3" height="2.6" fill="#404040"/><rect x="1187" y="699.8" width="3" height="2.6" fill="#404040"/><rect x="1192" y="699.8" width="3" height="2.6" fill="#404040"/><rect x="1197" y="699.8" width="3" height="2.6" fill="#404040"/><rect x="1202" y="699.8" width="3" height="2.6" fill="#404040"/><rect x="1207" y="699.8" width="3" height="2.6" fill="#404040"/><rect x="1212" y="699.8" width="3" height="2.6" fill="#404040"/><rect x="1217" y="699.8" width="3" height="2.6" fill="#404040"/><rect x="1172" y="718.8" width="3" height="2.6" fill="#404040"/><rect x="1177" y="718.8" width="3" height="2.6" fill="#404040"/><rect x="1182" y="718.8" width="3" height="2.6" fill="#404040"/><rect x="1187" y="718.8" width="3" height="2.6" fill="#404040"/><rect x="1192" y="718.8" width="3" height="2.6" fill="#404040"/><rect x="1197" y="718.8" width="3" height="2.6" fill="#404040"/><rect x="1202" y="718.8" width="3" height="2.6" fill="#404040"/><rect x="1207" y="718.8" width="3" height="2.6" fill="#404040"/><rect x="1212" y="718.8" width="3" height="2.6" fill="#404040"/><rect x="1217" y="718.8" width="3" height="2.6" fill="#404040"/><rect x="1172" y="737.8" width="3" height="2.6" fill="#404040"/><rect x="1177" y="737.8" width="3" height="2.6" fill="#404040"/><rect x="1182" y="737.8" width="3" height="2.6" fill="#404040"/><rect x="1187" y="737.8" width="3" height="2.6" fill="#404040"/><rect x="1192" y="737.8" width="3" height="2.6" fill="#404040"/><rect x="1197" y="737.8" width="3" height="2.6" fill="#404040"/><rect x="1202" y="737.8" width="3" height="2.6" fill="#404040"/><rect x="1207" y="737.8" width="3" height="2.6" fill="#404040"/><rect x="1212" y="737.8" width="3" height="2.6" fill="#404040"/><rect x="1217" y="737.8" width="3" height="2.6" fill="#404040"/><rect x="1172" y="756.8" width="3" height="2.6" fill="#404040"/><rect x="1177" y="756.8" width="3" height="2.6" fill="#404040"/><rect x="1182" y="756.8" width="3" height="2.6" fill="#404040"/><rect x="1187" y="756.8" width="3" height="2.6" fill="#404040"/><rect x="1192" y="756.8" width="3" height="2.6" fill="#404040"/><rect x="1197" y="756.8" width="3" height="2.6" fill="#404040"/><rect x="1202" y="756.8" width="3" height="2.6" fill="#404040"/><rect x="1207" y="756.8" width="3" height="2.6" fill="#404040"/><rect x="1212" y="756.8" width="3" height="2.6" fill="#404040"/><rect x="1217" y="756.8" width="3" height="2.6" fill="#404040"/><rect x="1172" y="775.8" width="3" height="2.6" fill="#404040"/><rect x="1177" y="775.8" width="3" height="2.6" fill="#404040"/><rect x="1182" y="775.8" width="3" height="2.6" fill="#404040"/><rect x="1187" y="775.8" width="3" height="2.6" fill="#404040"/><rect x="1192" y="775.8" width="3" height="2.6" fill="#404040"/><rect x="1197" y="775.8" width="3" height="2.6" fill="#404040"/><rect x="1202" y="775.8" width="3" height="2.6" fill="#404040"/><rect x="1207" y="775.8" width="3" height="2.6" fill="#404040"/><rect x="1212" y="775.8" width="3" height="2.6" fill="#404040"/><rect x="1217" y="775.8" width="3" height="2.6" fill="#404040"/><rect x="1172" y="794.8" width="3" height="2.6" fill="#404040"/><rect x="1177" y="794.8" width="3" height="2.6" fill="#404040"/><rect x="1182" y="794.8" width="3" height="2.6" fill="#404040"/><rect x="1187" y="794.8" width="3" height="2.6" fill="#404040"/><rect x="1192" y="794.8" width="3" height="2.6" fill="#404040"/><rect x="1197" y="794.8" width="3" height="2.6" fill="#404040"/><rect x="1202" y="794.8" width="3" height="2.6" fill="#404040"/><rect x="1207" y="794.8" width="3" height="2.6" fill="#404040"/><rect x="1212" y="794.8" width="3" height="2.6" fill="#404040"/><rect x="1217" y="794.8" width="3" height="2.6" fill="#404040"/><rect x="1172" y="813.8" width="3" height="2.6" fill="#404040"/><rect x="1177" y="813.8" width="3" height="2.6" fill="#404040"/><rect x="1182" y="813.8" width="3" height="2.6" fill="#404040"/><rect x="1187" y="813.8" width="3" height="2.6" fill="#404040"/><rect x="1192" y="813.8" width="3" height="2.6" fill="#404040"/><rect x="1197" y="813.8" width="3" height="2.6" fill="#404040"/><rect x="1202" y="813.8" width="3" height="2.6" fill="#404040"/><rect x="1207" y="813.8" width="3" height="2.6" fill="#404040"/><rect x="1212" y="813.8" width="3" height="2.6" fill="#404040"/><rect x="1217" y="813.8" width="3" height="2.6" fill="#404040"/><rect x="1172" y="832.8" width="3" height="2.6" fill="#404040"/><rect x="1177" y="832.8" width="3" height="2.6" fill="#404040"/><rect x="1182" y="832.8" width="3" height="2.6" fill="#404040"/><rect x="1187" y="832.8" width="3" height="2.6" fill="#404040"/><rect x="1192" y="832.8" width="3" height="2.6" fill="#404040"/><rect x="1197" y="832.8" width="3" height="2.6" fill="#404040"/><rect x="1202" y="832.8" width="3" height="2.6" fill="#404040"/><rect x="1207" y="832.8" width="3" height="2.6" fill="#404040"/><rect x="1212" y="832.8" width="3" height="2.6" fill="#404040"/><rect x="1217" y="832.8" width="3" height="2.6" fill="#404040"/><rect x="1172" y="851.8" width="3" height="2.6" fill="#404040"/><rect x="1177" y="851.8" width="3" height="2.6" fill="#404040"/><rect x="1182" y="851.8" width="3" height="2.6" fill="#404040"/><rect x="1187" y="851.8" width="3" height="2.6" fill="#404040"/><rect x="1192" y="851.8" width="3" height="2.6" fill="#404040"/><rect x="1197" y="851.8" width="3" height="2.6" fill="#404040"/><rect x="1202" y="851.8" width="3" height="2.6" fill="#404040"/><rect x="1207" y="851.8" width="3" height="2.6" fill="#404040"/><rect x="1212" y="851.8" width="3" height="2.6" fill="#404040"/><rect x="1217" y="851.8" width="3" height="2.6" fill="#404040"/><rect x="1172" y="870.8" width="3" height="2.6" fill="#404040"/><rect x="1177" y="870.8" width="3" height="2.6" fill="#404040"/><rect x="1182" y="870.8" width="3" height="2.6" fill="#404040"/><rect x="1187" y="870.8" width="3" height="2.6" fill="#404040"/><rect x="1192" y="870.8" width="3" height="2.6" fill="#404040"/><rect x="1197" y="870.8" width="3" height="2.6" fill="#404040"/><rect x="1202" y="870.8" width="3" height="2.6" fill="#404040"/><rect x="1207" y="870.8" width="3" height="2.6" fill="#404040"/><rect x="1212" y="870.8" width="3" height="2.6" fill="#404040"/><rect x="1217" y="870.8" width="3" height="2.6" fill="#404040"/><rect x="1172" y="889.8" width="3" height="2.6" fill="#404040"/><rect x="1177" y="889.8" width="3" height="2.6" fill="#404040"/><rect x="1182" y="889.8" width="3" height="2.6" fill="#404040"/><rect x="1187" y="889.8" width="3" height="2.6" fill="#404040"/><rect x="1192" y="889.8" width="3" height="2.6" fill="#404040"/><rect x="1197" y="889.8" width="3" height="2.6" fill="#404040"/><rect x="1202" y="889.8" width="3" height="2.6" fill="#404040"/><rect x="1207" y="889.8" width="3" height="2.6" fill="#404040"/><rect x="1212" y="889.8" width="3" height="2.6" fill="#404040"/><rect x="1217" y="889.8" width="3" height="2.6" fill="#404040"/><rect x="1172" y="908.8" width="3" height="2.6" fill="#404040"/><rect x="1177" y="908.8" width="3" height="2.6" fill="#404040"/><rect x="1182" y="908.8" width="3" height="2.6" fill="#404040"/><rect x="1187" y="908.8" width="3" height="2.6" fill="#404040"/><rect x="1192" y="908.8" width="3" height="2.6" fill="#404040"/><rect x="1197" y="908.8" width="3" height="2.6" fill="#404040"/><rect x="1202" y="908.8" width="3" height="2.6" fill="#404040"/><rect x="1207" y="908.8" width="3" height="2.6" fill="#404040"/><rect x="1212" y="908.8" width="3" height="2.6" fill="#404040"/><rect x="1217" y="908.8" width="3" height="2.6" fill="#404040"/>
</svg>
<span class="s" style="left:30px;top:0px">1</span>
<span class="t b" style="left:40px;top:0px;color:#eeeeee">cpu</span>
<span class="t b" style="left:110px;top:0px;color:#b54040">m</span>
<span class="t b" style="left:120px;top:0px;color:#eeeeee">enu</span>
<span class="t b" style="left:170px;top:0px;color:#b54040">p</span>
<span class="t b" style="left:180px;top:0px;color:#eeeeee">reset *</span>
<span class="t b" style="left:620px;top:0px;color:#eeeeee">03:53:18</span>
<span class="t b" style="left:1170px;top:0px;color:#b54040">-</span>
<span class="t b" style="left:1190px;top:0px;color:#eeeeee">2000ms</span>
<span class="t b" style="left:1260px;top:0px;color:#b54040">+</span>
<span class="t" style="left:20px;top:266px;color:#606060">up 00:52:57</span>
<span class="t b" style="left:670px;top:38px;color:#eeeeee">Ryzen 7 5825U</span>
<span class="t b" style="left:1200px;top:38px;color:#eeeeee">3.0 GHz</span>
<span class="t b" style="left:650px;top:57px;color:#eeeeee">CPU</span>
<span class="t" style="left:1140px;top:57px;color:#77ca9b">2</span>
<span class="t" style="left:1150px;top:57px;color:#cccccc">%</span>
<span class="t" style="left:1240px;top:57px;color:#cccccc">50°C</span>
<span class="t b" style="left:650px;top:76px;color:#cccccc">C</span>
<span class="t" style="left:660px;top:76px;color:#cccccc">0</span>
<span class="t" style="left:920px;top:76px;color:#77ca9b">  4</span>
<span class="t" style="left:950px;top:76px;color:#cccccc">%</span>
<span class="t b" style="left:970px;top:76px;color:#cccccc">C</span>
<span class="t" style="left:980px;top:76px;color:#cccccc">8</span>
<span class="t" style="left:1240px;top:76px;color:#77ca9b">  1</span>
<span class="t" style="left:1270px;top:76px;color:#cccccc">%</span>
<span class="t b" style="left:650px;top:95px;color:#cccccc">C</span>
<span class="t" style="left:660px;top:95px;color:#cccccc">1</span>
<span class="t" style="left:920px;top:95px;color:#77ca9b">  8</span>
<span class="t" style="left:950px;top:95px;color:#cccccc">%</span>
<span class="t b" style="left:970px;top:95px;color:#cccccc">C</span>
<span class="t" style="left:980px;top:95px;color:#cccccc">9</span>
<span class="t" style="left:1240px;top:95px;color:#77ca9b">  0</span>
<span class="t" style="left:1270px;top:95px;color:#cccccc">%</span>
<span class="t b" style="left:650px;top:114px;color:#cccccc">C</span>
<span class="t" style="left:660px;top:114px;color:#cccccc">2</span>
<span class="t" style="left:920px;top:114px;color:#77ca9b">  3</span>
<span class="t" style="left:950px;top:114px;color:#cccccc">%</span>
<span class="t b" style="left:970px;top:114px;color:#cccccc">C</span>
<span class="t" style="left:980px;top:114px;color:#cccccc">10</span>
<span class="t" style="left:1240px;top:114px;color:#77ca9b">  0</span>
<span class="t" style="left:1270px;top:114px;color:#cccccc">%</span>
<span class="t b" style="left:650px;top:133px;color:#cccccc">C</span>
<span class="t" style="left:660px;top:133px;color:#cccccc">3</span>
<span class="t" style="left:920px;top:133px;color:#77ca9b">  3</span>
<span class="t" style="left:950px;top:133px;color:#cccccc">%</span>
<span class="t b" style="left:970px;top:133px;color:#cccccc">C</span>
<span class="t" style="left:980px;top:133px;color:#cccccc">11</span>
<span class="t" style="left:1240px;top:133px;color:#77ca9b">  0</span>
<span class="t" style="left:1270px;top:133px;color:#cccccc">%</span>
<span class="t b" style="left:650px;top:152px;color:#cccccc">C</span>
<span class="t" style="left:660px;top:152px;color:#cccccc">4</span>
<span class="t" style="left:920px;top:152px;color:#77ca9b">  6</span>
<span class="t" style="left:950px;top:152px;color:#cccccc">%</span>
<span class="t b" style="left:970px;top:152px;color:#cccccc">C</span>
<span class="t" style="left:980px;top:152px;color:#cccccc">12</span>
<span class="t" style="left:1240px;top:152px;color:#77ca9b">  1</span>
<span class="t" style="left:1270px;top:152px;color:#cccccc">%</span>
<span class="t b" style="left:650px;top:171px;color:#cccccc">C</span>
<span class="t" style="left:660px;top:171px;color:#cccccc">5</span>
<span class="t" style="left:920px;top:171px;color:#77ca9b">  4</span>
<span class="t" style="left:950px;top:171px;color:#cccccc">%</span>
<span class="t b" style="left:970px;top:171px;color:#cccccc">C</span>
<span class="t" style="left:980px;top:171px;color:#cccccc">13</span>
<span class="t" style="left:1240px;top:171px;color:#77ca9b">  1</span>
<span class="t" style="left:1270px;top:171px;color:#cccccc">%</span>
<span class="t b" style="left:650px;top:190px;color:#cccccc">C</span>
<span class="t" style="left:660px;top:190px;color:#cccccc">6</span>
<span class="t" style="left:920px;top:190px;color:#77ca9b">  3</span>
<span class="t" style="left:950px;top:190px;color:#cccccc">%</span>
<span class="t b" style="left:970px;top:190px;color:#cccccc">C</span>
<span class="t" style="left:980px;top:190px;color:#cccccc">14</span>
<span class="t" style="left:1240px;top:190px;color:#77ca9b">  1</span>
<span class="t" style="left:1270px;top:190px;color:#cccccc">%</span>
<span class="t b" style="left:650px;top:209px;color:#cccccc">C</span>
<span class="t" style="left:660px;top:209px;color:#cccccc">7</span>
<span class="t" style="left:920px;top:209px;color:#77ca9b">  2</span>
<span class="t" style="left:950px;top:209px;color:#cccccc">%</span>
<span class="t b" style="left:970px;top:209px;color:#cccccc">C</span>
<span class="t" style="left:980px;top:209px;color:#cccccc">15</span>
<span class="t" style="left:1240px;top:209px;color:#77ca9b">  1</span>
<span class="t" style="left:1270px;top:209px;color:#cccccc">%</span>
<span class="t" style="left:970px;top:228px;color:#cccccc">Load AVG:</span>
<span class="t" style="left:1090px;top:228px;color:#cccccc">3.40</span>
<span class="t" style="left:1160px;top:228px;color:#cccccc">3.06</span>
<span class="t" style="left:1230px;top:228px;color:#cccccc">2.62</span>
<span class="s" style="left:30px;top:304px">2</span>
<span class="t b" style="left:40px;top:304px;color:#eeeeee">mem</span>
<span class="t b" style="left:310px;top:304px;color:#b54040">d</span>
<span class="t b" style="left:320px;top:304px;color:#eeeeee">isks</span>
<span class="t b" style="left:540px;top:304px;color:#b54040">i</span>
<span class="t b" style="left:550px;top:304px;color:#eeeeee">o</span>
<span class="t b" style="left:20px;top:323px;color:#eeeeee">Total:</span>
<span class="t b" style="left:190px;top:323px;color:#eeeeee">28.2 GiB</span>
<span class="t" style="left:20px;top:342px;color:#cccccc">Used:</span>
<span class="t" style="left:190px;top:342px;color:#cccccc">1.42</span>
<span class="t" style="left:240px;top:342px;color:#cccccc">GiB</span>
<span class="t" style="left:20px;top:399px;color:#cccccc">Available:</span>
<span class="t" style="left:190px;top:399px;color:#cccccc">26.8</span>
<span class="t" style="left:240px;top:399px;color:#cccccc">GiB</span>
<span class="t" style="left:20px;top:456px;color:#cccccc">Cached:</span>
<span class="t" style="left:190px;top:456px;color:#cccccc">1.54</span>
<span class="t" style="left:240px;top:456px;color:#cccccc">GiB</span>
<span class="t" style="left:20px;top:513px;color:#cccccc">Free:</span>
<span class="t" style="left:190px;top:513px;color:#cccccc">25.8</span>
<span class="t" style="left:240px;top:513px;color:#cccccc">GiB</span>
<span class="t" style="left:20px;top:361px;color:#cccccc">  5%</span>
<span class="t" style="left:20px;top:418px;color:#cccccc"> 95%</span>
<span class="t" style="left:20px;top:475px;color:#cccccc">  5%</span>
<span class="t" style="left:20px;top:532px;color:#cccccc"> 91%</span>
<span class="t b" style="left:300px;top:323px;color:#eeeeee">root</span>
<span class="t b" style="left:490px;top:323px;color:#eeeeee">14.1</span>
<span class="t b" style="left:540px;top:323px;color:#eeeeee">GiB</span>
<span class="t" style="left:300px;top:342px;color:#cccccc">Used:</span>
<span class="t" style="left:350px;top:342px;color:#cccccc">  2%</span>
<span class="t" style="left:490px;top:342px;color:#cccccc"> 287 MiB</span>
<span class="t" style="left:300px;top:361px;color:#cccccc">Free:</span>
<span class="t" style="left:350px;top:361px;color:#cccccc"> 98%</span>
<span class="t" style="left:490px;top:361px;color:#cccccc">13.8 GiB</span>
<span class="t b" style="left:300px;top:399px;color:#eeeeee">tmp</span>
<span class="t b" style="left:490px;top:399px;color:#eeeeee">14.1</span>
<span class="t b" style="left:540px;top:399px;color:#eeeeee">GiB</span>
<span class="t" style="left:300px;top:418px;color:#cccccc">Used:</span>
<span class="t" style="left:350px;top:418px;color:#cccccc">  0%</span>
<span class="t" style="left:490px;top:418px;color:#cccccc">8.00 KiB</span>
<span class="t" style="left:300px;top:437px;color:#cccccc">Free:</span>
<span class="t" style="left:350px;top:437px;color:#cccccc">100%</span>
<span class="t" style="left:490px;top:437px;color:#cccccc">14.1 GiB</span>
<span class="s" style="left:30px;top:646px">3</span>
<span class="t b" style="left:40px;top:646px;color:#eeeeee">net</span>
<span class="t b" style="left:90px;top:646px;color:#eeeeee">192.168.3.44</span>
<span class="t b" style="left:270px;top:646px;color:#eeeeee">s</span>
<span class="t b" style="left:280px;top:646px;color:#b54040">y</span>
<span class="t b" style="left:290px;top:646px;color:#eeeeee">nc</span>
<span class="t b" style="left:330px;top:646px;color:#b54040">a</span>
<span class="t b" style="left:340px;top:646px;color:#eeeeee">uto</span>
<span class="t" style="left:390px;top:646px;color:#b54040">z</span>
<span class="t" style="left:400px;top:646px;color:#cccccc">ero</span>
<span class="t b" style="left:450px;top:646px;color:#b54040">&lt;b</span>
<span class="t b" style="left:480px;top:646px;color:#eeeeee">enp1s0</span>
<span class="t b" style="left:550px;top:646px;color:#b54040">n&gt;</span>
<span class="t" style="left:10px;top:665px;color:#606060">10K</span>
<span class="t" style="left:10px;top:893px;color:#606060">10K</span>
<span class="t b" style="left:340px;top:703px;color:#eeeeee">download</span>
<span class="t b" style="left:340px;top:855px;color:#eeeeee">upload</span>
<span class="t" style="left:340px;top:722px;color:#cccccc">0 Byte/s</span>
<span class="t" style="left:480px;top:722px;color:#cccccc">(0 bitps)</span>
<span class="t" style="left:340px;top:741px;color:#cccccc">Top:</span>
<span class="t" style="left:450px;top:741px;color:#cccccc">(14.5 Kibps)</span>
<span class="t" style="left:340px;top:760px;color:#cccccc">Total:</span>
<span class="t" style="left:490px;top:760px;color:#cccccc">29.5 MiB</span>
<span class="t" style="left:340px;top:798px;color:#cccccc">0 Byte/s</span>
<span class="t" style="left:480px;top:798px;color:#cccccc">(0 bitps)</span>
<span class="t" style="left:340px;top:817px;color:#cccccc">Top:</span>
<span class="t" style="left:450px;top:817px;color:#cccccc">(20.3 Kibps)</span>
<span class="t" style="left:340px;top:836px;color:#cccccc">Total:</span>
<span class="t" style="left:490px;top:836px;color:#cccccc">1.13 MiB</span>
<span class="s" style="left:620px;top:304px">4</span>
<span class="t b" style="left:630px;top:304px;color:#eeeeee">proc</span>
<span class="t" style="left:690px;top:304px;color:#b54040">f</span>
<span class="t" style="left:700px;top:304px;color:#cccccc">ilter</span>
<span class="t" style="left:900px;top:304px;color:#cccccc">per-</span>
<span class="t" style="left:940px;top:304px;color:#b54040">c</span>
<span class="t" style="left:950px;top:304px;color:#cccccc">ore</span>
<span class="t" style="left:1000px;top:304px;color:#b54040">r</span>
<span class="t" style="left:1010px;top:304px;color:#cccccc">everse</span>
<span class="t" style="left:1090px;top:304px;color:#cccccc">tre</span>
<span class="t" style="left:1120px;top:304px;color:#b54040">e</span>
<span class="t b" style="left:1150px;top:304px;color:#b54040">&lt;</span>
<span class="t b" style="left:1170px;top:304px;color:#eeeeee">cpu lazy</span>
<span class="t b" style="left:1260px;top:304px;color:#b54040">&gt;</span>
<span class="t b" style="left:630px;top:912px;color:#eeeeee">select</span>
<span class="t b" style="left:730px;top:912px;color:#404040">info</span>
<span class="t b" style="left:810px;top:912px;color:#404040">terminate</span>
<span class="t b" style="left:920px;top:912px;color:#404040">kill</span>
<span class="t b" style="left:980px;top:912px;color:#404040">signals</span>
<span class="t b" style="left:1230px;top:912px;color:#eeeeee">0/405</span>
<span class="t b" style="left:640px;top:323px;color:#eeeeee">Pid:</span>
<span class="t b" style="left:690px;top:323px;color:#eeeeee">Program:</span>
<span class="t b" style="left:860px;top:323px;color:#eeeeee">Command:</span>
<span class="t b" style="left:1050px;top:323px;color:#eeeeee">User:</span>
<span class="t b" style="left:1120px;top:323px;color:#eeeeee">MemB</span>
<span class="t b" style="left:1230px;top:323px;color:#eeeeee">Cpu%</span>
<span class="t" style="left:600px;top:342px;color:#cccccc">    6447</span>
<span class="t" style="left:690px;top:342px;color:#80d0a3">xfce4-screensho</span>
<span class="t" style="left:860px;top:342px;color:#cccccc">xfce4-screenshoote</span>
<span class="t" style="left:1050px;top:342px;color:#cccccc">user</span>
<span class="t" style="left:1130px;top:342px;color:#80d0a3">37M</span>
<span class="t" style="left:1240px;top:342px;color:#80d0a3">0.9</span>
<span class="t" style="left:600px;top:361px;color:#c7c7c7">    1854</span>
<span class="t" style="left:690px;top:361px;color:#7ecba0">Xorg</span>
<span class="t" style="left:860px;top:361px;color:#c7c7c7">/usr/lib/xorg/Xorg</span>
<span class="t" style="left:1050px;top:361px;color:#c7c7c7">root</span>
<span class="t" style="left:1120px;top:361px;color:#7ecba0">133M</span>
<span class="t" style="left:1240px;top:361px;color:#7ecba0">0.7</span>
<span class="t" style="left:600px;top:380px;color:#c3c3c3">    2720</span>
<span class="t" style="left:690px;top:380px;color:#7cc79d">latency-histogr</span>
<span class="t" style="left:860px;top:380px;color:#c3c3c3">/usr/bin/tclsh /us</span>
<span class="t" style="left:1050px;top:380px;color:#c3c3c3">user</span>
<span class="t" style="left:1130px;top:380px;color:#7cc79d">19M</span>
<span class="t" style="left:1240px;top:380px;color:#7cc79d">0.0</span>
<span class="t" style="left:600px;top:399px;color:#bebebe">    5608</span>
<span class="t" style="left:690px;top:399px;color:#7ac299">btop</span>
<span class="t" style="left:860px;top:399px;color:#bebebe">btop</span>
<span class="t" style="left:1050px;top:399px;color:#bebebe">user</span>
<span class="t" style="left:1120px;top:399px;color:#7ac299">6.1M</span>
<span class="t" style="left:1240px;top:399px;color:#7ac299">0.0</span>
<span class="t" style="left:600px;top:418px;color:#bababa">    2727</span>
<span class="t" style="left:690px;top:418px;color:#78bd96">rtapi_app</span>
<span class="t" style="left:860px;top:418px;color:#bababa">/usr/bin/rtapi_app</span>
<span class="t" style="left:1050px;top:418px;color:#bababa">root</span>
<span class="t" style="left:1130px;top:418px;color:#78bd96">49M</span>
<span class="t" style="left:1240px;top:418px;color:#78bd96">0.0</span>
<span class="t" style="left:600px;top:437px;color:#b5b5b5">    2366</span>
<span class="t" style="left:690px;top:437px;color:#76b993">xfce4-terminal</span>
<span class="t" style="left:860px;top:437px;color:#b5b5b5">xfce4-terminal</span>
<span class="t" style="left:1050px;top:437px;color:#b5b5b5">user</span>
<span class="t" style="left:1130px;top:437px;color:#76b993">49M</span>
<span class="t" style="left:1240px;top:437px;color:#76b993">0.0</span>
<span class="t" style="left:600px;top:456px;color:#b1b1b1">    2040</span>
<span class="t" style="left:690px;top:456px;color:#74b490">xfce4-panel</span>
<span class="t" style="left:860px;top:456px;color:#b1b1b1">xfce4-panel</span>
<span class="t" style="left:1050px;top:456px;color:#b1b1b1">user</span>
<span class="t" style="left:1130px;top:456px;color:#74b490">50M</span>
<span class="t" style="left:1240px;top:456px;color:#74b490">0.0</span>
<span class="t" style="left:600px;top:475px;color:#acacac">    2008</span>
<span class="t" style="left:690px;top:475px;color:#72af8d">xfwm4</span>
<span class="t" style="left:860px;top:475px;color:#acacac">xfwm4</span>
<span class="t" style="left:1050px;top:475px;color:#acacac">user</span>
<span class="t" style="left:1130px;top:475px;color:#72af8d">38M</span>
<span class="t" style="left:1240px;top:475px;color:#72af8d">0.0</span>
<span class="t" style="left:600px;top:494px;color:#a8a8a8">      17</span>
<span class="t" style="left:690px;top:494px;color:#6fab89">ksoftirqd/0</span>
<span class="t" style="left:1050px;top:494px;color:#a8a8a8">root</span>
<span class="t" style="left:1140px;top:494px;color:#6fab89">0B</span>
<span class="t" style="left:1240px;top:494px;color:#6fab89">0.0</span>
<span class="t" style="left:600px;top:513px;color:#a3a3a3">       1</span>
<span class="t" style="left:690px;top:513px;color:#6da686">systemd</span>
<span class="t" style="left:860px;top:513px;color:#a3a3a3">/sbin/init compone</span>
<span class="t" style="left:1050px;top:513px;color:#a3a3a3">root</span>
<span class="t" style="left:1130px;top:513px;color:#6da686">14M</span>
<span class="t" style="left:1240px;top:513px;color:#6da686">0.0</span>
<span class="t" style="left:600px;top:532px;color:#9f9f9f">      44</span>
<span class="t" style="left:690px;top:532px;color:#6ba283">ksoftirqd/4</span>
<span class="t" style="left:1050px;top:532px;color:#9f9f9f">root</span>
<span class="t" style="left:1140px;top:532px;color:#6ba283">0B</span>
<span class="t" style="left:1240px;top:532px;color:#6ba283">0.0</span>
<span class="t" style="left:600px;top:551px;color:#9a9a9a">      35</span>
<span class="t" style="left:690px;top:551px;color:#699d80">ksoftirqd/2</span>
<span class="t" style="left:1050px;top:551px;color:#9a9a9a">root</span>
<span class="t" style="left:1140px;top:551px;color:#699d80">0B</span>
<span class="t" style="left:1240px;top:551px;color:#699d80">0.0</span>
<span class="t" style="left:600px;top:570px;color:#969696">     125</span>
<span class="t" style="left:690px;top:570px;color:#67987d">ksoftirqd/7</span>
<span class="t" style="left:1050px;top:570px;color:#969696">root</span>
<span class="t" style="left:1140px;top:570px;color:#67987d">0B</span>
<span class="t" style="left:1240px;top:570px;color:#67987d">0.0</span>
<span class="t" style="left:600px;top:589px;color:#919191">      98</span>
<span class="t" style="left:690px;top:589px;color:#659479">ksoftirqd/1</span>
<span class="t" style="left:1050px;top:589px;color:#919191">root</span>
<span class="t" style="left:1140px;top:589px;color:#659479">0B</span>
<span class="t" style="left:1240px;top:589px;color:#659479">0.0</span>
<span class="t" style="left:600px;top:608px;color:#8d8d8d">      53</span>
<span class="t" style="left:690px;top:608px;color:#638f76">ksoftirqd/6</span>
<span class="t" style="left:1050px;top:608px;color:#8d8d8d">root</span>
<span class="t" style="left:1140px;top:608px;color:#638f76">0B</span>
<span class="t" style="left:1240px;top:608px;color:#638f76">0.0</span>
<span class="t" style="left:600px;top:627px;color:#888888">     116</span>
<span class="t" style="left:690px;top:627px;color:#618a73">ksoftirqd/5</span>
<span class="t" style="left:1050px;top:627px;color:#888888">root</span>
<span class="t" style="left:1140px;top:627px;color:#618a73">0B</span>
<span class="t" style="left:1240px;top:627px;color:#618a73">0.0</span>
<span class="t" style="left:600px;top:646px;color:#848484">      62</span>
<span class="t" style="left:690px;top:646px;color:#5f8670">ksoftirqd/8</span>
<span class="t" style="left:1050px;top:646px;color:#848484">root</span>
<span class="t" style="left:1140px;top:646px;color:#5f8670">0B</span>
<span class="t" style="left:1240px;top:646px;color:#5f8670">0.0</span>
<span class="t" style="left:600px;top:665px;color:#7f7f7f">      80</span>
<span class="t" style="left:690px;top:665px;color:#5d816d">ksoftirqd/12</span>
<span class="t" style="left:1050px;top:665px;color:#7f7f7f">root</span>
<span class="t" style="left:1140px;top:665px;color:#5d816d">0B</span>
<span class="t" style="left:1240px;top:665px;color:#5d816d">0.0</span>
<span class="t" style="left:600px;top:684px;color:#7b7b7b">     107</span>
<span class="t" style="left:690px;top:684px;color:#5b7c6a">ksoftirqd/3</span>
<span class="t" style="left:1050px;top:684px;color:#7b7b7b">root</span>
<span class="t" style="left:1140px;top:684px;color:#5b7c6a">0B</span>
<span class="t" style="left:1240px;top:684px;color:#5b7c6a">0.0</span>
<span class="t" style="left:600px;top:703px;color:#767676">      71</span>
<span class="t" style="left:690px;top:703px;color:#597866">ksoftirqd/10</span>
<span class="t" style="left:1050px;top:703px;color:#767676">root</span>
<span class="t" style="left:1140px;top:703px;color:#597866">0B</span>
<span class="t" style="left:1240px;top:703px;color:#597866">0.0</span>
<span class="t" style="left:600px;top:722px;color:#727272">     134</span>
<span class="t" style="left:690px;top:722px;color:#577363">ksoftirqd/9</span>
<span class="t" style="left:1050px;top:722px;color:#727272">root</span>
<span class="t" style="left:1140px;top:722px;color:#577363">0B</span>
<span class="t" style="left:1240px;top:722px;color:#577363">0.0</span>
<span class="t" style="left:600px;top:741px;color:#6d6d6d">     152</span>
<span class="t" style="left:690px;top:741px;color:#556e60">ksoftirqd/13</span>
<span class="t" style="left:1050px;top:741px;color:#6d6d6d">root</span>
<span class="t" style="left:1140px;top:741px;color:#556e60">0B</span>
<span class="t" style="left:1240px;top:741px;color:#556e60">0.0</span>
<span class="t" style="left:600px;top:760px;color:#696969">      89</span>
<span class="t" style="left:690px;top:760px;color:#536a5d">ksoftirqd/14</span>
<span class="t" style="left:1050px;top:760px;color:#696969">root</span>
<span class="t" style="left:1140px;top:760px;color:#536a5d">0B</span>
<span class="t" style="left:1240px;top:760px;color:#536a5d">0.0</span>
<span class="t" style="left:600px;top:779px;color:#646464">     143</span>
<span class="t" style="left:690px;top:779px;color:#51655a">ksoftirqd/11</span>
<span class="t" style="left:1050px;top:779px;color:#646464">root</span>
<span class="t" style="left:1140px;top:779px;color:#51655a">0B</span>
<span class="t" style="left:1240px;top:779px;color:#51655a">0.0</span>
<span class="t" style="left:600px;top:798px;color:#606060">     161</span>
<span class="t" style="left:690px;top:798px;color:#4e6156">ksoftirqd/15</span>
<span class="t" style="left:1050px;top:798px;color:#606060">root</span>
<span class="t" style="left:1140px;top:798px;color:#4e6156">0B</span>
<span class="t" style="left:1240px;top:798px;color:#4e6156">0.0</span>
<span class="t" style="left:600px;top:817px;color:#5b5b5b">     463</span>
<span class="t" style="left:690px;top:817px;color:#4c5c53">irq/84-amdgpu</span>
<span class="t" style="left:1050px;top:817px;color:#5b5b5b">root</span>
<span class="t" style="left:1140px;top:817px;color:#4c5c53">0B</span>
<span class="t" style="left:1240px;top:817px;color:#4c5c53">0.0</span>
<span class="t" style="left:600px;top:836px;color:#575757">     456</span>
<span class="t" style="left:690px;top:836px;color:#4a5750">irq/76-xhci_hcd</span>
<span class="t" style="left:1050px;top:836px;color:#575757">root</span>
<span class="t" style="left:1140px;top:836px;color:#4a5750">0B</span>
<span class="t" style="left:1240px;top:836px;color:#4a5750">0.0</span>
<span class="t" style="left:600px;top:855px;color:#525252">    2059</span>
<span class="t" style="left:690px;top:855px;color:#48534d">xfdesktop</span>
<span class="t" style="left:860px;top:855px;color:#525252">xfdesktop</span>
<span class="t" style="left:1050px;top:855px;color:#525252">user</span>
<span class="t" style="left:1120px;top:855px;color:#48534d">100M</span>
<span class="t" style="left:1240px;top:855px;color:#48534d">0.0</span>
<span class="t" style="left:600px;top:874px;color:#4e4e4e">    4199</span>
<span class="t" style="left:690px;top:874px;color:#464e4a">kworker/u64:0-gf</span>
<span class="t" style="left:1050px;top:874px;color:#4e4e4e">root</span>
<span class="t" style="left:1140px;top:874px;color:#464e4a">0B</span>
<span class="t" style="left:1240px;top:874px;color:#464e4a">0.0</span>
<span class="t" style="left:600px;top:893px;color:#494949">    5695</span>
<span class="t" style="left:690px;top:893px;color:#444946">kworker/u64:6-gf</span>
<span class="t" style="left:1050px;top:893px;color:#494949">root</span>
<span class="t" style="left:1140px;top:893px;color:#444946">0B</span>
<span class="t" style="left:1240px;top:893px;color:#444946">0.0</span>
</div></div>
<!-- histogram window -->
<style>
.en{position:absolute;box-sizing:border-box;background:#d9d9d9;border:1px solid;border-color:#828282 #fff #fff #828282}
.bt{position:absolute;box-sizing:border-box;background:#d9d9d9;border:1px solid;border-color:#fff #828282 #828282 #fff}
.rd{position:absolute;width:10.6px;height:10.6px;border-radius:50%;background:#fff;box-sizing:border-box;border:1px solid;border-color:#9a9a9a #ececec #ececec #9a9a9a}
</style>
<div class="abs" style="left:1343px;top:52px;width:555px;height:575px;background:#f6f5f4;border-radius:7px 7px 0 0;box-shadow:0 0 0 1px rgba(0,0,0,0.16)"></div>
<div class="abs" style="left:1347px;top:80px;width:547px;height:543px;background:#d9d9d9"></div>
<!-- window icon -->
<svg class="abs" style="left:1348px;top:57px" width="20" height="18" viewBox="0 0 20 18">
<rect x="0.5" y="0.5" width="19" height="17" rx="1.5" fill="#e9e9e7" stroke="#b5b3b0"/>
<rect x="1" y="1" width="18" height="2.4" fill="#6d8fd0"/>
<rect x="1.2" y="4" width="17.6" height="13" fill="#f2f2f1"/>
</svg>
<svg class="abs" style="left:1828px;top:58px" width="66" height="18" viewBox="0 0 66 18" fill="none" stroke="#929290" stroke-width="2.1">
<path d="M5.6 11.2L9.6 7.2L13.6 11.2"/>
<path d="M28 12.2H37" stroke-width="2"/>
<path d="M51.2 4.6L59.8 13.2M59.8 4.6L51.2 13.2" stroke-width="2.2"/>
</svg>
<!-- chart frame -->
<div class="abs" style="left:1378px;top:143px;width:484px;height:457px;box-sizing:border-box;border:1px solid;border-color:#828282 #fff #fff #828282;background:#d9d9d9"></div>
<div class="abs" style="left:1379px;top:144px;width:482px;height:455px;box-sizing:border-box;border:1px solid;border-color:#fff #828282 #828282 #fff"></div>
<svg class="abs" style="left:1379px;top:144px" width="483" height="456" viewBox="1379 144 483 456" shape-rendering="crispEdges">
<rect x="1418" y="164" width="439" height="340" fill="#f0fff0"/>
<path d="M1420 493.5 H1856" stroke="#9e9e9e" stroke-width="1" stroke-dasharray="1 1 3 1 1 1 4 2" stroke-dashoffset="11"/>
<path d="M1420 476.5 H1856" stroke="#9e9e9e" stroke-width="1" stroke-dasharray="2 1 1 2 2 1 3 1 1 1 3 1 1 2 2 1 1 2" stroke-dashoffset="25"/>
<path d="M1420 466.5 H1856" stroke="#9e9e9e" stroke-width="1" stroke-dasharray="2 1 1 2 2 1 3 1 1 1 3 1 1 2 2 1 1 2" stroke-dashoffset="25"/>
<path d="M1420 460.5 H1856" stroke="#9e9e9e" stroke-width="1" stroke-dasharray="2 1 1 2 2 1 3 1 1 1 3 1 1 2 2 1 1 2" stroke-dashoffset="25"/>
<path d="M1420 454.5 H1856" stroke="#9e9e9e" stroke-width="1" stroke-dasharray="2 1 1 2 2 1 3 1 1 1 3 1 1 2 2 1 1 2" stroke-dashoffset="25"/>
<path d="M1420 450.5 H1856" stroke="#9e9e9e" stroke-width="1" stroke-dasharray="2 1 1 2 2 1 3 1 1 1 3 1 1 2 2 1 1 2" stroke-dashoffset="25"/>
<path d="M1420 446.5 H1856" stroke="#9e9e9e" stroke-width="1" stroke-dasharray="2 1 1 2 2 1 3 1 1 1 3 1 1 2 2 1 1 2" stroke-dashoffset="25"/>
<path d="M1420 443.5 H1856" stroke="#9e9e9e" stroke-width="1" stroke-dasharray="1 1 3 1 1 1 4 2" stroke-dashoffset="11"/>
<path d="M1420 440.5 H1856" stroke="#9e9e9e" stroke-width="1" stroke-dasharray="2 1 1 2 2 1 3 1 1 1 3 1 1 2 2 1 1 2" stroke-dashoffset="25"/>
<path d="M1420 438.5 H1856" stroke="#9e9e9e" stroke-width="1" stroke-dasharray="2 1 1 2 2 1 3 1 1 1 3 1 1 2 2 1 1 2" stroke-dashoffset="25"/>
<path d="M1420 422.5 H1856" stroke="#9e9e9e" stroke-width="1" stroke-dasharray="2 1 1 2 2 1 3 1 1 1 3 1 1 2 2 1 1 2" stroke-dashoffset="25"/>
<path d="M1420 412.5 H1856" stroke="#9e9e9e" stroke-width="1" stroke-dasharray="2 1 1 2 2 1 3 1 1 1 3 1 1 2 2 1 1 2" stroke-dashoffset="25"/>
<path d="M1420 405.5 H1856" stroke="#9e9e9e" stroke-width="1" stroke-dasharray="1 1 3 1 1 1 4 2" stroke-dashoffset="11"/>
<path d="M1420 400.5 H1856" stroke="#9e9e9e" stroke-width="1" stroke-dasharray="2 1 1 2 2 1 3 1 1 1 3 1 1 2 2 1 1 2" stroke-dashoffset="25"/>
<path d="M1420 395.5 H1856" stroke="#9e9e9e" stroke-width="1" stroke-dasharray="1 1 3 1 1 1 4 2" stroke-dashoffset="11"/>
<path d="M1420 392.5 H1856" stroke="#9e9e9e" stroke-width="1" stroke-dasharray="2 1 1 2 2 1 3 1 1 1 3 1 1 2 2 1 1 2" stroke-dashoffset="25"/>
<path d="M1420 389.5 H1856" stroke="#9e9e9e" stroke-width="1" stroke-dasharray="1 1 3 1 1 1 4 2" stroke-dashoffset="11"/>
<path d="M1420 386.5 H1856" stroke="#9e9e9e" stroke-width="1" stroke-dasharray="2 1 1 2 2 1 3 1 1 1 3 1 1 2 2 1 1 2" stroke-dashoffset="25"/>
<path d="M1420 383.5 H1856" stroke="#9e9e9e" stroke-width="1" stroke-dasharray="1 1 3 1 1 1 4 2" stroke-dashoffset="11"/>
<path d="M1420 367.5 H1856" stroke="#9e9e9e" stroke-width="1" stroke-dasharray="1 1 3 1 1 1 4 2" stroke-dashoffset="11"/>
<path d="M1420 357.5 H1856" stroke="#9e9e9e" stroke-width="1" stroke-dasharray="1 1 3 1 1 1 4 2" stroke-dashoffset="11"/>
<path d="M1420 351.5 H1856" stroke="#9e9e9e" stroke-width="1" stroke-dasharray="1 1 3 1 1 1 4 2" stroke-dashoffset="11"/>
<path d="M1420 345.5 H1856" stroke="#9e9e9e" stroke-width="1" stroke-dasharray="1 1 3 1 1 1 4 2" stroke-dashoffset="11"/>
<path d="M1420 341.5 H1856" stroke="#9e9e9e" stroke-width="1" stroke-dasharray="1 1 3 1 1 1 4 2" stroke-dashoffset="11"/>
<path d="M1420 337.5 H1856" stroke="#9e9e9e" stroke-width="1" stroke-dasharray="1 1 3 1 1 1 4 2" stroke-dashoffset="11"/>
<path d="M1420 334.5 H1856" stroke="#9e9e9e" stroke-width="1" stroke-dasharray="2 1 1 2 2 1 3 1 1 1 3 1 1 2 2 1 1 2" stroke-dashoffset="25"/>
<path d="M1420 331.5 H1856" stroke="#9e9e9e" stroke-width="1" stroke-dasharray="1 1 3 1 1 1 4 2" stroke-dashoffset="11"/>
<path d="M1420 329.5 H1856" stroke="#9e9e9e" stroke-width="1" stroke-dasharray="1 1 3 1 1 1 4 2" stroke-dashoffset="11"/>
<path d="M1420 312.5 H1856" stroke="#9e9e9e" stroke-width="1" stroke-dasharray="2 1 1 2 2 1 3 1 1 1 3 1 1 2 2 1 1 2" stroke-dashoffset="25"/>
<path d="M1420 303.5 H1856" stroke="#9e9e9e" stroke-width="1" stroke-dasharray="1 1 3 1 1 1 4 2" stroke-dashoffset="11"/>
<path d="M1420 296.5 H1856" stroke="#9e9e9e" stroke-width="1" stroke-dasharray="2 1 1 2 2 1 3 1 1 1 3 1 1 2 2 1 1 2" stroke-dashoffset="25"/>
<path d="M1420 291.5 H1856" stroke="#9e9e9e" stroke-width="1" stroke-dasharray="1 1 3 1 1 1 4 2" stroke-dashoffset="11"/>
<path d="M1420 286.5 H1856" stroke="#9e9e9e" stroke-width="1" stroke-dasharray="2 1 1 2 2 1 3 1 1 1 3 1 1 2 2 1 1 2" stroke-dashoffset="25"/>
<path d="M1420 283.5 H1856" stroke="#9e9e9e" stroke-width="1" stroke-dasharray="1 1 3 1 1 1 4 2" stroke-dashoffset="11"/>
<path d="M1420 280.5 H1856" stroke="#9e9e9e" stroke-width="1" stroke-dasharray="2 1 1 2 2 1 3 1 1 1 3 1 1 2 2 1 1 2" stroke-dashoffset="25"/>
<path d="M1420 277.5 H1856" stroke="#9e9e9e" stroke-width="1" stroke-dasharray="1 1 3 1 1 1 4 2" stroke-dashoffset="11"/>
<path d="M1420 274.5 H1856" stroke="#9e9e9e" stroke-width="1" stroke-dasharray="2 1 1 2 2 1 3 1 1 1 3 1 1 2 2 1 1 2" stroke-dashoffset="25"/>
<path d="M1420 258.5 H1856" stroke="#9e9e9e" stroke-width="1" stroke-dasharray="2 1 1 2 2 1 3 1 1 1 3 1 1 2 2 1 1 2" stroke-dashoffset="25"/>
<path d="M1420 248.5 H1856" stroke="#9e9e9e" stroke-width="1" stroke-dasharray="2 1 1 2 2 1 3 1 1 1 3 1 1 2 2 1 1 2" stroke-dashoffset="25"/>
<path d="M1420 241.5 H1856" stroke="#9e9e9e" stroke-width="1" stroke-dasharray="1 1 3 1 1 1 4 2" stroke-dashoffset="11"/>
<path d="M1420 236.5 H1856" stroke="#9e9e9e" stroke-width="1" stroke-dasharray="2 1 1 2 2 1 3 1 1 1 3 1 1 2 2 1 1 2" stroke-dashoffset="25"/>
<path d="M1420 232.5 H1856" stroke="#9e9e9e" stroke-width="1" stroke-dasharray="2 1 1 2 2 1 3 1 1 1 3 1 1 2 2 1 1 2" stroke-dashoffset="25"/>
<path d="M1420 228.5 H1856" stroke="#9e9e9e" stroke-width="1" stroke-dasharray="2 1 1 2 2 1 3 1 1 1 3 1 1 2 2 1 1 2" stroke-dashoffset="25"/>
<path d="M1420 225.5 H1856" stroke="#9e9e9e" stroke-width="1" stroke-dasharray="1 1 3 1 1 1 4 2" stroke-dashoffset="11"/>
<path d="M1420 222.5 H1856" stroke="#9e9e9e" stroke-width="1" stroke-dasharray="2 1 1 2 2 1 3 1 1 1 3 1 1 2 2 1 1 2" stroke-dashoffset="25"/>
<path d="M1420 220.5 H1856" stroke="#9e9e9e" stroke-width="1" stroke-dasharray="2 1 1 2 2 1 3 1 1 1 3 1 1 2 2 1 1 2" stroke-dashoffset="25"/>
<path d="M1420 203.5 H1856" stroke="#9e9e9e" stroke-width="1" stroke-dasharray="1 1 3 1 1 1 4 2" stroke-dashoffset="11"/>
<path d="M1420 194.5 H1856" stroke="#9e9e9e" stroke-width="1" stroke-dasharray="2 1 1 2 2 1 3 1 1 1 3 1 1 2 2 1 1 2" stroke-dashoffset="25"/>
<path d="M1420 187.5 H1856" stroke="#9e9e9e" stroke-width="1" stroke-dasharray="1 1 3 1 1 1 4 2" stroke-dashoffset="11"/>
<path d="M1420 182.5 H1856" stroke="#9e9e9e" stroke-width="1" stroke-dasharray="2 1 1 2 2 1 3 1 1 1 3 1 1 2 2 1 1 2" stroke-dashoffset="25"/>
<path d="M1420 177.5 H1856" stroke="#9e9e9e" stroke-width="1" stroke-dasharray="1 1 3 1 1 1 4 2" stroke-dashoffset="11"/>
<path d="M1420 174.5 H1856" stroke="#9e9e9e" stroke-width="1" stroke-dasharray="2 1 1 2 2 1 3 1 1 1 3 1 1 2 2 1 1 2" stroke-dashoffset="25"/>
<path d="M1415.5 174 V494" stroke="#000" stroke-width="1"/>
<path d="M1407 493.5 H1416" stroke="#000" stroke-width="1"/>
<path d="M1410 476.5 H1416" stroke="#000" stroke-width="1"/>
<path d="M1410 466.5 H1416" stroke="#000" stroke-width="1"/>
<path d="M1410 460.5 H1416" stroke="#000" stroke-width="1"/>
<path d="M1410 454.5 H1416" stroke="#000" stroke-width="1"/>
<path d="M1410 450.5 H1416" stroke="#000" stroke-width="1"/>
<path d="M1410 446.5 H1416" stroke="#000" stroke-width="1"/>
<path d="M1410 443.5 H1416" stroke="#000" stroke-width="1"/>
<path d="M1410 440.5 H1416" stroke="#000" stroke-width="1"/>
<path d="M1407 438.5 H1416" stroke="#000" stroke-width="1"/>
<path d="M1410 422.5 H1416" stroke="#000" stroke-width="1"/>
<path d="M1410 412.5 H1416" stroke="#000" stroke-width="1"/>
<path d="M1410 405.5 H1416" stroke="#000" stroke-width="1"/>
<path d="M1410 400.5 H1416" stroke="#000" stroke-width="1"/>
<path d="M1410 395.5 H1416" stroke="#000" stroke-width="1"/>
<path d="M1410 392.5 H1416" stroke="#000" stroke-width="1"/>
<path d="M1410 389.5 H1416" stroke="#000" stroke-width="1"/>
<path d="M1410 386.5 H1416" stroke="#000" stroke-width="1"/>
<path d="M1407 383.5 H1416" stroke="#000" stroke-width="1"/>
<path d="M1410 367.5 H1416" stroke="#000" stroke-width="1"/>
<path d="M1410 357.5 H1416" stroke="#000" stroke-width="1"/>
<path d="M1410 351.5 H1416" stroke="#000" stroke-width="1"/>
<path d="M1410 345.5 H1416" stroke="#000" stroke-width="1"/>
<path d="M1410 341.5 H1416" stroke="#000" stroke-width="1"/>
<path d="M1410 337.5 H1416" stroke="#000" stroke-width="1"/>
<path d="M1410 334.5 H1416" stroke="#000" stroke-width="1"/>
<path d="M1410 331.5 H1416" stroke="#000" stroke-width="1"/>
<path d="M1407 329.5 H1416" stroke="#000" stroke-width="1"/>
<path d="M1410 312.5 H1416" stroke="#000" stroke-width="1"/>
<path d="M1410 303.5 H1416" stroke="#000" stroke-width="1"/>
<path d="M1410 296.5 H1416" stroke="#000" stroke-width="1"/>
<path d="M1410 291.5 H1416" stroke="#000" stroke-width="1"/>
<path d="M1410 286.5 H1416" stroke="#000" stroke-width="1"/>
<path d="M1410 283.5 H1416" stroke="#000" stroke-width="1"/>
<path d="M1410 280.5 H1416" stroke="#000" stroke-width="1"/>
<path d="M1410 277.5 H1416" stroke="#000" stroke-width="1"/>
<path d="M1407 274.5 H1416" stroke="#000" stroke-width="1"/>
<path d="M1410 258.5 H1416" stroke="#000" stroke-width="1"/>
<path d="M1410 248.5 H1416" stroke="#000" stroke-width="1"/>
<path d="M1410 241.5 H1416" stroke="#000" stroke-width="1"/>
<path d="M1410 236.5 H1416" stroke="#000" stroke-width="1"/>
<path d="M1410 232.5 H1416" stroke="#000" stroke-width="1"/>
<path d="M1410 228.5 H1416" stroke="#000" stroke-width="1"/>
<path d="M1410 225.5 H1416" stroke="#000" stroke-width="1"/>
<path d="M1410 222.5 H1416" stroke="#000" stroke-width="1"/>
<path d="M1407 220.5 H1416" stroke="#000" stroke-width="1"/>
<path d="M1410 203.5 H1416" stroke="#000" stroke-width="1"/>
<path d="M1410 194.5 H1416" stroke="#000" stroke-width="1"/>
<path d="M1410 187.5 H1416" stroke="#000" stroke-width="1"/>
<path d="M1410 182.5 H1416" stroke="#000" stroke-width="1"/>
<path d="M1410 177.5 H1416" stroke="#000" stroke-width="1"/>
<path d="M1410 174.5 H1416" stroke="#000" stroke-width="1"/>
<path d="M1558 494V470.1H1559V460.1H1560V452.1H1561V446.1H1562V440.8H1563V439.9H1564V439.0H1565V437.5H1566V436.0H1567V436.0H1568V436.0H1569V441.0H1570V433.1H1571V424.1H1572V420.0H1573V420.0H1574V418.1H1575V413.0H1576V409.3H1577V409.3H1578V409.3H1579V412.4H1580V412.4H1581V412.4H1582V412.4H1583V410.0H1584V409.2H1585V409.2H1586V403.8H1587V400.6H1588V397.8H1589V395.4H1590V391.0H1591V387.0H1592V383.0H1593V380.6H1594V380.5H1595V380.3H1596V380.2H1597V380.2H1598V380.3H1599V380.5H1600V380.6H1601V381.5H1602V382.4H1603V385.2H1604V386.0H1605V380.1H1606V376.7H1607V374.0H1608V371.3H1609V368.5H1610V365.8H1611V363.0H1612V358.4H1613V353.7H1614V348.9H1615V344.0H1616V339.0H1617V333.1H1618V329.0H1619V327.5H1620V325.5H1621V324.5H1622V321.0H1623V317.0H1624V315.0H1625V311.0H1626V302.6H1627V292.6H1628V277.6H1629V262.2H1630V246.2H1631V230.2H1632V216.1H1633V205.1H1634V195.1H1635V174.4H1636V174.2H1637V174.2H1638V174.2H1639V213.0H1640V228.0H1641V245.0H1642V262.0H1643V277.0H1644V292.5H1645V305.0H1646V315.0H1647V322.0H1648V327.5H1649V328.5H1650V333.0H1651V337.0H1652V339.5H1653V345.0H1654V345.8H1655V347.3H1656V351.0H1657V354.7H1658V358.1H1659V361.4H1660V365.2H1661V367.9H1662V370.0H1663V372.2H1664V370.4H1665V369.6H1666V368.7H1667V367.7H1668V366.3H1669V364.9H1670V363.7H1671V363.0H1672V362.2H1673V361.1H1674V359.9H1675V359.9H1676V361.1H1677V358.9H1678V358.9H1679V360.0H1680V365.3H1681V367.7H1682V370.8H1683V375.5H1684V380.0H1685V384.4H1686V387.6H1687V390.2H1688V398.0H1689V405.8H1690V406.2H1691V407.5H1692V415.8H1693V415.4H1694V417.0H1695V424.8H1696V422.2H1697V422.2H1698V422.9H1699V426.7H1700V432.0H1701V432.0H1702V431.9H1703V431.9H1704V440.8H1705V445.9H1706V448.7H1707V444.1H1708V435.6H1709V432.2H1710V433.8H1711V433.4H1712V427.0H1713V423.7H1714V423.7H1715V425.4H1716V415.9H1717V412.4H1718V412.4H1719V412.4H1720V412.4H1721V414.3H1722V418.6H1723V419.7H1724V423.1H1725V429.1H1726V426.2H1727V426.4H1728V431.3H1729V432.3H1730V433.3H1731V440.0H1732V447.0H1733V453.9H1734V454.6H1735V454.6H1736V457.2H1737V461.6H1738V466.2H1739V466.7H1740V482.7H1741V494Z" fill="#0000ff"/>
<rect x="1428" y="492.6" width="419" height="1.6" fill="#0000ff"/>
<rect x="1490" y="490.7" width="2" height="3" fill="#0000ff"/>
<rect x="1495.8" y="490.7" width="2" height="3" fill="#0000ff"/>
<rect x="1507.2" y="490.7" width="2" height="3" fill="#0000ff"/>
<rect x="1511.7" y="490.7" width="2.5" height="3" fill="#0000ff"/>
<rect x="1516.7" y="490.7" width="2.1" height="3" fill="#0000ff"/>
<rect x="1530.8" y="490.7" width="2.2" height="3" fill="#0000ff"/>
<rect x="1539" y="490.7" width="4.3" height="3" fill="#0000ff"/>
<rect x="1553.3" y="490.7" width="3" height="3" fill="#0000ff"/>
<rect x="1741.5" y="490.7" width="2.5" height="3" fill="#0000ff"/>
<rect x="1754.2" y="490.7" width="3.8" height="3" fill="#0000ff"/>
<rect x="1782" y="490.7" width="1.8" height="3" fill="#0000ff"/>
<rect x="1537" y="476.2" width="2.2" height="17.8" fill="#0000ff"/>
<rect x="1543.3" y="476.2" width="1.4" height="17.8" fill="#0000ff"/>
<rect x="1545.8" y="466.2" width="2.2" height="27.8" fill="#0000ff"/>
<rect x="1549.2" y="476.2" width="1.1" height="17.8" fill="#0000ff"/>
<rect x="1551.7" y="476.2" width="1.6" height="17.8" fill="#0000ff"/>
<rect x="1556.3" y="476.2" width="1.7" height="17.8" fill="#0000ff"/>
<rect x="1744" y="476.2" width="2" height="17.8" fill="#0000ff"/>
<rect shape-rendering="geometricPrecision" x="1418" y="164" width="439" height="1.8" fill="#000"/>
<rect shape-rendering="geometricPrecision" x="1418" y="164" width="1.7" height="340" fill="#000"/>
<rect shape-rendering="geometricPrecision" x="1427.8" y="505.9" width="419.2" height="1.3" fill="#000"/>
<rect shape-rendering="geometricPrecision" x="1428" y="506" width="1.3" height="8.4" fill="#000"/>
<rect shape-rendering="geometricPrecision" x="1532.6" y="506" width="1.3" height="8.4" fill="#000"/>
<rect shape-rendering="geometricPrecision" x="1595.36" y="506" width="1.3" height="8.4" fill="#000"/>
<rect shape-rendering="geometricPrecision" x="1616.28" y="506" width="1.3" height="8.4" fill="#000"/>
<rect shape-rendering="geometricPrecision" x="1637.2" y="506" width="1.3" height="8.4" fill="#000"/>
<rect shape-rendering="geometricPrecision" x="1658.12" y="506" width="1.3" height="8.4" fill="#000"/>
<rect shape-rendering="geometricPrecision" x="1679.04" y="506" width="1.3" height="8.4" fill="#000"/>
<rect shape-rendering="geometricPrecision" x="1741.8" y="506" width="1.3" height="8.4" fill="#000"/>
<rect shape-rendering="geometricPrecision" x="1846.4" y="506" width="1.3" height="8.4" fill="#000"/>
</svg>
<!-- entries -->
<div class="en" style="left:1439px;top:530px;width:76px;height:21px"></div>
<div class="en" style="left:1593px;top:530px;width:76px;height:21px"></div>
<div class="en" style="left:1783px;top:530px;width:76px;height:21px"></div>
<div class="en" style="left:1381px;top:553px;width:76px;height:21px"></div>
<div class="en" style="left:1783px;top:553px;width:76px;height:21px"></div>
<div class="en" style="left:1810px;top:601px;width:52px;height:21px"></div>
<!-- radio buttons -->
<div class="rd" style="left:1502.7px;top:580.7px"></div>
<div class="rd" style="left:1541.7px;top:580.7px"></div>
<div class="rd" style="left:1580.5px;top:580.7px"></div>
<div class="rd" style="left:1627.5px;top:580.7px"></div>
<div class="rd" style="left:1674.7px;top:580.7px"></div>
<div class="rd" style="left:1721.7px;top:580.7px"></div>
<div class="rd" style="left:1776.7px;top:580.7px"></div>
<div class="abs" style="left:1779.9px;top:583.9px;width:4.2px;height:4.2px;border-radius:50%;background:#000"></div>
<!-- buttons -->
<div class="bt" style="left:1348px;top:601px;width:41px;height:21px"></div>
<div class="bt" style="left:1500px;top:601px;width:76px;height:21px"></div>
<div class="bt" style="left:1618px;top:601px;width:62px;height:21px"></div>
<div class="bt" style="left:1864px;top:601px;width:29px;height:21px"></div>
<!-- checkbox -->
<div class="en" style="left:1399px;top:606px;width:11px;height:11px;background:#fff"></div>
<svg class="abs" style="left:1400px;top:607px" width="9" height="9" viewBox="0 0 9 9"><path d="M1.2 4.2L3.4 6.8L7.8 1.6" fill="none" stroke="#000" stroke-width="1.7"/></svg>

<div class="abs" style="left:0;top:0;width:1920px;height:1080px;will-change:transform">
<span class="u" style="left:19.77px;top:1.70px;font-size:14.5px;color:#2b2f31;transform:scaleX(1.0226);">Applications</span>
<span class="u" style="left:138.28px;top:1.70px;font-size:14.5px;color:#2b2f31;transform:scaleX(1.0464);">/usr/bin/latency-histogr...</span>
<span class="u" style="left:338.27px;top:1.70px;font-size:14.5px;color:#2b2f31;transform:scaleX(1.0133);">Terminal - user@debian...</span>
<span class="u" style="left:1734.95px;top:-3.20px;font-size:10.9px;color:#2b2f31;transform:scaleX(1.1505);">2026-01-29</span>
<span class="u" style="left:1750.95px;top:7.80px;font-size:10.9px;color:#2b2f31;transform:scaleX(1.1775);">03:53</span>
<span class="u" style="left:1809.78px;top:1.70px;font-size:14.5px;color:#2b2f31;transform:scaleX(1.0013);">Debian Live user</span>
<span class="u" style="left:545.77px;top:37.70px;font-size:14.5px;color:#2e3436;transform:scaleX(0.9994);font-weight:bold;">Terminal - user@debian: ~</span>
<span class="u" style="left:19.77px;top:63.70px;font-size:14.5px;color:#2e3436;transform:scaleX(1.0037);">File</span>
<span class="u" style="left:58.77px;top:63.70px;font-size:14.5px;color:#2e3436;transform:scaleX(1.0386);">Edit</span>
<span class="u" style="left:99.28px;top:63.70px;font-size:14.5px;color:#2e3436;transform:scaleX(1.0412);">View</span>
<span class="u" style="left:147.28px;top:63.70px;font-size:14.5px;color:#2e3436;transform:scaleX(1.0302);">Terminal</span>
<span class="u" style="left:219.28px;top:63.70px;font-size:14.5px;color:#2e3436;transform:scaleX(0.9615);">Tabs</span>
<span class="u" style="left:264.77px;top:63.70px;font-size:14.5px;color:#2e3436;transform:scaleX(1.0378);">Help</span>
<span class="u" style="left:36.77px;top:96.20px;font-size:14.5px;color:#2e3436;transform:scaleX(1.0141);">user@debian: ~</span>
<span class="u" style="left:472.77px;top:96.20px;font-size:14.5px;color:#2e3436;transform:scaleX(1.0141);">user@debian: ~</span>
<span class="u" style="left:908.77px;top:96.20px;font-size:14.5px;color:#2e3436;transform:scaleX(1.0141);">user@debian: ~</span>
<span class="u" style="left:1507.98px;top:56.30px;font-size:14.5px;color:#9a9996;transform:scaleX(0.9965);font-weight:bold;">/usr/bin/latency-histogram</span>
<span class="u" style="left:1348.97px;top:80.10px;font-size:14.7px;color:#000000;transform:scaleX(0.9723);">29Jan2026 debian user</span>
<span class="u" style="left:1352.57px;top:101.40px;font-size:14.7px;color:#000000;transform:scaleX(0.9934);">x86_64</span>
<span class="u" style="left:1407.57px;top:101.40px;font-size:14.7px;color:#000000;transform:scaleX(1.0172);">6.12.57+deb13-rt-amd64</span>
<span class="u" style="left:1579.57px;top:101.40px;font-size:14.7px;color:#000000;transform:scaleX(1.0062);">2.9.8</span>
<span class="u" style="left:1619.57px;top:101.40px;font-size:14.7px;color:#000000;transform:scaleX(0.9590);">DISPLAY=:0.0</span>
<span class="u" style="left:1353.47px;top:122.40px;font-size:14.7px;color:#000000;transform:scaleX(0.9041);">16</span>
<span class="u" style="left:1372.97px;top:122.40px;font-size:14.7px;color:#000000;transform:scaleX(0.9820);">cores</span>
<span class="u" style="left:1415.57px;top:122.40px;font-size:14.7px;color:#000000;transform:scaleX(0.9858);">no_isolcpus</span>
<span class="u" style="left:1503.47px;top:122.40px;font-size:14.7px;color:#000000;transform:scaleX(1.0010);">AuthenticAMD</span>
<span class="u" style="left:1604.27px;top:122.40px;font-size:14.7px;color:#000000;transform:scaleX(0.9642);">AMD</span>
<span class="u" style="left:1639.37px;top:122.40px;font-size:14.7px;color:#000000;transform:scaleX(1.0153);">Ryzen</span>
<span class="u" style="left:1683.77px;top:122.40px;font-size:14.7px;color:#000000;transform:scaleX(1.0369);">7</span>
<span class="u" style="left:1695.87px;top:122.40px;font-size:14.7px;color:#000000;transform:scaleX(0.9720);">5825U</span>
<span class="u" style="left:1741.97px;top:122.40px;font-size:14.7px;color:#000000;transform:scaleX(1.0862);">with</span>
<span class="u" style="left:1773.37px;top:122.40px;font-size:14.7px;color:#000000;transform:scaleX(0.9674);">Radeon</span>
<span class="u" style="left:1826.77px;top:122.40px;font-size:14.7px;color:#000000;transform:scaleX(0.9745);">Graphics</span>
<span class="u" style="left:1445.58px;top:141.80px;font-size:14.5px;color:#000000;transform:scaleX(0.9881);">Latency (µs) servo thread (1000.0 µs period, binsize=0.1 µs)</span>
<span class="u" style="left:1384.12px;top:482.15px;font-size:11.5px;color:#000000;transform:scaleX(0.9261);">1E0</span>
<span class="u" style="left:1384.12px;top:427.15px;font-size:11.5px;color:#000000;transform:scaleX(0.9261);">1E1</span>
<span class="u" style="left:1384.12px;top:372.15px;font-size:11.5px;color:#000000;transform:scaleX(0.9261);">1E2</span>
<span class="u" style="left:1384.12px;top:318.15px;font-size:11.5px;color:#000000;transform:scaleX(0.9261);">1E3</span>
<span class="u" style="left:1384.12px;top:263.15px;font-size:11.5px;color:#000000;transform:scaleX(0.9261);">1E4</span>
<span class="u" style="left:1384.12px;top:209.15px;font-size:11.5px;color:#000000;transform:scaleX(0.9261);">1E5</span>
<span class="u" style="left:1420.72px;top:510.40px;font-size:11.5px;color:#000000;transform:scaleX(0.9115);">-20</span>
<span class="u" style="left:1524.92px;top:510.40px;font-size:11.5px;color:#000000;transform:scaleX(0.8934);">-10</span>
<span class="u" style="left:1591.12px;top:510.40px;font-size:11.5px;color:#000000;transform:scaleX(0.8459);">-4</span>
<span class="u" style="left:1611.92px;top:510.40px;font-size:11.5px;color:#000000;transform:scaleX(0.8753);">-2</span>
<span class="u" style="left:1633.62px;top:510.40px;font-size:11.5px;color:#000000;transform:scaleX(1.0398);">0</span>
<span class="u" style="left:1653.62px;top:510.40px;font-size:11.5px;color:#000000;transform:scaleX(0.9616);">2</span>
<span class="u" style="left:1674.42px;top:510.40px;font-size:11.5px;color:#000000;transform:scaleX(1.0085);">4</span>
<span class="u" style="left:1735.22px;top:510.40px;font-size:11.5px;color:#000000;transform:scaleX(0.9108);">10</span>
<span class="u" style="left:1839.42px;top:510.40px;font-size:11.5px;color:#000000;transform:scaleX(0.9655);">20</span>
<span class="u" style="left:1381.77px;top:530.30px;font-size:14.7px;color:#000000;transform:scaleX(1.0175);">min (µs)</span>
<span class="u" style="left:1479.77px;top:530.30px;font-size:14.7px;color:#000000;transform:scaleX(1.0147);">-14.0</span>
<span class="u" style="left:1529.57px;top:530.30px;font-size:14.7px;color:#000000;transform:scaleX(0.9947);">sdev (µs)</span>
<span class="u" style="left:1646.77px;top:530.30px;font-size:14.7px;color:#000000;transform:scaleX(1.0124);">0.4</span>
<span class="u" style="left:1721.77px;top:530.30px;font-size:14.7px;color:#000000;transform:scaleX(1.0218);">max (µs)</span>
<span class="u" style="left:1829.27px;top:530.30px;font-size:14.7px;color:#000000;transform:scaleX(0.9854);">14.0</span>
<span class="u" style="left:1447.27px;top:553.40px;font-size:14.7px;color:#000000;transform:scaleX(1.0002);">0</span>
<span class="u" style="left:1460.47px;top:553.40px;font-size:14.7px;color:#000000;transform:scaleX(1.0396);">&lt;--off-chart neg bin ct</span>
<span class="u" style="left:1635.57px;top:553.40px;font-size:14.7px;color:#000000;transform:scaleX(1.0393);">off-chart pos bin ct--&gt;</span>
<span class="u" style="left:1848.97px;top:553.40px;font-size:14.7px;color:#000000;transform:scaleX(1.0369);">0</span>
<span class="u" style="left:1381.77px;top:576.10px;font-size:14.7px;color:#000000;transform:scaleX(1.0360);">Display +/- bins:</span>
<span class="u" style="left:1519.77px;top:576.10px;font-size:14.7px;color:#000000;transform:scaleX(1.0369);">2</span>
<span class="u" style="left:1558.77px;top:576.10px;font-size:14.7px;color:#000000;transform:scaleX(1.0614);">4</span>
<span class="u" style="left:1598.07px;top:576.10px;font-size:14.7px;color:#000000;transform:scaleX(1.0081);">10</span>
<span class="u" style="left:1644.57px;top:576.10px;font-size:14.7px;color:#000000;transform:scaleX(1.0387);">20</span>
<span class="u" style="left:1691.77px;top:576.10px;font-size:14.7px;color:#000000;transform:scaleX(1.0387);">40</span>
<span class="u" style="left:1739.27px;top:576.10px;font-size:14.7px;color:#000000;transform:scaleX(0.9781);">100</span>
<span class="u" style="left:1793.77px;top:576.10px;font-size:14.7px;color:#000000;transform:scaleX(1.0190);">200</span>
<span class="u" style="left:1349.77px;top:601.40px;font-size:14.7px;color:#000000;transform:scaleX(0.9896);">Reset</span>
<span class="u" style="left:1413.97px;top:601.40px;font-size:14.7px;color:#000000;transform:scaleX(1.0219);">ylogscale</span>
<span class="u" style="left:1501.77px;top:601.40px;font-size:14.7px;color:#000000;transform:scaleX(0.9848);">Screenshot</span>
<span class="u" style="left:1619.57px;top:601.40px;font-size:14.7px;color:#000000;transform:scaleX(0.9983);">Glxgears</span>
<span class="u" style="left:1682.97px;top:601.40px;font-size:14.7px;color:#000000;transform:scaleX(1.0124);">0</span>
<span class="u" style="left:1714.57px;top:601.40px;font-size:14.7px;color:#000000;transform:scaleX(0.9951);">Elapsed Time:</span>
<span class="u" style="left:1827.97px;top:601.40px;font-size:14.7px;color:#000000;transform:scaleX(0.9785);">2177</span>
<span class="u" style="left:1865.97px;top:601.40px;font-size:14.7px;color:#000000;transform:scaleX(1.0648);">Exit</span>
</div>
<svg class="abs" style="left:1820px;top:926px" width="16" height="24" viewBox="0 0 16 24"><path d="M1.5 1.6V17.8L4.8 14.5L7.4 20.1Q8.5 21.2 9.8 20.4Q11 19.5 10.5 18.2L8.1 12.9H12.6Z" fill="#000" stroke="#fff" stroke-width="1.1" stroke-linejoin="round"/></svg>
</body></html>
